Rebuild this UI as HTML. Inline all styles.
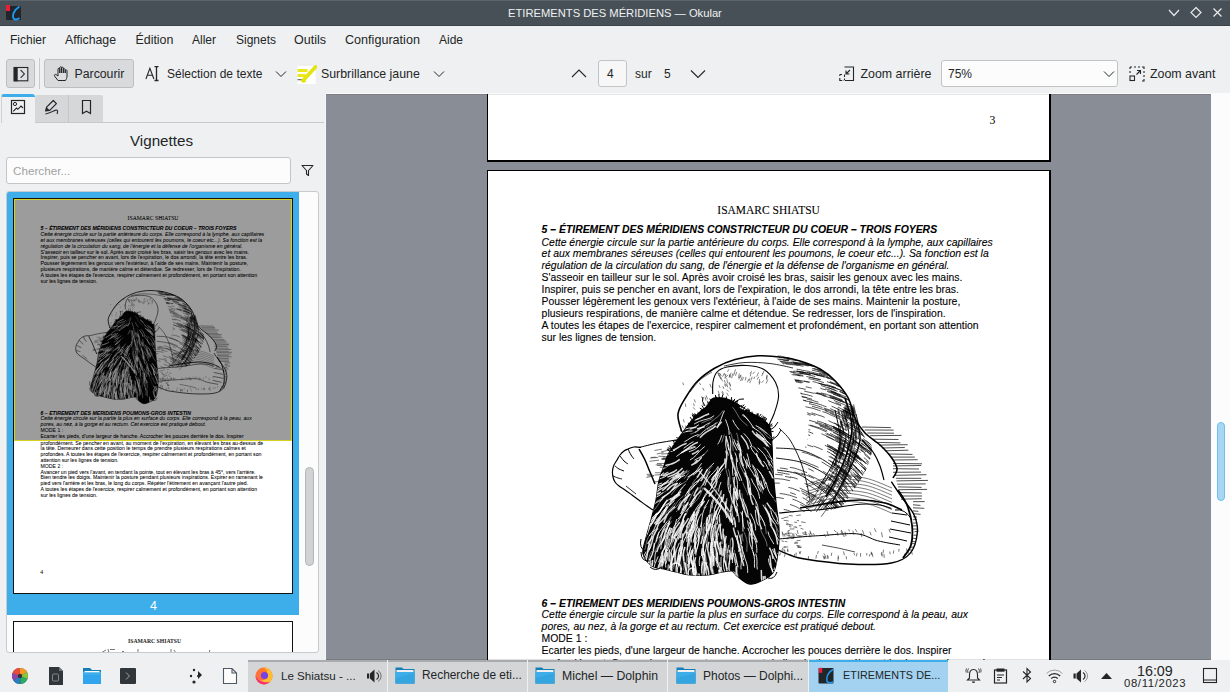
<!DOCTYPE html>
<html><head><meta charset="utf-8">
<style>
*{box-sizing:border-box}
html,body{margin:0;padding:0}
body{width:1230px;height:692px;overflow:hidden;position:relative;background:#eff0f1;font-family:"Liberation Sans",sans-serif;color:#232627}
.a{position:absolute}
.t{position:absolute;white-space:pre;line-height:1}
#title{left:0;top:0;width:1230px;height:26px;background:#475057;border-top:1px solid #5b646c;border-bottom:1px solid #3b4349}
.menu{font-size:12px;top:34px}
.tb{font-size:12px;top:68px}
.btn{position:absolute;border:1px solid #bcbebf;border-radius:3px;background:#d9dadc}
#doc{left:326px;top:94px;width:885px;height:566px;background:#898d95;overflow:hidden}
#vscroll{left:1211px;top:94px;width:19px;height:566px;background:#fcfcfc}
#task{left:0;top:660px;width:1230px;height:32px;background:#eff0f1}
.tk{position:absolute;top:660px;height:32px;background:#d4d5d7;border-top:2px solid #a9abae}
.tkt{font-size:12px;top:670px}
.page{position:absolute;background:#fff;border:1px solid #000;border-right-width:2px;border-bottom-width:2px}
.pc{position:absolute;left:0;top:0;width:564px;height:796px;font-family:"Liberation Sans",sans-serif;color:#000}
.pc .ln{position:absolute;left:55px;white-space:pre;font-size:10.37px;line-height:1;-webkit-text-stroke:0.1px #000}
.pc .i{font-style:italic}
.pc .b{font-weight:bold;font-style:italic}
</style></head>
<body>
<!-- title bar -->
<div id="title" class="a"></div>
<svg class="a" style="left:5px;top:4px" width="17" height="17" viewBox="0 0 17 17">
 <rect x="1" y="2" width="15" height="14" rx="1" fill="#232629"/>
 <rect x="1" y="1" width="4" height="6" fill="#ed1c3a"/>
 <path d="M14.5 2.5 C9 6 7 11 8.5 14.5 C10 16 12.5 15.5 14.5 14" stroke="#1d99f3" stroke-width="1.8" fill="none"/>
</svg>
<div class="t" style="left:508px;top:8px;font-size:11.2px;color:#eff0f1">ETIREMENTS DES MÉRIDIENS — Okular</div>
<svg class="a" style="left:1166px;top:5px" width="60" height="16" viewBox="0 0 60 16">
 <path d="M3 5 L8 10.5 L13 5" stroke="#e8eaec" stroke-width="1.2" fill="none"/>
 <path d="M30 2.5 L35 7.5 L30 12.5 L25 7.5 Z" stroke="#e8eaec" stroke-width="1.2" fill="none"/>
 <path d="M47.5 3.5 L55.5 11.5 M55.5 3.5 L47.5 11.5" stroke="#e8eaec" stroke-width="1.2" fill="none"/>
</svg>

<!-- menu -->
<div class="t menu" style="left:10px">Fichier</div>
<div class="t menu" style="left:65px;font-size:12.3px">Affichage</div>
<div class="t menu" style="left:135.5px;font-size:12.4px">Édition</div>
<div class="t menu" style="left:192px">Aller</div>
<div class="t menu" style="left:236px">Signets</div>
<div class="t menu" style="left:294px;font-size:12.5px">Outils</div>
<div class="t menu" style="left:345px;font-size:12.6px">Configuration</div>
<div class="t menu" style="left:439px">Aide</div>

<!-- toolbar -->
<div class="btn" style="left:6px;top:59px;width:29px;height:29px"></div>
<div class="a" style="left:39px;top:58px;width:1px;height:31px;background:#c9cacb"></div>
<div class="btn" style="left:44px;top:59px;width:90px;height:29px"></div>
<div class="t tb" style="left:74.5px;font-size:12.3px">Parcourir</div>
<div class="t tb" style="left:167px">Sélection de texte</div>
<div class="t tb" style="left:321px;font-size:12.35px">Surbrillance jaune</div>
<div class="a" style="left:598px;top:60px;width:29px;height:27px;border:1px solid #c2c3c5;border-radius:3px;background:#f7f7f7"></div>
<div class="t tb" style="left:607px">4</div>
<div class="t tb" style="left:635px">sur</div>
<div class="t tb" style="left:664px">5</div>
<div class="t tb" style="left:860.5px;font-size:12.4px">Zoom arrière</div>
<div class="a" style="left:941px;top:60px;width:177px;height:27px;border:1px solid #c2c3c5;border-radius:3px;background:#fcfcfc"></div>
<div class="t tb" style="left:948px">75%</div>
<div class="t tb" style="left:1150px;font-size:12.4px">Zoom avant</div>

<!-- toolbar icons -->
<svg class="a" style="left:13px;top:66px" width="16" height="16" viewBox="0 0 16 16">
 <rect x="1.2" y="1.5" width="13.6" height="13.3" fill="#dfe0e2" stroke="#232627" stroke-width="1.1"/>
 <rect x="0.7" y="1" width="4" height="14.3" fill="#232627"/>
 <path d="M7.6 4 L11.4 7.9 L7.6 11.8" fill="none" stroke="#31363b" stroke-width="1.1"/>
</svg>
<svg class="a" style="left:53px;top:65px" width="17" height="17" viewBox="0 0 17 17">
 <path d="M5 15.5 L1.5 11 C1 10 2 9 3 9.5 L5 11 V4 C5 3 6.8 3 6.8 4 V8 V2.5 C6.8 1.5 8.6 1.5 8.6 2.5 V8 V3 C8.6 2 10.4 2 10.4 3 V8 V4.5 C10.4 3.5 12.2 3.5 12.2 4.5 V8 V5.5 C12.2 4.7 14 4.7 14 5.5 V11 C14 13 13 14.5 12.5 15.5 Z" fill="#fff" fill-opacity="0.1" stroke="#232627" stroke-width="1" stroke-linejoin="round"/>
</svg>
<svg class="a" style="left:145px;top:66px" width="16" height="16" viewBox="0 0 16 16">
 <path d="M0.9 13 L4.9 2.3 L8.9 13 M2.4 9.3 H7.4" fill="none" stroke="#232627" stroke-width="1.1"/>
 <path d="M9.5 0.6 H13.5 M11.5 0.6 V14.5 M9.5 14.5 H13.5" fill="none" stroke="#232627" stroke-width="1.3"/>
</svg>
<svg class="a" style="left:297px;top:64px" width="20" height="21" viewBox="0 0 20 21">
 <rect x="0.5" y="0.5" width="18" height="19.5" fill="#fff"/>
 <rect x="0.5" y="0.5" width="18" height="1" fill="#e4e4e4"/>
 <rect x="0.5" y="5" width="10" height="3" fill="#e8e81a"/>
 <rect x="0.5" y="10" width="8" height="3" fill="#e8e81a"/>
 <rect x="0.5" y="15" width="5" height="1.3" fill="#777"/>
 <path d="M18.5 3 L6 16.5" stroke="#e4e412" stroke-width="3.8" stroke-linecap="round"/>
 <path d="M5 17.5 L9 17.5" stroke="#dede00" stroke-width="1.5"/>
</svg>
<svg class="a" style="left:275px;top:70px" width="12" height="8" viewBox="0 0 12 8"><path d="M1 1.5 L6 6.5 L11 1.5" fill="none" stroke="#232627" stroke-width="1"/></svg>
<svg class="a" style="left:433px;top:70px" width="12" height="8" viewBox="0 0 12 8"><path d="M1 1.5 L6 6.5 L11 1.5" fill="none" stroke="#232627" stroke-width="1"/></svg>
<svg class="a" style="left:571px;top:68px" width="16" height="10" viewBox="0 0 16 10"><path d="M1 9 L8 2 L15 9" fill="none" stroke="#232627" stroke-width="1.1"/></svg>
<svg class="a" style="left:690px;top:69px" width="16" height="10" viewBox="0 0 16 10"><path d="M1 1.5 L8 8.5 L15 1.5" fill="none" stroke="#232627" stroke-width="1.1"/></svg>
<svg class="a" style="left:1103px;top:70px" width="12" height="8" viewBox="0 0 12 8"><path d="M1 1.5 L6 6.5 L11 1.5" fill="none" stroke="#232627" stroke-width="1"/></svg>
<svg class="a" style="left:839px;top:66px" width="16" height="16" viewBox="0 0 16 16">
 <path d="M5.5 1 H14.5 V14.5 H6" fill="none" stroke="#232627" stroke-width="1.1"/>
 <path d="M0.8 8.5 V10 M0.8 12 V14.5 H3.2 M5.2 14.5 H4.6 M0.8 8.5 H3 M5.5 8.5 V11 M5.5 12.5 V14" fill="none" stroke="#232627" stroke-width="1.1"/>
 <path d="M11 4 L7 8 M7 4.5 V8 H10.5" fill="none" stroke="#232627" stroke-width="1.1"/>
</svg>
<svg class="a" style="left:1129px;top:66px" width="16" height="16" viewBox="0 0 16 16">
 <path d="M1 1 H3 M5 1 H7 M9 1 H11 M13 1 H15 V3 M15 5 V7 M15 9 V11 M15 13 V15 H13 M1 1 V3 M1 5 V7" fill="none" stroke="#232627" stroke-width="1.1"/>
 <rect x="1" y="10" width="4.5" height="4.5" fill="none" stroke="#232627" stroke-width="1.1"/>
 <path d="M7.5 8.5 L11.5 4.5 M8 4.5 H11.5 V8" fill="none" stroke="#232627" stroke-width="1.1"/>
</svg>
<!-- left panel -->

<!-- tabs -->
<div class="a" style="left:1px;top:94px;width:34px;height:29px;background:#eff0f1;border-left:1px solid #cfd0d1;border-top:3px solid #3daee9;border-radius:3px 3px 0 0"></div>
<div class="a" style="left:35px;top:95px;width:34px;height:27px;background:#d6d7d9;border-right:1px solid #c4c5c7;border-radius:2px 0 0 0"></div>
<div class="a" style="left:69px;top:95px;width:34px;height:27px;background:#d6d7d9;border-radius:0 2px 0 0"></div>
<div class="a" style="left:35px;top:122px;width:289px;height:1px;background:#c8c9ca"></div>
<svg class="a" style="left:10px;top:99px" width="16" height="16" viewBox="0 0 16 16">
 <rect x="1.5" y="1.5" width="13" height="13" fill="none" stroke="#232627" stroke-width="1.2"/>
 <circle cx="5" cy="5" r="1.6" fill="none" stroke="#232627" stroke-width="1"/>
 <path d="M3.2 12.3 L6.5 9 L7.8 10.3 L11 7 L13 9" fill="none" stroke="#232627" stroke-width="1.1"/>
</svg>
<svg class="a" style="left:44px;top:99px" width="17" height="18" viewBox="0 0 17 18">
 <path d="M1.6 12 L2.6 8.2 L9.3 1.5 L12.4 4.6 L5.7 11.3 Z" fill="none" stroke="#232627" stroke-width="1.2" stroke-linejoin="round"/>
 <path d="M1.6 12 L2.6 8.2 L5.7 11.3 Z" fill="#232627"/>
 <path d="M1.3 15 C5 14.5 9 12 12 11.2 C13.8 10.8 14 13 13 15" fill="none" stroke="#31363b" stroke-width="1.2"/>
</svg>
<svg class="a" style="left:81px;top:99px" width="11" height="16" viewBox="0 0 11 16">
 <path d="M1.5 1.5 H9.5 V14.5 L5.5 12.3 L1.5 14.5 Z" fill="none" stroke="#232627" stroke-width="1.2"/>
</svg>
<div class="t" style="left:130px;top:133px;font-size:15.2px">Vignettes</div>
<div class="a" style="left:6px;top:157px;width:285px;height:27px;background:#fcfcfc;border:1px solid #c4c5c6;border-radius:3px"></div>
<div class="t" style="left:13px;top:165px;font-size:11.7px;color:#9fa1a3">Chercher...</div>
<svg class="a" style="left:301px;top:164px" width="13" height="13" viewBox="0 0 13 13">
 <path d="M1 1.5 H12 L7.5 6.5 V11.5 L5.5 10 V6.5 Z" fill="none" stroke="#232627" stroke-width="1.1" stroke-linejoin="round"/>
</svg>
<!-- thumbnail list -->
<div class="a" style="left:6px;top:191px;width:313px;height:462px;background:#fcfcfc;border:1px solid #c9cacb;border-radius:3px;overflow:hidden">
 <div class="a" style="left:0;top:0;width:292px;height:423px;background:#3daee9"></div>
 <div class="t" style="left:143px;top:408px;font-size:12.5px;color:#fff">4</div>
 <div class="a" style="left:6px;top:6px;width:280px;height:396px;border:1px solid #111;background:#fff;overflow:hidden">
   <div class="a" style="left:0;top:0;width:564px;height:796px;transform:scale(0.4955);transform-origin:0 0"><div class="pc"><div class="ln" style="left:229.3px;top:34.17px;font-size:11.5px;font-family:'Liberation Serif',serif">ISAMARC SHIATSU</div><div class="ln b" style="left:53.6px;top:54.28px;font-size:10.42px">5 – ÉTIREMENT DES MÉRIDIENS CONSTRICTEUR DU COEUR – TROIS FOYERS</div><div class="ln i" style="left:53.6px;top:66.68px;font-size:10.42px">Cette énergie circule sur la partie antérieure du corps. Elle correspond à la lymphe, aux capillaires</div><div class="ln i" style="left:53.6px;top:78.48px;font-size:10.42px">et aux membranes séreuses (celles qui entourent les poumons, le coeur etc...). Sa fonction est la</div><div class="ln i" style="left:53.6px;top:90.23px;font-size:10.42px">régulation de la circulation du sang, de l'énergie et la défense de l'organisme en général.</div><div class="ln" style="left:53.6px;top:101.78px;font-size:10.42px">S'asseoir en tailleur sur le sol. Après avoir croisé les bras, saisir les genoux avec les mains.</div><div class="ln" style="left:53.6px;top:114.48px;font-size:10.42px">Inspirer, puis se pencher en avant, lors de l'expiration, le dos arrondi, la tête entre les bras.</div><div class="ln" style="left:53.6px;top:125.98px;font-size:10.42px">Pousser légèrement les genoux vers l'extérieur, à l'aide de ses mains. Maintenir la posture,</div><div class="ln" style="left:53.6px;top:137.88px;font-size:10.42px">plusieurs respirations, de manière calme et détendue. Se redresser, lors de l'inspiration.</div><div class="ln" style="left:53.6px;top:149.58px;font-size:10.42px">A toutes les étapes de l'exercice, respirer calmement et profondément, en portant son attention</div><div class="ln" style="left:53.6px;top:161.53px;font-size:10.42px">sur les lignes de tension.</div><div class="ln b" style="left:53.6px;top:427.68px;font-size:10.42px">6 – ETIREMENT DES MERIDIENS POUMONS-GROS INTESTIN</div><div class="ln i" style="left:53.6px;top:439.48px;font-size:10.42px">Cette énergie circule sur la partie la plus en surface du corps. Elle correspond à la peau, aux</div><div class="ln i" style="left:53.6px;top:451.18px;font-size:10.42px">pores, au nez, à la gorge et au rectum. Cet exercice est pratiqué debout.</div><div class="ln" style="left:53.6px;top:462.88px;font-size:10.42px">MODE 1 :</div><div class="ln" style="left:53.6px;top:474.68px;font-size:10.42px">Ecarter les pieds, d'une largeur de hanche. Accrocher les pouces derrière le dos. Inspirer</div><div class="ln" style="left:53.6px;top:487.68px;font-size:10.42px">profondément. Se pencher en avant, au moment de l'expiration, en élevant les bras au-dessus de</div><div class="ln" style="left:53.6px;top:499.48px;font-size:10.42px">la tête. Demeurer dans cette position le temps de prendre plusieurs respirations calmes et</div><div class="ln" style="left:53.6px;top:511.28px;font-size:10.42px">profondes. A toutes les étapes de l'exercice, respirer calmement et profondément, en portant son</div><div class="ln" style="left:53.6px;top:523.08px;font-size:10.42px">attention sur les lignes de tension.</div><div class="ln" style="left:53.6px;top:534.88px;font-size:10.42px">MODE 2 :</div><div class="ln" style="left:53.6px;top:546.68px;font-size:10.42px">Avancer un pied vers l'avant, en tendant la pointe, tout en élevant les bras à 45°, vers l'arrière.</div><div class="ln" style="left:53.6px;top:558.48px;font-size:10.42px">Bien tendre les doigts. Maintenir la posture pendant plusieurs inspirations. Expirer en ramenant le</div><div class="ln" style="left:53.6px;top:570.28px;font-size:10.42px">pied vers l'arrière et les bras, le long du corps. Répéter l'étirement en avançant l'autre pied.</div><div class="ln" style="left:53.6px;top:582.08px;font-size:10.42px">A toutes les étapes de l'exercice, respirer calmement et profondément, en portant son attention</div><div class="ln" style="left:53.6px;top:593.88px;font-size:10.42px">sur les lignes de tension.</div><div class="ln" style="left:53px;top:747.37px;font-size:11.5px;font-family:'Liberation Serif',serif">4</div><svg class="a" style="left:0;top:0" width="561" height="793" viewBox="488 171 561 793"><use href="#drawing"/></svg></div></div>
   <div class="a" style="left:0;top:0;width:278px;height:242px;background:rgba(0,0,0,0.39);border:1px solid #d9d21c;border-top:1px solid #d9d21c;border-left:1px solid #d9d21c"></div>
 </div>
 <div class="a" style="left:6px;top:429px;width:280px;height:396px;border:1px solid #111;background:#fff;overflow:hidden">
   <div class="t" style="left:114px;top:16.5px;font-size:5.7px;font-weight:bold;font-family:'Liberation Serif',serif;color:#222">ISAMARC SHIATSU</div>
   <svg class="a" style="left:80px;top:21px" width="140" height="10" viewBox="0 0 140 10"><path d="M7 10 L12 7 M14 6 L15 10 M16 6.5 L21 6.5 M27 10 L29 8 L31 10 M44 6 L44 10 M77 6 L77 10 M80 7 L82 10 M116 7 L115 10" stroke="#555" stroke-width="0.8" fill="none"/></svg>
 </div>
 <div class="a" style="left:298px;top:275px;width:9px;height:99px;background:#d1d2d3;border:1px solid #b4b5b6;border-radius:4.5px"></div>
</div>


<!-- document area -->
<div id="doc" class="a">
 <div class="page" style="left:161px;top:-728px;width:564px;height:796px">
  <div class="t" style="left:501.5px;top:747.8px;font-size:11.8px;font-family:'Liberation Serif',serif;color:#000">3</div>
 </div>
 <div class="page" style="left:161px;top:76px;width:564px;height:796px"><div class="pc"><div class="ln" style="left:229.3px;top:34.17px;font-size:11.5px;font-family:'Liberation Serif',serif">ISAMARC SHIATSU</div><div class="ln b" style="left:53.6px;top:54.28px;font-size:10.42px">5 – ÉTIREMENT DES MÉRIDIENS CONSTRICTEUR DU COEUR – TROIS FOYERS</div><div class="ln i" style="left:53.6px;top:66.68px;font-size:10.42px">Cette énergie circule sur la partie antérieure du corps. Elle correspond à la lymphe, aux capillaires</div><div class="ln i" style="left:53.6px;top:78.48px;font-size:10.42px">et aux membranes séreuses (celles qui entourent les poumons, le coeur etc...). Sa fonction est la</div><div class="ln i" style="left:53.6px;top:90.23px;font-size:10.42px">régulation de la circulation du sang, de l'énergie et la défense de l'organisme en général.</div><div class="ln" style="left:53.6px;top:101.78px;font-size:10.42px">S'asseoir en tailleur sur le sol. Après avoir croisé les bras, saisir les genoux avec les mains.</div><div class="ln" style="left:53.6px;top:114.48px;font-size:10.42px">Inspirer, puis se pencher en avant, lors de l'expiration, le dos arrondi, la tête entre les bras.</div><div class="ln" style="left:53.6px;top:125.98px;font-size:10.42px">Pousser légèrement les genoux vers l'extérieur, à l'aide de ses mains. Maintenir la posture,</div><div class="ln" style="left:53.6px;top:137.88px;font-size:10.42px">plusieurs respirations, de manière calme et détendue. Se redresser, lors de l'inspiration.</div><div class="ln" style="left:53.6px;top:149.58px;font-size:10.42px">A toutes les étapes de l'exercice, respirer calmement et profondément, en portant son attention</div><div class="ln" style="left:53.6px;top:161.53px;font-size:10.42px">sur les lignes de tension.</div><div class="ln b" style="left:53.6px;top:427.68px;font-size:10.42px">6 – ETIREMENT DES MERIDIENS POUMONS-GROS INTESTIN</div><div class="ln i" style="left:53.6px;top:439.48px;font-size:10.42px">Cette énergie circule sur la partie la plus en surface du corps. Elle correspond à la peau, aux</div><div class="ln i" style="left:53.6px;top:451.18px;font-size:10.42px">pores, au nez, à la gorge et au rectum. Cet exercice est pratiqué debout.</div><div class="ln" style="left:53.6px;top:462.88px;font-size:10.42px">MODE 1 :</div><div class="ln" style="left:53.6px;top:474.68px;font-size:10.42px">Ecarter les pieds, d'une largeur de hanche. Accrocher les pouces derrière le dos. Inspirer</div><div class="ln" style="left:53.6px;top:487.68px;font-size:10.42px">profondément. Se pencher en avant, au moment de l'expiration, en élevant les bras au-dessus de</div><div class="ln" style="left:53.6px;top:499.48px;font-size:10.42px">la tête. Demeurer dans cette position le temps de prendre plusieurs respirations calmes et</div><div class="ln" style="left:53.6px;top:511.28px;font-size:10.42px">profondes. A toutes les étapes de l'exercice, respirer calmement et profondément, en portant son</div><div class="ln" style="left:53.6px;top:523.08px;font-size:10.42px">attention sur les lignes de tension.</div><div class="ln" style="left:53.6px;top:534.88px;font-size:10.42px">MODE 2 :</div><div class="ln" style="left:53.6px;top:546.68px;font-size:10.42px">Avancer un pied vers l'avant, en tendant la pointe, tout en élevant les bras à 45°, vers l'arrière.</div><div class="ln" style="left:53.6px;top:558.48px;font-size:10.42px">Bien tendre les doigts. Maintenir la posture pendant plusieurs inspirations. Expirer en ramenant le</div><div class="ln" style="left:53.6px;top:570.28px;font-size:10.42px">pied vers l'arrière et les bras, le long du corps. Répéter l'étirement en avançant l'autre pied.</div><div class="ln" style="left:53.6px;top:582.08px;font-size:10.42px">A toutes les étapes de l'exercice, respirer calmement et profondément, en portant son attention</div><div class="ln" style="left:53.6px;top:593.88px;font-size:10.42px">sur les lignes de tension.</div><div class="ln" style="left:53px;top:747.37px;font-size:11.5px;font-family:'Liberation Serif',serif">4</div><svg class="a" style="left:0;top:0" width="561" height="793" viewBox="488 171 561 793"><use href="#drawing"/></svg></div></div>
</div>
<svg width="0" height="0" style="position:absolute"><defs><g id="drawing"><path d="M862.0 427.0L890.8 427.6M864.7 430.0L893.6 430.1M867.4 433.0L894.0 433.2M870.1 435.7L901.5 435.4M872.8 439.2L898.4 439.5M876.0 442.4L900.4 442.9M879.0 445.1L907.7 444.7M882.0 448.0L904.8 447.5M885.0 450.8L908.3 450.2M888.0 454.0L912.5 454.4M891.0 457.1L914.8 457.1M893.0 460.0L917.7 459.7M893.0 463.4L922.0 463.8M893.0 465.9L921.1 465.5M893.0 468.7L919.0 469.0M893.0 472.3L921.0 472.1M895.0 475.3L926.5 474.7M895.8 478.3L921.3 478.3M896.5 480.9L928.0 480.4M897.2 484.2L925.7 483.9M898.0 486.9L921.6 487.4M898.8 489.7L927.1 489.4M899.5 492.6L921.7 493.0M900.2 496.0L922.1 496.0M901.0 499.2L921.7 498.7M913.0 501.7L924.7 501.6M913.0 504.8L920.5 505.4M913.0 507.8L924.3 508.3M913.0 510.9L918.4 511.3M913.0 513.7L920.6 514.3M913.0 516.8L917.0 517.1M913.0 519.8L917.0 519.3M913.0 523.1L917.0 522.8M913.0 525.9L917.0 525.8M913.0 529.0L917.0 529.1M914.4 531.7L918.4 531.3M913.5 535.3L917.5 535.0M912.6 538.2L916.6 538.7M911.7 541.4L915.7 541.8M910.8 543.9L914.8 543.5M909.9 547.4L913.9 547.1M909.0 549.8L913.0 550.2" fill="none" stroke="#222" stroke-width="0.8"/><path d="M681.7 431.7C681.1 428.8 677.3 419.8 678.0 414.0C678.7 408.2 682.7 402.5 686.0 397.0C689.3 391.5 692.8 385.8 697.6 381.0C702.4 376.2 708.8 371.6 715.0 368.0C721.2 364.4 727.8 361.5 735.0 359.5C742.2 357.5 750.0 356.2 758.0 355.8C766.0 355.4 775.8 356.4 782.8 357.3C789.8 358.2 793.8 359.1 800.0 361.0C806.2 362.9 814.2 365.7 820.0 369.0C825.8 372.3 830.3 375.9 835.0 380.7C839.7 385.5 844.5 391.1 848.0 397.6C851.5 404.2 853.2 414.1 856.0 420.0C858.8 425.9 861.0 428.8 865.0 433.0C869.0 437.2 875.6 440.9 880.0 445.0C884.4 449.1 888.8 453.8 891.6 457.8C894.4 461.8 896.8 465.6 897.0 469.0C897.2 472.4 893.7 476.5 893.0 478.0" fill="none" stroke="#000" stroke-width="1.6"/><clipPath id="bc"><path d="M776.0 356.0C777.7 354.2 792.7 358.8 800.0 361.0C807.3 363.2 814.2 365.7 820.0 369.0C825.8 372.3 830.3 376.2 835.0 381.0C839.7 385.8 844.5 391.5 848.0 398.0C851.5 404.5 853.3 413.7 856.0 420.0C858.7 426.3 861.3 431.3 864.0 436.0C866.7 440.7 871.7 442.3 872.0 448.0C872.3 453.7 869.3 462.7 866.0 470.0C862.7 477.3 856.7 485.7 852.0 492.0C847.3 498.3 845.8 504.7 838.0 508.0C830.2 511.3 815.0 512.0 805.0 512.0C795.0 512.0 782.8 515.0 778.0 508.0C773.2 501.0 773.7 477.7 776.0 470.0C778.3 462.3 787.0 466.2 792.0 462.0C797.0 457.8 803.3 452.3 806.0 445.0C808.7 437.7 809.0 426.8 808.0 418.0C807.0 409.2 803.0 399.7 800.0 392.0C797.0 384.3 794.0 378.0 790.0 372.0C786.0 366.0 774.3 357.8 776.0 356.0Z"/></clipPath><g clip-path="url(#bc)"><path d="M832.6 397.5 L834.5 398.1 L836.4 398.8 L838.3 399.6 L840.1 400.4 L841.9 401.3 L843.7 402.0 L845.5 403.0 L847.3 403.8M830.1 371.3 L831.9 372.1 L833.8 372.7 L835.7 373.4 L837.6 374.1 L839.5 374.7 L841.4 375.3 L843.3 375.8 L845.1 376.7 L846.9 377.5 L848.7 378.4M864.5 469.4 L865.8 470.9 L867.2 472.4 L868.5 473.9 L869.7 475.5 L870.9 477.1 L872.2 478.6 L873.4 480.2 L874.5 481.9 L875.7 483.5M833.9 363.0 L835.8 363.7 L837.7 364.4 L839.6 365.0 L841.4 365.8 L843.3 366.5 L845.2 367.2 L847.0 368.0 L848.9 368.6 L850.7 369.5 L852.6 370.1M833.1 427.9 L834.9 428.8 L836.7 429.7 L838.4 430.7 L840.2 431.6 L842.1 432.4 L843.8 433.3 L845.5 434.4 L847.3 435.3M839.9 382.2 L841.7 383.0 L843.5 383.9 L845.4 384.6 L847.2 385.4 L849.1 386.2 L850.9 386.9 L852.7 387.7 L854.5 388.7 L856.2 389.7M844.7 503.9 L845.9 505.5 L847.1 507.1 L848.3 508.7 L849.4 510.3M835.7 430.0 L837.4 431.0 L839.2 432.0 L841.0 432.8 L842.8 433.6 L844.5 434.7 L846.3 435.6 L848.0 436.7 L849.6 437.8 L851.3 438.9M853.1 353.1 L855.0 353.7 L856.8 354.6 L858.7 355.3 L860.6 355.9 L862.5 356.6 L864.3 357.5M854.8 505.3 L855.9 506.9 L857.0 508.6 L858.2 510.2 L859.1 512.0M845.0 379.0 L846.8 379.8 L848.6 380.6 L850.5 381.5 L852.3 382.4 L854.1 383.2M853.2 496.8 L854.3 498.4 L855.6 500.0 L856.7 501.6 L857.8 503.3 L858.8 505.0 L859.9 506.7 L860.9 508.5 L861.8 510.3 L862.6 512.1 L863.4 513.9M845.8 482.6 L847.3 483.9 L848.6 485.4 L849.9 487.0 L851.1 488.5 L852.4 490.1 L853.6 491.6 L854.9 493.1 L856.1 494.8M859.9 406.5 L861.6 407.5 L863.2 408.6 L864.9 409.6 L866.7 410.6 L868.3 411.7 L870.1 412.7M852.7 372.8 L854.5 373.6 L856.3 374.6 L858.1 375.5 L859.8 376.4 L861.6 377.3 L863.3 378.3 L865.2 379.1M846.5 453.5 L848.1 454.7 L849.8 455.8 L851.4 457.0 L852.9 458.3 L854.4 459.7 L855.9 460.9 L857.4 462.3 L858.8 463.7 L860.2 465.1M830.2 382.6 L832.0 383.2 L834.0 383.7 L835.8 384.6 L837.7 385.3 L839.5 386.0 L841.4 386.8 L843.2 387.6M821.6 461.9 L823.3 462.8 L825.0 463.9 L826.7 465.0 L828.4 466.0 L830.1 467.1 L831.9 468.0 L833.6 469.1M855.7 495.9 L856.9 497.4 L858.1 499.1 L859.1 500.8 L860.3 502.4 L861.3 504.1M772.4 381.4 L774.4 381.4 L776.4 381.4 L778.4 381.5 L780.4 381.5 L782.4 381.7 L784.4 381.7 L786.4 381.9 L788.4 382.0M837.0 435.8 L838.7 436.8 L840.5 437.7 L842.2 438.8 L843.9 439.9 L845.5 441.1 L847.2 442.1 L848.9 443.1M863.2 371.7 L865.0 372.5 L866.9 373.3 L868.6 374.3 L870.4 375.2 L872.1 376.3 L873.9 377.1 L875.6 378.1 L877.3 379.1M865.7 506.9 L866.6 508.7 L867.5 510.4 L868.4 512.2 L869.3 514.0 L870.3 515.7 L871.2 517.5 L872.1 519.3M785.4 379.9 L787.4 380.2 L789.3 380.5 L791.3 380.6 L793.3 380.7 L795.3 381.1 L797.3 381.4 L799.2 381.8 L801.2 382.1 L803.2 382.4M812.6 381.6 L814.5 381.9 L816.4 382.5 L818.3 383.1 L820.3 383.7 L822.1 384.4 L824.1 385.0 L826.0 385.5M833.0 431.7 L834.8 432.5 L836.5 433.5 L838.2 434.5 L840.0 435.6 L841.6 436.6 L843.4 437.6 L845.0 438.7 L846.7 439.9 L848.3 441.0M850.6 474.0 L852.1 475.2 L853.6 476.6 L855.0 478.0 L856.5 479.3 L857.9 480.8 L859.2 482.3 L860.5 483.8 L861.8 485.3M869.2 457.9 L870.6 459.3 L872.0 460.7 L873.4 462.1 L874.7 463.7 L876.0 465.2 L877.3 466.7 L878.5 468.3 L879.7 469.9M796.9 415.1 L798.9 415.4 L800.9 415.6 L802.9 416.0 L804.8 416.6M829.6 511.2 L831.0 512.7 L832.2 514.3 L833.3 515.9 L834.6 517.5 L835.6 519.2 L836.7 520.9 L837.7 522.6 L838.8 524.3 L839.7 526.0M801.1 352.3 L803.1 352.5 L805.0 352.9 L807.0 353.2M864.2 471.2 L865.5 472.8 L867.0 474.2 L868.2 475.7 L869.5 477.2 L870.8 478.8 L871.9 480.4 L873.2 482.0 L874.4 483.6 L875.5 485.2 L876.6 486.9M833.4 368.6 L835.3 369.2 L837.2 369.7 L839.1 370.4 L841.0 370.9 L842.9 371.6 L844.8 372.4M874.8 504.3 L875.8 506.0 L876.6 507.9 L877.4 509.7 L878.2 511.5M829.3 445.9 L831.1 446.7 L832.9 447.6 L834.6 448.7 L836.3 449.8 L837.9 450.9 L839.7 451.8 L841.4 452.8 L843.1 453.9 L844.8 455.0M835.5 366.6 L837.4 367.1 L839.3 367.8 L841.1 368.5M858.0 362.0 L859.9 362.9 L861.6 363.8 L863.5 364.6 L865.3 365.4 L867.1 366.2 L868.9 367.2 L870.7 368.1 L872.4 369.0 L874.1 370.1M866.7 419.3 L868.3 420.5 L870.0 421.5 L871.7 422.6M829.2 428.5 L831.0 429.4 L832.9 430.2 L834.7 431.0 L836.5 431.9 L838.3 432.7M799.7 373.2 L801.7 373.4 L803.7 373.6 L805.6 374.1 L807.6 374.5 L809.5 375.0 L811.4 375.5 L813.4 376.1 L815.3 376.5M854.3 399.4 L856.0 400.4 L857.7 401.5 L859.5 402.4 L861.3 403.3 L863.0 404.3 L864.8 405.3M811.5 412.8 L813.4 413.4 L815.3 414.0 L817.2 414.7 L819.1 415.3 L821.0 415.9 L822.9 416.6 L824.7 417.4M799.6 353.6 L801.5 353.9 L803.5 354.4 L805.4 354.7 L807.4 355.2 L809.4 355.4 L811.3 355.8 L813.3 356.3M778.8 363.2 L780.8 363.2 L782.8 363.3 L784.8 363.4 L786.8 363.6 L788.8 363.8 L790.8 363.9 L792.8 364.0 L794.8 364.3 L796.7 364.6 L798.7 365.0M840.6 430.0 L842.3 431.0 L844.0 432.1 L845.7 433.1 L847.4 434.2 L849.1 435.3 L850.7 436.4 L852.3 437.6 L853.9 438.8M863.3 505.2 L864.3 506.9 L865.2 508.7 L866.1 510.5 L867.1 512.2 L868.1 514.0 L868.8 515.8 L869.5 517.7M809.4 377.2 L811.4 377.5 L813.3 378.1 L815.3 378.4 L817.2 378.9 L819.2 379.2 L821.1 379.8M851.5 379.1 L853.3 379.9 L855.0 380.9 L856.9 381.6 L858.8 382.4 L860.6 383.2 L862.4 384.0M793.5 380.0 L795.5 380.3 L797.5 380.5 L799.4 380.8 L801.4 381.3M870.5 428.2 L872.0 429.5 L873.5 430.8 L875.1 432.0M825.4 433.6 L827.2 434.4 L829.1 435.2 L830.9 435.9 L832.7 436.7 L834.5 437.6 L836.3 438.6 L838.0 439.7 L839.7 440.7 L841.5 441.6 L843.2 442.5M858.8 483.2 L860.1 484.7 L861.5 486.2 L862.7 487.7 L864.0 489.3 L865.1 491.0M831.6 488.9 L833.1 490.2 L834.5 491.6 L836.1 492.9 L837.4 494.4 L838.9 495.7 L840.2 497.2 L841.5 498.7 L842.9 500.1 L844.1 501.8M802.7 400.3 L804.7 400.7 L806.6 401.2 L808.6 401.6 L810.5 402.2 L812.4 402.5M857.1 455.9 L858.6 457.3 L860.2 458.5 L861.7 459.9 L863.1 461.2 L864.7 462.5 L866.0 464.0M853.9 383.5 L855.8 384.3 L857.6 385.2 L859.4 386.0 L861.2 386.9 L863.0 387.8M840.0 391.5 L841.9 392.3 L843.6 393.2 L845.5 394.0 L847.3 394.9 L849.1 395.7 L850.8 396.7 L852.7 397.4 L854.5 398.2M832.2 364.6 L834.2 365.1 L836.1 365.7 L838.0 366.2 L839.9 367.0M850.5 483.0 L851.9 484.4 L853.4 485.8 L854.7 487.3 L856.0 488.8 L857.1 490.5M852.9 457.0 L854.5 458.2 L856.1 459.4 L857.6 460.7M852.8 483.7 L854.1 485.2 L855.3 486.8 L856.6 488.3 L857.9 489.8M822.5 373.0 L824.5 373.5 L826.4 374.1 L828.2 374.8 L830.2 375.3 L832.0 376.1 L833.9 376.8 L835.8 377.3 L837.8 377.9 L839.7 378.5 L841.5 379.2M807.9 425.0 L809.9 425.4 L811.8 426.1 L813.7 426.7 L815.6 427.4 L817.4 428.0 L819.3 428.7 L821.2 429.5 L823.0 430.4 L824.8 431.2 L826.6 432.0M778.0 355.2 L780.0 355.4 L782.0 355.6 L784.0 355.6 L786.0 355.8 L788.0 356.0 L790.0 356.2 L792.0 356.4 L793.9 356.7 L795.9 356.8 L797.9 356.9M819.1 373.2 L821.1 373.6 L823.0 374.1 L825.0 374.6 L826.9 375.2 L828.8 375.7 L830.7 376.4 L832.6 376.8M833.0 426.1 L834.8 427.0 L836.6 428.0 L838.3 429.0 L840.1 429.9 L841.8 431.0 L843.5 432.0 L845.1 433.1M865.1 435.2 L866.6 436.5 L868.2 437.7 L869.8 438.8 L871.3 440.2 L872.8 441.6 L874.2 442.9M832.7 471.8 L834.4 472.8 L836.1 473.9 L837.7 475.1 L839.3 476.4 L840.8 477.6 L842.4 478.8 L843.9 480.2M825.3 388.7 L827.2 389.3 L829.1 389.8 L831.0 390.6 L832.8 391.4 L834.6 392.1 L836.5 392.9M848.4 441.8 L850.0 443.0 L851.7 444.0 L853.4 445.2M869.9 350.1 L871.7 350.9 L873.5 351.6 L875.3 352.6 L877.0 353.6 L878.8 354.5M807.4 444.9 L809.3 445.6 L811.2 446.2 L813.1 446.9M868.1 508.3 L869.1 510.1 L869.8 511.9 L870.6 513.8 L871.5 515.5M858.0 407.4 L859.7 408.5 L861.3 409.6 L863.0 410.6 L864.7 411.7M790.1 492.6 L792.0 493.2 L793.9 493.8 L795.8 494.6M861.3 465.5 L862.6 467.0 L864.1 468.4 L865.6 469.8 L867.0 471.1 L868.4 472.6 L869.7 474.1 L871.0 475.6 L872.4 477.0M831.9 387.1 L833.8 387.8 L835.7 388.4 L837.6 389.2 L839.5 389.8 L841.2 390.7 L843.1 391.5 L844.9 392.3 L846.7 393.1 L848.6 393.8 L850.4 394.7M841.8 434.3 L843.5 435.4 L845.3 436.3 L847.0 437.4 L848.7 438.4M853.1 388.2 L854.9 389.1 L856.6 390.0 L858.5 390.8 L860.3 391.7M845.0 442.8 L846.8 443.8 L848.5 444.7 L850.2 445.8 L851.8 447.0M827.0 478.2 L828.7 479.3 L830.4 480.4 L832.0 481.6 L833.6 482.8M857.2 477.4 L858.7 478.9 L860.1 480.3 L861.3 481.9 L862.7 483.3 L864.0 484.8 L865.1 486.4M848.2 356.4 L850.1 357.0 L852.0 357.7 L853.9 358.4 L855.7 359.1 L857.6 359.8 L859.5 360.4 L861.3 361.4 L863.0 362.3 L864.8 363.2 L866.7 364.0M860.8 445.7 L862.4 446.9 L863.8 448.3 L865.4 449.5 L866.8 450.9 L868.4 452.1 L869.9 453.5M841.3 489.8 L842.8 491.1 L844.1 492.6 L845.5 494.0 L846.9 495.5 L848.3 496.9 L849.6 498.4M845.1 393.5 L846.9 394.5 L848.7 395.3 L850.5 396.2 L852.2 397.1M775.8 413.8 L777.8 413.8 L779.8 413.9 L781.8 413.9M846.2 457.9 L847.8 459.1 L849.4 460.3 L850.9 461.6 L852.5 462.8M860.9 386.6 L862.7 387.5 L864.6 388.3 L866.4 389.1 L868.1 390.1 L869.8 391.1M854.9 508.0 L855.8 509.8 L856.9 511.5 L857.9 513.3 L858.7 515.1 L859.5 516.9 L860.3 518.8 L861.2 520.5 L861.9 522.4M822.2 395.3 L824.1 395.9 L826.0 396.5 L827.9 397.1 L829.8 397.7 L831.7 398.3 L833.6 399.0M814.3 374.4 L816.3 374.9 L818.2 375.5 L820.2 375.8 L822.1 376.3 L824.0 376.8 L826.0 377.2 L827.9 377.8 L829.9 378.3M804.2 391.0 L806.1 391.6 L808.1 392.0 L810.0 392.4 L812.0 392.9 L813.9 393.3M851.0 451.6 L852.6 452.8 L854.2 454.0 L855.7 455.3 L857.2 456.7 L858.8 457.9 L860.2 459.3M785.7 381.2 L787.7 381.3 L789.7 381.3 L791.7 381.5 L793.7 381.7 L795.7 381.9 L797.7 382.2 L799.6 382.6 L801.6 382.9M835.6 440.8 L837.3 441.8 L839.1 442.7 L840.8 443.8 L842.5 444.8 L844.2 445.9 L845.8 447.1 L847.4 448.2 L849.0 449.5 L850.5 450.7 L852.2 451.8M835.3 429.5 L837.1 430.3 L838.8 431.3 L840.6 432.3 L842.4 433.2 L844.1 434.1M783.2 360.2 L785.2 360.4 L787.2 360.5 L789.2 360.6M851.1 427.9 L852.7 429.0 L854.5 430.0 L856.2 431.0 L857.9 432.1 L859.4 433.3 L861.1 434.4 L862.7 435.7 L864.3 436.8 L865.9 438.1M858.5 484.2 L859.7 485.8 L861.0 487.4 L862.1 489.0 L863.3 490.6 L864.6 492.1 L865.8 493.8M840.3 387.4 L842.1 388.2 L843.9 389.1 L845.7 390.0M782.4 356.9 L784.4 357.1 L786.4 357.2 L788.4 357.3 L790.4 357.3 L792.4 357.5 L794.4 357.7 L796.4 357.9 L798.4 358.1M854.1 485.9 L855.3 487.4 L856.6 489.0 L857.7 490.6 L859.0 492.2 L860.2 493.8 L861.3 495.4M854.0 373.8 L855.8 374.7 L857.6 375.5 L859.4 376.4M782.6 402.4 L784.6 402.5 L786.6 402.7 L788.6 402.8 L790.6 403.0 L792.6 403.2 L794.6 403.5 L796.6 403.7M802.5 362.7 L804.4 363.2 L806.4 363.4 L808.3 363.9 L810.3 364.3 L812.3 364.7 L814.2 365.2M811.6 359.3 L813.5 359.8 L815.5 360.1 L817.4 360.7 L819.3 361.3 L821.2 361.9 L823.2 362.4 L825.1 363.0 L827.0 363.6M788.5 354.3 L790.5 354.4 L792.5 354.5 L794.4 354.8M802.6 433.3 L804.4 433.9 L806.4 434.3 L808.3 434.9 L810.2 435.6M853.2 469.1 L854.6 470.6 L856.0 472.0 L857.3 473.5 L858.8 474.8 L860.1 476.4 L861.5 477.8 L862.7 479.3 L864.1 480.8 L865.3 482.4M855.1 409.1 L856.9 410.0 L858.6 411.1 L860.3 412.1 L862.1 413.0 L863.8 414.0M847.9 384.2 L849.7 385.1 L851.5 385.8 L853.4 386.6 L855.2 387.3 L857.1 388.2 L858.9 389.1 L860.7 389.8M826.4 504.3 L827.8 505.7 L829.2 507.2 L830.6 508.6 L831.7 510.2 L833.0 511.7 L834.1 513.4 L835.4 515.0 L836.5 516.6 L837.6 518.3 L838.7 520.0M834.7 493.8 L836.1 495.2 L837.5 496.6 L839.0 498.0 L840.2 499.6 L841.5 501.1 L842.8 502.7 L844.0 504.3 L845.2 505.8M830.1 433.5 L832.0 434.3 L833.7 435.2 L835.5 436.2 L837.2 437.2 L839.0 438.1 L840.8 439.1 L842.4 440.2 L844.1 441.3M874.0 429.6 L875.5 430.8 L876.9 432.2 L878.4 433.6 L879.9 434.9 L881.4 436.3 L882.7 437.7 L884.3 439.0 L885.7 440.4 L887.1 441.9M826.3 490.2 L827.8 491.5 L829.5 492.7 L830.9 494.0 L832.3 495.5 L833.8 496.8M850.9 439.0 L852.7 440.0 L854.3 441.1 L856.0 442.2 L857.7 443.2 L859.4 444.4 L860.9 445.7 L862.4 447.0 L864.0 448.2 L865.6 449.4M846.4 381.9 L848.3 382.6 L850.1 383.3 L852.0 384.1 L853.8 385.0 L855.6 385.8 L857.4 386.7M843.0 379.3 L844.8 380.0 L846.7 380.7 L848.6 381.3 L850.4 382.3 L852.2 383.1 L854.0 383.9 L855.8 384.7 L857.6 385.7M842.6 469.3 L844.2 470.5 L845.8 471.7 L847.3 473.0 L848.8 474.3 L850.2 475.8M841.1 423.7 L842.8 424.7 L844.5 425.7 L846.3 426.6 L848.1 427.5 L849.8 428.5 L851.6 429.5M843.0 458.9 L844.7 459.9 L846.2 461.2 L847.8 462.4 L849.4 463.6 L851.0 464.9 L852.4 466.2M859.3 445.7 L860.8 447.0 L862.4 448.2 L864.0 449.4M840.4 448.1 L842.0 449.3 L843.7 450.4 L845.3 451.6 L847.0 452.7 L848.5 454.0 L850.0 455.3 L851.7 456.4 L853.3 457.6 L854.9 458.8 L856.4 460.2M808.8 373.2 L810.8 373.4 L812.8 373.8 L814.7 374.3 L816.7 374.8 L818.6 375.3 L820.5 375.8 L822.4 376.4 L824.3 377.0M826.3 436.5 L828.1 437.2 L829.9 438.1 L831.8 438.9 L833.5 439.8 L835.4 440.6 L837.2 441.5 L838.9 442.4 L840.7 443.4 L842.3 444.5M795.9 417.1 L797.9 417.4 L799.8 417.8 L801.8 418.2 L803.7 418.7M871.9 435.0 L873.4 436.4 L874.8 437.8 L876.3 439.1 L877.9 440.3 L879.5 441.5 L880.9 443.0 L882.3 444.4M844.8 375.4 L846.7 376.0 L848.6 376.7 L850.4 377.6M837.5 487.3 L839.1 488.6 L840.6 489.9 L842.1 491.2 L843.3 492.8 L844.7 494.2 L846.1 495.7M838.7 493.6 L840.1 495.1 L841.3 496.6 L842.7 498.1 L844.0 499.6 L845.2 501.2 L846.5 502.7 L847.8 504.3M815.2 423.0 L817.1 423.5 L819.0 424.2 L820.9 424.9 L822.8 425.6 L824.7 426.2 L826.6 426.8 L828.4 427.6 L830.3 428.3 L832.1 429.2M849.1 358.6 L851.0 359.3 L852.9 360.1 L854.7 360.8 L856.5 361.7 L858.3 362.5M800.0 460.1 L801.9 460.8 L803.8 461.4 L805.7 462.0 L807.6 462.8 L809.4 463.6 L811.2 464.4 L813.1 465.0 L814.9 465.9 L816.8 466.6 L818.5 467.6M817.0 420.8 L818.9 421.5 L820.8 422.0 L822.7 422.6 L824.5 423.4 L826.4 424.2M827.6 368.3 L829.4 369.1 L831.3 369.7 L833.2 370.4 L835.1 371.0 L837.0 371.6M826.3 486.0 L827.9 487.2 L829.6 488.3 L831.1 489.5 L832.7 490.8 L834.1 492.2 L835.5 493.7 L836.9 495.1 L838.2 496.6 L839.6 498.0M806.4 376.5 L808.3 376.9 L810.3 377.3 L812.2 377.8 L814.2 378.3 L816.1 378.8 L818.0 379.3 L820.0 379.8M830.4 391.6 L832.3 392.3 L834.1 393.0 L836.0 393.7 L837.8 394.5 L839.7 395.3 L841.5 396.2 L843.2 397.1 L845.1 397.9 L846.9 398.8M794.3 472.0 L796.2 472.6 L798.1 473.1 L800.0 473.8 L801.9 474.4 L803.8 475.1M850.3 480.5 L851.8 481.9 L853.2 483.3 L854.6 484.7 L855.9 486.3 L857.3 487.7 L858.5 489.3 L859.7 490.9 L860.8 492.5 L861.9 494.2M846.3 392.9 L848.1 393.7 L850.0 394.5 L851.8 395.3M796.6 371.3 L798.5 371.5 L800.5 371.8 L802.5 372.1 L804.4 372.5 L806.4 372.8M860.3 488.5 L861.4 490.1 L862.6 491.7 L863.8 493.3 L864.8 495.0 L865.9 496.7 L867.1 498.3 L868.3 500.0M846.6 502.9 L847.8 504.4 L849.0 506.0 L850.0 507.7 L851.2 509.3 L852.2 511.1 L853.2 512.9 L854.3 514.5M777.1 354.8 L779.1 354.9 L781.1 355.1 L783.1 355.3 L785.1 355.5 L787.1 355.5 L789.1 355.7 L791.1 355.7 L793.1 356.0 L795.1 356.1 L797.1 356.4M821.0 362.7 L822.9 363.4 L824.8 363.9 L826.8 364.4 L828.7 364.9 L830.7 365.4 L832.5 366.0 L834.4 366.8M872.5 503.9 L873.3 505.7 L874.4 507.4 L875.3 509.2 L876.1 511.0 L876.9 512.8 L877.7 514.7 L878.4 516.5 L879.0 518.4 L879.9 520.3M824.5 505.4 L825.8 506.9 L827.1 508.5 L828.6 509.9M854.8 350.1 L856.6 351.0 L858.4 351.9 L860.3 352.6 L862.1 353.4 L864.0 354.1 L865.8 354.8 L867.6 355.7 L869.5 356.5 L871.2 357.4M788.4 374.3 L790.4 374.6 L792.4 374.7 L794.4 374.9 L796.4 375.2 L798.4 375.4 L800.4 375.7M846.3 459.2 L847.9 460.3 L849.5 461.6 L851.1 462.8 L852.7 464.0 L854.2 465.3 L855.6 466.7 L857.1 468.1M810.7 372.0 L812.6 372.3 L814.5 372.9 L816.5 373.3 L818.5 373.7 L820.4 374.2 L822.3 374.8 L824.2 375.4 L826.1 376.0 L828.1 376.5M822.4 411.6 L824.3 412.2 L826.2 412.8 L828.0 413.6 L829.8 414.5 L831.6 415.4 L833.5 416.1 L835.3 417.0 L837.1 417.8 L838.9 418.7 L840.6 419.7M790.2 372.0 L792.2 372.3 L794.2 372.6 L796.2 372.9 L798.1 373.1 L800.1 373.3 L802.1 373.5 L804.1 374.0 L806.1 374.2 L808.0 374.5 L810.0 374.9M775.2 399.7 L777.2 399.8 L779.2 399.9 L781.2 400.0M850.0 435.3 L851.8 436.3 L853.5 437.3 L855.2 438.4M849.9 499.7 L851.1 501.3 L852.3 502.9 L853.5 504.5 L854.5 506.2M872.1 424.5 L873.7 425.7 L875.4 426.8 L876.8 428.2 L878.3 429.5 L879.9 430.7 L881.4 432.1 L882.9 433.3 L884.5 434.6 L886.1 435.8M789.2 352.5 L791.2 352.6 L793.2 352.8 L795.1 353.0M868.3 488.2 L869.4 489.8 L870.5 491.5 L871.6 493.1 L872.8 494.7M846.0 388.1 L847.7 389.0 L849.6 389.8 L851.4 390.5 L853.2 391.4M866.9 433.3 L868.5 434.5 L870.1 435.7 L871.6 437.0M836.3 424.9 L838.1 425.8 L839.9 426.7 L841.6 427.8 L843.4 428.7 L845.2 429.6 L846.9 430.5M854.0 388.0 L855.8 388.8 L857.6 389.8 L859.3 390.7 L861.1 391.6 L862.9 392.6 L864.5 393.7 L866.3 394.7 L868.0 395.7 L869.8 396.6M858.3 431.5 L860.0 432.5 L861.6 433.8 L863.1 435.0 L864.7 436.4M866.3 461.0 L867.7 462.5 L869.0 463.9 L870.5 465.3 L871.8 466.8 L873.2 468.3 L874.6 469.7 L875.8 471.3 L877.2 472.7M834.1 497.6 L835.6 498.9 L836.9 500.4 L838.3 501.8 L839.5 503.4 L840.7 505.1 L842.0 506.6 L843.2 508.2 L844.3 509.8M849.6 509.6 L850.6 511.3 L851.8 512.9 L852.7 514.7 L853.5 516.5M852.5 491.5 L853.7 493.1 L855.0 494.6 L856.2 496.2 L857.4 497.8 L858.7 499.3 L859.9 500.9 L860.9 502.6 L862.1 504.3 L863.1 506.0 L864.0 507.8M842.9 433.6 L844.7 434.5 L846.4 435.5 L848.1 436.6 L849.7 437.8 L851.4 438.9M867.3 497.7 L868.4 499.4 L869.3 501.1 L870.3 502.9 L871.3 504.6 L872.3 506.3 L873.2 508.1 L874.1 509.9 L875.1 511.6 L875.9 513.5 L876.7 515.3M804.4 361.3 L806.4 361.7 L808.3 362.2 L810.2 362.6 L812.2 363.0 L814.2 363.4M850.1 439.9 L851.6 441.1 L853.3 442.2 L855.0 443.4 L856.5 444.7 L858.1 445.9 L859.7 447.0 L861.2 448.3 L862.9 449.5 L864.5 450.7 L866.0 452.0M844.1 424.0 L845.9 424.9 L847.6 426.0 L849.2 427.1M775.9 361.5 L777.9 361.5 L779.9 361.5 L781.9 361.6 L783.9 361.7 L785.9 361.9 L787.9 362.1 L789.9 362.3 L791.8 362.6M783.5 358.9 L785.5 358.9 L787.5 359.0 L789.5 359.1M872.5 477.3 L873.7 478.9 L875.0 480.4 L876.1 482.1 L877.2 483.8 L878.3 485.4 L879.4 487.1 L880.5 488.7 L881.6 490.4M856.2 485.6 L857.5 487.2 L858.7 488.8 L859.9 490.4 L861.1 492.0 L862.4 493.6 L863.5 495.2 L864.6 496.9M827.2 509.9 L828.5 511.4 L829.7 513.0 L830.9 514.6 L832.1 516.2 L833.2 517.8 L834.3 519.5 L835.4 521.2 L836.5 522.8 L837.5 524.6M863.8 457.5 L865.3 458.8 L866.8 460.1 L868.3 461.5 L869.7 462.9 L871.1 464.3 L872.3 465.9 L873.7 467.4 L874.9 469.0 L876.2 470.4M842.7 461.8 L844.3 462.9 L845.9 464.1 L847.5 465.4 L849.1 466.5 L850.7 467.8 L852.1 469.1M868.0 390.5 L869.8 391.3 L871.5 392.4 L873.2 393.5M855.3 442.3 L857.0 443.4 L858.6 444.6 L860.2 445.8 L861.8 447.0 L863.3 448.3 L864.8 449.6 L866.4 450.9 L867.9 452.2 L869.3 453.6 L870.7 455.0M841.1 377.8 L843.0 378.4 L844.8 379.3 L846.6 380.1 L848.5 380.8 L850.3 381.6 L852.2 382.3 L854.0 383.2 L855.8 384.0M827.0 444.5 L828.9 445.3 L830.6 446.4 L832.3 447.3M860.5 360.1 L862.3 361.0 L864.2 361.8 L866.0 362.6M840.0 462.7 L841.7 463.8 L843.3 465.0 L844.9 466.2 L846.5 467.4 L848.1 468.6 L849.6 469.9M797.4 352.6 L799.4 352.8 L801.4 353.0 L803.3 353.4 L805.3 353.7 L807.3 354.0 L809.3 354.3 L811.2 354.8M849.2 450.9 L850.8 452.0 L852.4 453.2 L854.0 454.4 L855.6 455.7 L857.1 456.9 L858.7 458.2 L860.2 459.5 L861.6 460.9M863.7 386.3 L865.5 387.1 L867.3 388.1 L869.0 389.2 L870.7 390.1 L872.5 391.0M861.2 485.5 L862.4 487.0 L863.7 488.6 L864.9 490.2 L866.1 491.8 L867.1 493.5 L868.1 495.2 L869.1 497.0 L870.1 498.7M827.1 433.4 L828.9 434.2 L830.6 435.2 L832.5 436.0 L834.2 437.0 L836.0 437.8 L837.8 438.6 L839.6 439.6 L841.3 440.6 L843.1 441.5M829.1 502.2 L830.4 503.6 L831.8 505.1 L833.2 506.5 L834.5 508.0 L835.6 509.7 L836.8 511.3 L838.1 512.9 L839.2 514.5 L840.3 516.2M792.5 361.8 L794.5 362.2 L796.5 362.4 L798.4 362.6 L800.4 362.9 L802.4 363.1M855.5 467.3 L857.1 468.6 L858.5 470.0 L860.0 471.3M791.2 354.8 L793.2 355.2 L795.1 355.4 L797.1 355.5 L799.1 355.9 L801.1 356.1 L803.1 356.4M834.6 501.5 L836.0 503.0 L837.2 504.6 L838.5 506.0 L839.7 507.7 L841.0 509.2 L842.2 510.8 L843.2 512.6M840.8 360.7 L842.7 361.3 L844.6 362.1 L846.4 362.8 L848.2 363.7M840.3 451.7 L842.0 452.8 L843.7 453.8 L845.4 454.9 L847.0 456.1 L848.6 457.3 L850.3 458.4 L852.0 459.5 L853.4 460.9M809.0 403.5 L810.9 404.1 L812.8 404.5 L814.8 405.0 L816.7 405.6 L818.6 406.2 L820.5 406.9 L822.4 407.4M789.9 467.4 L791.9 467.7 L793.9 468.0 L795.8 468.5 L797.7 469.2 L799.6 469.8 L801.5 470.5 L803.3 471.2 L805.2 472.0 L807.1 472.6M856.7 373.9 L858.5 374.6 L860.3 375.6 L862.1 376.5M779.1 357.6 L781.1 357.8 L783.1 357.7 L785.1 357.7 L787.1 357.8 L789.1 357.9 L791.1 358.0 L793.1 358.1M837.2 377.2 L839.1 377.9 L841.0 378.5 L842.9 379.2 L844.7 380.0 L846.6 380.7 L848.4 381.5 L850.3 382.2M834.6 381.3 L836.4 382.1 L838.3 382.8 L840.2 383.5M826.9 502.3 L828.3 503.7 L829.7 505.1 L831.0 506.6 L832.2 508.2 L833.6 509.7 L834.9 511.2M843.4 499.8 L844.6 501.4 L845.8 503.1 L847.1 504.6 L848.1 506.3 L849.2 508.0 L850.2 509.7M864.3 443.5 L865.8 444.8 L867.3 446.1 L868.7 447.6 L870.3 448.8 L871.8 450.1 L873.2 451.5 L874.8 452.8 L876.1 454.2 L877.6 455.5 L879.0 457.0M842.8 380.7 L844.7 381.5 L846.6 382.2 L848.4 382.9 L850.3 383.5M770.2 403.2 L772.2 403.2 L774.2 403.1 L776.2 403.2 L778.2 403.2 L780.2 403.3 L782.2 403.5 L784.2 403.8 L786.1 404.1 L788.1 404.3 L790.1 404.5M852.2 506.6 L853.4 508.2 L854.6 509.8 L855.6 511.6 L856.7 513.2 L857.6 515.0 L858.4 516.8 L859.3 518.6M871.6 359.4 L873.4 360.3 L875.2 361.3 L876.9 362.3M827.5 488.7 L829.0 490.0 L830.7 491.2 L832.2 492.4M773.1 376.2 L775.1 376.1 L777.1 376.2 L779.1 376.4 L781.1 376.4 L783.1 376.4 L785.1 376.6 L787.1 376.9M862.8 439.8 L864.4 441.0 L865.8 442.4 L867.4 443.6 L868.9 444.9 L870.4 446.3 L871.9 447.6 L873.5 448.8 L875.0 450.2 L876.4 451.5M833.2 432.5 L835.0 433.3 L836.8 434.3 L838.5 435.2M874.0 478.4 L875.2 480.0 L876.4 481.6 L877.6 483.2 L878.6 484.9 L879.8 486.6 L880.9 488.2M774.9 414.7 L776.9 414.7 L778.9 414.7 L780.9 414.8 L782.9 415.0 L784.8 415.2 L786.8 415.4 L788.8 415.6 L790.8 415.8M863.3 384.5 L865.0 385.5 L866.9 386.3 L868.7 387.2 L870.3 388.3 L872.0 389.4 L873.8 390.3 L875.5 391.4 L877.2 392.4 L878.9 393.4 L880.6 394.5M785.1 476.4 L787.1 476.8 L789.0 477.2 L790.9 477.8M853.0 383.5 L854.8 384.3 L856.7 385.1 L858.4 386.1 L860.2 386.9 L862.0 387.9 L863.8 388.7 L865.5 389.8M869.6 450.1 L871.0 451.6 L872.4 453.0 L874.0 454.3 L875.4 455.7 L876.9 457.0 L878.2 458.5 L879.5 460.0 L880.8 461.6M846.4 425.1 L848.2 426.0 L849.9 427.1 L851.6 428.1M837.7 409.1 L839.4 410.0 L841.2 410.9 L843.1 411.6 L844.8 412.6M832.8 449.3 L834.5 450.4 L836.1 451.6 L837.8 452.6 L839.5 453.7 L841.2 454.8 L842.9 455.9 L844.5 457.0M838.0 407.1 L839.8 408.0 L841.5 408.9 L843.3 409.8 L845.1 410.7 L846.9 411.6 L848.7 412.5 L850.5 413.4 L852.3 414.2 L854.0 415.3M863.7 363.6 L865.5 364.4 L867.2 365.4 L869.1 366.2 L870.8 367.1 L872.7 368.0 L874.4 368.8 L876.2 369.8 L878.0 370.7 L879.7 371.7M804.2 381.0 L806.2 381.5 L808.1 381.9 L810.1 382.2M861.1 443.0 L862.8 444.2 L864.3 445.4 L866.0 446.6 L867.6 447.8 L869.1 449.1 L870.7 450.3 L872.0 451.8 L873.5 453.2 L874.8 454.7M870.4 472.8 L871.7 474.4 L872.9 475.9 L874.3 477.4 L875.5 479.0 L876.7 480.5 L877.9 482.1M844.9 461.6 L846.4 462.9 L848.1 464.0 L849.7 465.2 L851.3 466.4 L852.9 467.6 L854.3 469.1 L855.8 470.4 L857.2 471.7 L858.7 473.1M770.1 438.7 L772.1 438.6 L774.1 438.6 L776.1 438.7 L778.1 438.8 L780.1 439.0 L782.1 439.2 L784.1 439.4 L786.1 439.5 L788.1 439.8 L790.0 440.0M840.9 367.3 L842.8 368.0 L844.7 368.7 L846.6 369.3 L848.4 370.2M857.7 411.5 L859.4 412.7 L861.1 413.6 L862.8 414.8 L864.4 415.9 L866.0 417.1 L867.7 418.2 L869.4 419.2 L871.1 420.3 L872.8 421.4M864.5 497.4 L865.6 499.0 L866.8 500.7 L867.8 502.4 L868.8 504.2M851.5 420.8 L853.2 421.8 L855.0 422.8 L856.6 423.9 L858.3 425.0 L860.0 426.1 L861.6 427.2M785.2 357.3 L787.2 357.3 L789.2 357.4 L791.2 357.5 L793.2 357.9 L795.2 358.2M802.7 372.2 L804.6 372.5 L806.6 372.8 L808.6 373.0 L810.6 373.3 L812.5 373.8 L814.5 374.2 L816.4 374.7 L818.3 375.3 L820.3 375.6M847.4 399.1 L849.2 399.9 L850.9 400.9 L852.7 401.7 L854.5 402.7 L856.2 403.8M833.1 505.4 L834.3 507.0 L835.6 508.5 L836.8 510.1 L838.1 511.6M860.9 432.6 L862.5 433.7 L864.2 434.9 L865.7 436.2 L867.2 437.4 L868.7 438.7M805.7 386.8 L807.7 387.2 L809.7 387.7 L811.6 388.1M829.3 397.1 L831.2 397.8 L833.1 398.5 L835.0 399.2 L836.9 399.8 L838.7 400.5 L840.6 401.2 L842.5 402.0 L844.3 402.7M773.1 427.9 L775.1 427.9 L777.1 427.9 L779.1 428.0 L781.1 428.0 L783.1 428.1 L785.1 428.4 L787.1 428.6 L789.0 428.9 L791.0 429.1 L793.0 429.5M863.9 467.6 L865.3 469.0 L866.6 470.5 L868.0 472.0 L869.2 473.5 L870.5 475.1 L871.9 476.5M849.0 449.8 L850.7 450.9 L852.3 452.1 L853.9 453.2 L855.4 454.6 L857.0 455.8 L858.5 457.1 L860.1 458.3 L861.5 459.7 L863.0 461.0 L864.4 462.4M802.2 493.1 L804.0 494.0 L805.7 495.1 L807.4 496.1 L809.2 497.1M783.0 422.2 L785.0 422.3 L787.0 422.4 L789.0 422.6 L791.0 422.9 L793.0 423.2 L794.9 423.5 L796.9 424.0 L798.8 424.6M865.3 484.3 L866.5 485.8 L867.7 487.5 L868.9 489.1 L870.1 490.7M874.1 400.6 L875.9 401.6 L877.5 402.8 L879.1 404.0M774.4 388.4 L776.4 388.6 L778.4 388.6 L780.4 388.5 L782.4 388.8 L784.3 389.1 L786.3 389.3 L788.3 389.5 L790.3 389.8 L792.3 390.1M839.5 402.5 L841.3 403.5 L843.2 404.2 L845.0 405.0 L846.7 406.0M869.8 499.9 L870.7 501.7 L871.7 503.4 L872.8 505.1 L873.6 506.9 L874.5 508.7 L875.2 510.5 L876.2 512.3 L877.2 514.0 L877.9 515.9M842.8 409.6 L844.6 410.5 L846.3 411.5 L848.1 412.5M818.5 383.2 L820.5 383.8 L822.4 384.2 L824.4 384.6 L826.3 385.2 L828.2 385.7 L830.1 386.3 L832.1 386.8 L833.9 387.5M843.0 497.9 L844.2 499.5 L845.4 501.1 L846.6 502.7M777.5 457.6 L779.5 457.9 L781.5 458.1 L783.4 458.3 L785.4 458.7 L787.4 459.2 L789.3 459.6 L791.2 460.1 L793.2 460.5M860.6 449.2 L862.1 450.5 L863.6 451.8 L865.0 453.3M832.3 488.1 L833.8 489.4 L835.2 490.9 L836.7 492.2 L838.2 493.5 L839.7 494.9 L841.1 496.3 L842.3 497.9 L843.6 499.4 L844.9 500.9 L846.1 502.5M797.9 436.6 L799.9 437.0 L801.8 437.6 L803.7 438.2 L805.6 438.8 L807.5 439.4M861.0 470.0 L862.3 471.5 L863.6 473.0 L864.9 474.6 L866.1 476.2M810.4 361.3 L812.4 361.6 L814.3 362.0 L816.3 362.5 L818.2 362.9 L820.2 363.4M865.1 510.5 L866.1 512.3 L866.8 514.1 L867.8 515.8 L868.6 517.7 L869.5 519.4 L870.4 521.2 L871.0 523.2 L871.8 525.0 L872.4 526.9 L873.0 528.8M770.1 478.5 L772.1 478.6 L774.1 478.6 L776.1 478.7 L778.1 478.7 L780.1 479.0 L782.1 479.1 L784.1 479.4 L786.0 479.9 L788.0 480.3 L789.9 480.6M845.7 463.7 L847.3 464.9 L848.8 466.2 L850.4 467.4 L851.9 468.7 L853.5 470.0 L854.8 471.4 L856.3 472.8 L857.7 474.3 L859.1 475.7M848.9 509.1 L850.1 510.7 L851.3 512.3 L852.2 514.0M835.3 504.8 L836.7 506.3 L838.0 507.8 L839.3 509.2 L840.5 510.9M780.8 354.8 L782.8 354.8 L784.8 354.9 L786.8 355.0 L788.8 355.2 L790.8 355.5 L792.7 355.8 L794.7 355.9 L796.7 356.1 L798.7 356.5M866.1 499.6 L867.2 501.3 L868.2 503.0 L869.3 504.7M807.1 363.3 L809.1 363.7 L811.1 364.1 L813.0 364.6 L815.0 364.9M826.1 359.1 L828.1 359.6 L829.9 360.2 L831.9 360.7 L833.8 361.3 L835.7 362.0 L837.6 362.4 L839.5 363.1 L841.4 363.8 L843.2 364.5M869.5 462.5 L870.9 463.9 L872.4 465.3 L873.7 466.8 L875.1 468.2M842.9 417.5 L844.6 418.5 L846.3 419.6 L848.0 420.6M846.2 502.6 L847.5 504.1 L848.8 505.6 L849.9 507.3M833.6 427.2 L835.5 427.9 L837.3 428.7 L839.1 429.7 L840.8 430.6 L842.6 431.7 L844.2 432.8 L846.0 433.7 L847.8 434.6M785.1 429.6 L787.1 429.9 L789.1 430.2 L791.0 430.5 L793.0 431.0 L794.9 431.4 L796.9 431.9 L798.8 432.4 L800.8 432.8 L802.7 433.2M861.0 507.0 L861.9 508.7 L862.9 510.5 L863.8 512.2 L864.8 514.0 L865.7 515.8 L866.4 517.7 L867.2 519.5 L868.0 521.3 L868.8 523.1 L869.6 525.0M818.5 363.0 L820.4 363.5 L822.3 364.1 L824.2 364.6 L826.2 365.2 L828.1 365.6 L830.0 366.2 L831.9 366.8 L833.8 367.4 L835.8 367.9M818.1 360.2 L820.1 360.6 L822.1 361.0 L824.0 361.6M834.0 490.4 L835.6 491.7 L836.9 493.2 L838.3 494.6 L839.7 496.1M836.4 357.8 L838.3 358.5 L840.1 359.3 L842.0 360.0 L843.9 360.6 L845.8 361.1 L847.7 361.9M791.5 352.6 L793.5 352.9 L795.5 353.0 L797.5 353.1 L799.5 353.4 L801.4 353.6 L803.4 353.9 L805.4 354.4 L807.3 354.8 L809.3 355.1M833.7 396.9 L835.5 397.7 L837.3 398.5 L839.1 399.4 L841.0 400.2 L842.8 401.1M831.1 391.7 L833.1 392.2 L835.0 392.8 L836.8 393.6 L838.7 394.2 L840.6 394.9M857.0 485.2 L858.2 486.8 L859.4 488.4 L860.7 490.0 L861.9 491.5 L863.2 493.1 L864.3 494.7 L865.5 496.3M837.4 490.0 L839.0 491.2 L840.4 492.6 L841.8 494.1 L843.1 495.6M828.1 459.9 L829.8 460.8 L831.6 461.7 L833.3 462.8 L834.9 464.0 L836.5 465.2 L838.2 466.3 L839.8 467.5M824.4 423.6 L826.3 424.2 L828.2 424.9 L830.1 425.6 L831.9 426.3 L833.8 427.1 L835.6 427.8 L837.4 428.7 L839.3 429.5 L841.0 430.5M833.0 451.2 L834.8 452.1 L836.5 453.2 L838.2 454.3 L839.9 455.3 L841.5 456.4 L843.1 457.6 L844.7 458.9M834.7 438.9 L836.5 439.8 L838.3 440.8 L840.0 441.8 L841.6 442.9 L843.4 443.9M870.2 509.1 L871.0 510.9 L871.9 512.7 L872.9 514.4 L873.9 516.2 L874.6 518.0 L875.3 519.9 L876.0 521.8 L876.6 523.7 L877.2 525.6 L877.8 527.5M833.4 452.7 L835.1 453.8 L836.9 454.7 L838.6 455.8 L840.2 457.0 L841.9 458.1 L843.4 459.4 L845.0 460.5 L846.7 461.6M823.7 408.0 L825.6 408.6 L827.5 409.3 L829.4 409.9 L831.2 410.7 L833.0 411.6 L834.9 412.2 L836.7 413.2 L838.6 413.8 L840.3 414.8 L842.0 415.8M832.9 393.9 L834.8 394.5 L836.6 395.3 L838.5 396.0 L840.4 396.7 L842.3 397.4 L844.1 398.2 L845.9 399.0 L847.8 399.8 L849.5 400.7M853.5 480.3 L854.9 481.8 L856.3 483.2 L857.7 484.7 L858.9 486.2 L860.2 487.7 L861.4 489.3 L862.7 490.9 L863.8 492.5 L865.0 494.1 L866.1 495.8M869.7 470.3 L871.2 471.7 L872.6 473.1 L873.8 474.7 L875.2 476.2 L876.5 477.7 L877.8 479.2 L879.0 480.8 L880.1 482.5 L881.4 484.0 L882.6 485.6M771.3 358.7 L773.3 358.8 L775.3 358.9 L777.3 359.1 L779.3 359.2 L781.3 359.4 L783.3 359.6M798.7 445.2 L800.7 445.6 L802.6 446.1 L804.5 446.7 L806.4 447.2M842.3 444.9 L844.0 446.0 L845.6 447.2 L847.3 448.3 L848.9 449.4 L850.6 450.5 L852.3 451.6 L853.9 452.8 L855.5 453.9 L857.2 455.1 L858.8 456.3M827.0 381.7 L828.9 382.3 L830.8 382.9 L832.7 383.6 L834.5 384.4 L836.4 385.1 L838.2 385.8 L840.1 386.5 L841.9 387.3 L843.7 388.2M852.5 390.2 L854.3 391.0 L856.1 391.9 L858.0 392.7M811.9 370.1 L813.9 370.6 L815.8 371.0 L817.8 371.5 L819.7 371.9 L821.7 372.4 L823.6 373.0 L825.5 373.4 L827.4 374.0 L829.4 374.6 L831.3 375.1M846.9 391.1 L848.7 391.9 L850.5 392.8 L852.3 393.7 L854.1 394.5M852.3 439.3 L854.0 440.3 L855.7 441.4 L857.2 442.7 L858.8 443.9 L860.3 445.2 L862.0 446.3M836.1 369.2 L838.0 369.7 L839.9 370.5 L841.7 371.3 L843.6 372.0M774.8 474.2 L776.8 474.4 L778.8 474.6 L780.7 474.8 L782.7 475.0M854.0 447.8 L855.7 448.9 L857.4 450.0 L858.9 451.3 L860.5 452.6M856.9 475.1 L858.4 476.5 L859.8 477.8 L861.1 479.3 L862.5 480.8 L863.8 482.3 L865.1 483.9 L866.3 485.5M843.2 493.5 L844.5 495.0 L845.9 496.5 L847.1 498.0 L848.3 499.6 L849.4 501.3M855.0 467.5 L856.4 468.9 L857.9 470.3 L859.3 471.6 L860.7 473.1 L862.1 474.5 L863.4 476.0M824.6 409.0 L826.5 409.7 L828.3 410.5 L830.2 411.1 L832.0 412.0 L833.8 412.9M853.1 395.3 L854.9 396.1 L856.7 396.9 L858.4 398.0 L860.1 399.0 L861.8 400.0 L863.5 401.1 L865.3 402.1 L867.0 403.1 L868.8 404.0 L870.5 405.1M822.1 482.4 L823.8 483.4 L825.5 484.5 L827.2 485.6 L828.7 486.8 L830.3 488.1 L831.8 489.4 L833.3 490.7 L834.7 492.1M845.9 442.1 L847.6 443.1 L849.2 444.2 L850.9 445.4 L852.4 446.6M819.1 383.3 L821.0 383.9 L822.9 384.5 L824.8 385.0 L826.7 385.6 L828.6 386.2 L830.5 386.8 L832.4 387.5 L834.3 388.1M796.6 369.2 L798.5 369.5 L800.5 369.8 L802.5 370.3 L804.4 370.6 L806.4 371.0 L808.4 371.3 L810.3 371.9M870.0 460.7 L871.4 462.0 L872.9 463.4 L874.3 464.8 L875.6 466.3 L877.0 467.7 L878.4 469.2 L879.7 470.7 L881.1 472.2M853.5 407.3 L855.2 408.4 L856.9 409.5 L858.6 410.5 L860.3 411.7 L861.9 412.8 L863.5 414.0M813.4 446.1 L815.3 446.7 L817.1 447.5 L819.0 448.1 L820.8 449.0 L822.7 449.7M836.4 373.9 L838.3 374.6 L840.2 375.3 L842.0 376.1 L843.8 376.9M840.4 502.4 L841.6 504.0 L842.8 505.5 L843.9 507.2 L845.1 508.8 L846.3 510.4M789.1 396.5 L791.1 396.7 L793.1 397.1 L795.1 397.2M779.9 468.0 L781.9 468.2 L783.9 468.4 L785.8 468.8 L787.8 469.1M825.0 410.6 L826.8 411.3 L828.7 412.1 L830.6 412.7 L832.4 413.4 L834.3 414.2 L836.1 414.9 L838.0 415.6 L839.8 416.6 L841.5 417.6M875.0 438.2 L876.5 439.5 L878.1 440.7 L879.5 442.1 L881.0 443.5 L882.4 444.9 L884.0 446.2 L885.4 447.5M800.5 413.6 L802.5 413.8 L804.4 414.4 L806.3 415.0M834.0 468.9 L835.7 470.0 L837.3 471.2 L838.9 472.5 L840.5 473.6 L842.1 474.8 L843.6 476.1 L845.1 477.4 L846.6 478.8 L847.9 480.2 L849.4 481.6M867.6 449.7 L869.1 451.0 L870.7 452.3 L872.2 453.6 L873.6 455.0 L875.0 456.4 L876.5 457.7 L877.9 459.2M857.2 455.5 L858.8 456.7 L860.3 458.0 L861.8 459.3 L863.4 460.6 L864.9 461.9 L866.4 463.2 L867.9 464.5 L869.4 465.9 L870.7 467.3 L872.0 468.9M802.4 361.3 L804.3 361.7 L806.3 361.9 L808.3 362.3 L810.2 362.6 L812.2 363.1 L814.1 363.5 L816.1 364.0 L818.0 364.3M808.3 468.7 L810.2 469.5 L812.0 470.4 L813.7 471.3M794.1 363.2 L796.1 363.5 L798.1 363.7 L800.1 364.1 L802.1 364.2 L804.1 364.4 L806.0 364.7 L808.0 365.2 L810.0 365.5 L811.9 365.8M847.1 473.5 L848.5 474.9 L849.8 476.4 L851.2 477.8M829.4 363.8 L831.3 364.5 L833.2 365.1 L835.1 365.7 L836.9 366.5 L838.8 367.2 L840.7 367.8 L842.6 368.6 L844.4 369.3M831.7 502.4 L833.0 504.0 L834.3 505.4 L835.7 506.9 L837.0 508.4 L838.2 510.0 L839.2 511.7 L840.4 513.4 L841.4 515.1 L842.4 516.8 L843.5 518.5M840.0 421.0 L841.8 421.9 L843.6 422.9 L845.3 423.8 L847.1 424.8 L848.9 425.6M852.7 472.1 L854.2 473.4 L855.7 474.7 L857.1 476.1 L858.6 477.5 L859.8 479.1 L861.3 480.5 L862.7 481.9 L864.0 483.4 L865.4 484.9M826.9 361.4 L828.9 361.9 L830.8 362.4 L832.8 362.9 L834.7 363.5 L836.6 364.0 L838.5 364.7 L840.3 365.4M848.3 383.1 L850.1 384.0 L851.9 384.8 L853.6 385.8 L855.4 386.8 L857.1 387.7 L858.9 388.6 L860.7 389.4 L862.5 390.4M783.5 378.7 L785.5 378.8 L787.5 379.1 L789.4 379.4 L791.4 379.6 L793.4 379.8 L795.4 380.0 L797.4 380.1 L799.4 380.3M861.5 398.3 L863.3 399.2 L865.0 400.3 L866.7 401.3 L868.3 402.5 L870.1 403.4 L871.8 404.5 L873.4 405.6 L875.2 406.6 L876.8 407.9 L878.4 409.0M841.2 362.8 L843.0 363.6 L844.8 364.4 L846.7 365.2M825.7 364.8 L827.6 365.4 L829.5 366.0 L831.4 366.6 L833.4 367.1 L835.3 367.7 L837.2 368.2 L839.1 368.8M800.3 504.6 L802.1 505.4 L803.9 506.3 L805.5 507.5 L807.3 508.6 L808.9 509.8 L810.4 511.0 L812.0 512.3 L813.5 513.5 L815.1 514.8M843.0 410.3 L844.9 411.0 L846.7 411.9 L848.5 412.8 L850.2 413.8 L851.9 414.8 L853.7 415.7 L855.4 416.7 L857.2 417.6 L858.9 418.6M826.5 384.5 L828.4 385.2 L830.3 385.7 L832.2 386.4 L834.1 387.1 L836.0 387.7M800.5 451.7 L802.5 452.2 L804.4 452.7 L806.4 453.2 L808.3 453.8 L810.1 454.7 L812.0 455.3 L813.9 455.9 L815.7 456.7 L817.5 457.6 L819.4 458.3M854.6 488.5 L855.9 490.1 L857.1 491.7 L858.4 493.3 L859.5 494.9 L860.8 496.4M795.0 363.7 L797.0 363.8 L799.0 364.2 L800.9 364.7 L802.9 364.9 L804.9 365.3 L806.8 365.7 L808.8 365.9M777.1 389.4 L779.1 389.5 L781.1 389.5 L783.0 389.8 L785.0 390.1 L787.0 390.2 L789.0 390.5M788.2 417.9 L790.2 418.1 L792.2 418.3 L794.1 418.8 L796.1 419.1 L798.0 419.6 L800.0 420.1 L801.9 420.6 L803.8 421.1M842.5 498.8 L843.8 500.4 L845.0 501.9 L846.1 503.6 L847.4 505.2 L848.6 506.7 L849.7 508.4 L850.9 510.0 L851.9 511.8M836.8 350.3 L838.7 350.9 L840.6 351.6 L842.5 352.2 L844.4 352.8 L846.3 353.5 L848.1 354.3 L850.0 354.9M834.7 449.4 L836.4 450.4 L838.0 451.6 L839.7 452.7 L841.4 453.8 L843.0 455.0 L844.6 456.2 L846.1 457.4M874.8 361.6 L876.5 362.6 L878.2 363.7 L880.0 364.5 L881.7 365.5M863.4 467.0 L864.7 468.5 L866.2 469.9 L867.4 471.4 L868.8 472.9 L870.1 474.4 L871.4 476.0 L872.7 477.5 L874.0 479.0 L875.1 480.6 L876.3 482.3M847.7 504.9 L848.9 506.5 L850.1 508.1 L851.3 509.7 L852.3 511.4 L853.4 513.1M785.6 364.0 L787.6 364.1 L789.6 364.3 L791.6 364.6 L793.6 364.8 L795.5 365.0 L797.5 365.4 L799.5 365.5 L801.5 365.9 L803.4 366.4M847.3 405.6 L849.2 406.3 L851.0 407.1 L852.7 408.1 L854.4 409.2 L856.2 410.1 L858.0 411.0 L859.7 412.0 L861.4 413.1 L863.1 414.2 L864.7 415.3M846.1 364.8 L848.0 365.5 L849.8 366.2 L851.7 366.8 L853.6 367.5 L855.4 368.3M870.1 452.7 L871.6 454.1 L873.0 455.5 L874.4 456.9 L875.8 458.4M834.5 498.1 L835.9 499.6 L837.3 501.0 L838.6 502.5 L840.0 504.0M843.3 407.6 L845.2 408.3 L847.0 409.2 L848.8 410.1 L850.6 410.9 L852.3 411.9 L854.1 412.9 L855.9 413.8 L857.6 414.9 L859.3 415.8 L861.0 416.9M805.2 406.7 L807.2 407.1 L809.1 407.5 L811.1 407.9 L813.0 408.4 L814.9 409.0 L816.8 409.6 L818.7 410.3 L820.6 410.9M831.1 391.4 L833.0 391.9 L834.9 392.6 L836.8 393.3 L838.6 394.0 L840.5 394.7 L842.4 395.4 L844.2 396.2 L846.1 396.9M795.0 392.7 L797.0 393.1 L798.9 393.5 L800.9 393.7 L802.9 394.0 L804.9 394.3 L806.8 394.7 L808.8 395.3 L810.7 395.8 L812.6 396.4M771.8 354.4 L773.8 354.3 L775.8 354.3 L777.8 354.2 L779.8 354.4 L781.8 354.4 L783.8 354.5M788.4 487.4 L790.3 487.8 L792.3 488.3 L794.1 489.0 L796.0 489.7 L797.8 490.5 L799.7 491.2M872.6 506.4 L873.7 508.1 L874.6 509.9 L875.4 511.7 L876.2 513.5M874.8 482.3 L876.0 484.0 L877.3 485.5 L878.5 487.1 L879.5 488.8 L880.5 490.5 L881.5 492.3 L882.5 494.0 L883.6 495.7 L884.5 497.5 L885.5 499.2M851.0 437.4 L852.6 438.6 L854.2 439.8 L855.9 440.9 L857.4 442.2 L859.1 443.3 L860.7 444.5 L862.3 445.7M774.9 414.9 L776.9 415.1 L778.9 415.2 L780.9 415.2 L782.9 415.3 L784.9 415.5 L786.9 415.7 L788.9 415.8 L790.9 416.0 L792.9 416.3 L794.9 416.5M827.2 378.1 L829.2 378.5 L831.0 379.3 L832.9 380.0 L834.8 380.7 L836.6 381.4 L838.5 382.2 L840.3 382.9 L842.2 383.6 L844.1 384.3 L845.9 385.2M852.2 503.2 L853.3 504.8 L854.4 506.4 L855.6 508.1 L856.6 509.8 L857.5 511.6 L858.4 513.4 L859.4 515.1M816.0 481.6 L817.7 482.7 L819.4 483.7 L821.0 484.9 L822.6 486.1 L824.2 487.4 L825.9 488.5 L827.4 489.7 L829.0 490.9M865.6 488.2 L866.7 489.8 L868.0 491.3 L869.2 493.0 L870.3 494.6 L871.5 496.2 L872.4 498.0 L873.5 499.7 L874.6 501.4M869.6 452.8 L871.1 454.0 L872.5 455.4 L873.9 456.9 L875.3 458.3M801.1 473.0 L802.9 473.8 L804.8 474.4 L806.6 475.3 L808.5 476.0 L810.3 476.9 L812.2 477.6 L814.0 478.5M828.9 449.1 L830.6 450.0 L832.3 451.1 L834.1 452.0M780.7 362.0 L782.7 362.2 L784.7 362.4 L786.7 362.6 L788.7 362.9 L790.7 363.0 L792.7 363.2 L794.6 363.6 L796.6 364.0 L798.6 364.3 L800.5 364.6M806.0 364.7 L807.9 365.1 L809.9 365.5 L811.8 366.0 L813.7 366.5M770.1 383.4 L772.1 383.5 L774.1 383.5 L776.1 383.6 L778.1 383.6 L780.1 383.7M853.9 397.5 L855.6 398.4 L857.5 399.3 L859.2 400.2 L860.9 401.3 L862.7 402.2 L864.4 403.2 L866.0 404.3M831.9 462.8 L833.6 463.8 L835.3 464.9 L837.0 466.0 L838.7 467.0 L840.3 468.3 L841.9 469.4 L843.6 470.5M840.2 470.1 L841.9 471.2 L843.4 472.5 L845.1 473.7 L846.7 474.9 L848.2 476.1 L849.7 477.5 L851.2 478.9M792.9 362.6 L794.9 362.9 L796.8 363.3 L798.8 363.5 L800.8 363.7 L802.8 364.1 L804.8 364.3 L806.8 364.5 L808.7 364.9 L810.6 365.5 L812.6 366.0M858.7 401.5 L860.3 402.5 L862.0 403.7 L863.7 404.7 L865.3 405.9 L867.0 407.0 L868.7 408.0 L870.4 409.1 L872.0 410.3 L873.6 411.5 L875.3 412.5M853.6 455.3 L855.2 456.5 L856.7 457.7 L858.2 459.1M847.5 510.5 L848.5 512.2 L849.5 514.0 L850.5 515.7 L851.4 517.5 L852.2 519.3 L853.0 521.2 L853.9 522.9M866.1 421.9 L867.7 423.1 L869.3 424.2 L870.9 425.5 L872.6 426.6M813.5 360.6 L815.4 361.1 L817.4 361.4 L819.3 361.7 L821.3 362.1 L823.2 362.7 L825.2 363.1M858.9 489.1 L860.2 490.7 L861.3 492.3 L862.5 493.9 L863.7 495.5 L864.9 497.1 L866.0 498.8 L867.1 500.4 L868.1 502.2M842.5 415.2 L844.3 416.1 L846.1 416.9 L847.9 417.8 L849.7 418.7 L851.4 419.8 L853.1 420.7 L854.8 421.9 L856.4 423.0 L858.1 424.2M870.0 431.2 L871.6 432.5 L873.2 433.7 L874.7 434.9 L876.3 436.2 L877.8 437.6 L879.2 438.9 L880.7 440.2 L882.2 441.5M860.2 431.5 L861.9 432.5 L863.5 433.7 L865.2 434.9 L866.8 436.1 L868.2 437.4M825.9 376.9 L827.8 377.5 L829.8 378.0 L831.7 378.7 L833.6 379.3 L835.4 380.0 L837.3 380.7 L839.2 381.3 L841.1 382.0M849.9 506.3 L851.0 507.9 L852.2 509.5 L853.2 511.3 L854.3 512.9 L855.3 514.7 L856.2 516.4 L857.2 518.2M860.6 438.5 L862.2 439.7 L863.9 440.9 L865.4 442.1M838.1 445.7 L839.8 446.7 L841.4 447.8 L843.1 448.9 L844.8 450.0 L846.4 451.2 L848.1 452.3M859.7 482.2 L861.1 483.7 L862.5 485.2 L863.7 486.7 L864.9 488.4 L866.1 490.0 L867.1 491.7 L868.2 493.4M827.1 445.8 L828.8 446.7 L830.6 447.6 L832.3 448.6 L834.0 449.7 L835.8 450.6 L837.5 451.7 L839.2 452.8 L840.8 453.9 L842.5 455.0 L844.1 456.2M866.7 494.3 L867.8 495.9 L868.8 497.7 L870.0 499.3 L871.0 501.0 L872.1 502.7 L873.0 504.4M787.5 398.3 L789.5 398.5 L791.5 398.9 L793.5 399.2 L795.4 399.5 L797.4 399.9M793.5 371.1 L795.5 371.2 L797.5 371.5 L799.5 371.8 L801.4 372.2 L803.4 372.5M834.8 475.9 L836.3 477.2 L837.8 478.5 L839.3 479.8 L840.9 481.0 L842.5 482.2 L844.0 483.6 L845.4 485.0 L846.9 486.4M869.8 421.1 L871.5 422.2 L873.0 423.5 L874.6 424.7M819.8 426.0 L821.7 426.7 L823.5 427.5 L825.4 428.3 L827.2 429.0 L829.1 429.8 L830.8 430.7 L832.7 431.4M827.4 448.7 L829.3 449.5 L831.0 450.5 L832.7 451.5 L834.4 452.6 L836.0 453.8 L837.8 454.7M869.1 430.1 L870.8 431.3 L872.3 432.6 L873.8 433.9M774.0 431.0 L776.0 431.0 L778.0 431.1 L780.0 431.2 L782.0 431.4 L784.0 431.7 L786.0 431.8 L788.0 432.0M770.7 452.9 L772.7 452.9 L774.7 452.9 L776.7 453.2 L778.7 453.2 L780.7 453.2 L782.7 453.3 L784.7 453.5M847.5 469.8 L849.1 471.0 L850.6 472.3 L852.1 473.6 L853.5 475.0 L854.9 476.5 L856.3 477.9 L857.6 479.4 L858.9 480.9 L860.2 482.4 L861.5 484.0M776.9 353.1 L778.9 353.1 L780.9 353.2 L782.9 353.3 L784.9 353.5 L786.8 353.7 L788.8 353.9 L790.8 354.2 L792.8 354.4 L794.8 354.7 L796.7 355.0M872.8 453.6 L874.2 455.0 L875.6 456.4 L877.1 457.8 L878.4 459.3 L879.7 460.8 L881.0 462.4 L882.4 463.8M863.2 438.5 L864.7 439.8 L866.3 441.1 L867.8 442.3 L869.4 443.6 L870.9 444.9 L872.4 446.1M816.7 392.7 L818.7 393.1 L820.6 393.7 L822.5 394.2 L824.4 394.9 L826.3 395.4M842.3 392.7 L844.1 393.5 L846.0 394.2 L847.8 395.1 L849.6 396.0 L851.3 396.9M861.8 427.8 L863.4 428.9 L865.1 430.0 L866.6 431.3 L868.2 432.6 L869.8 433.8 L871.3 435.1 L872.8 436.4 L874.3 437.7 L875.8 439.0 L877.4 440.3M809.7 351.4 L811.6 351.9 L813.6 352.4 L815.5 352.9 L817.5 353.2 L819.4 353.6 L821.3 354.2 L823.3 354.5 L825.2 355.2 L827.1 355.8M771.4 414.1 L773.4 414.2 L775.4 414.3 L777.4 414.2 L779.4 414.5 L781.4 414.5 L783.4 414.7 L785.3 415.0 L787.3 415.2 L789.3 415.4 L791.3 415.5M867.9 416.3 L869.5 417.3 L871.1 418.6 L872.8 419.7 L874.3 421.0 L875.9 422.2 L877.5 423.4 L879.1 424.6 L880.6 425.9M872.9 460.8 L874.3 462.3 L875.7 463.7 L877.1 465.1 L878.5 466.5 L879.7 468.1 L881.0 469.7 L882.2 471.3 L883.4 472.9M800.6 411.8 L802.6 412.1 L804.6 412.4 L806.5 412.8M809.8 492.9 L811.6 493.8 L813.3 495.0 L814.9 496.0 L816.6 497.1 L818.2 498.3 L819.8 499.5 L821.5 500.7 L823.0 501.9 L824.5 503.3 L825.9 504.7M855.4 436.5 L857.0 437.7 L858.6 438.8 L860.1 440.1 L861.8 441.2 L863.3 442.6 L864.9 443.8 L866.4 445.2 L867.9 446.4M860.9 416.1 L862.6 417.2 L864.2 418.3 L865.9 419.4 L867.6 420.5 L869.2 421.6 L870.8 422.9 L872.5 424.0 L874.1 425.1M830.2 396.6 L832.0 397.4 L833.9 398.3 L835.7 399.1 L837.5 399.9 L839.3 400.7 L841.1 401.6M866.4 451.2 L867.9 452.5 L869.4 453.9 L870.9 455.3M831.0 360.0 L833.0 360.5 L834.9 361.0 L836.8 361.5 L838.7 362.3 L840.5 363.1 L842.4 363.7 L844.3 364.4 L846.2 365.0 L848.0 365.9M865.4 504.3 L866.5 505.9 L867.4 507.7 L868.4 509.5 L869.3 511.3 L870.2 513.0 L871.2 514.8 L871.9 516.6 L872.8 518.4M815.8 357.7 L817.8 358.2 L819.7 358.8 L821.6 359.4 L823.6 359.8 L825.5 360.2M809.2 401.9 L811.2 402.2 L813.1 402.7 L815.1 403.2 L817.0 403.6 L818.9 404.2 L820.9 404.7 L822.7 405.5 L824.6 406.2 L826.5 406.9M873.9 391.1 L875.6 392.2 L877.2 393.3 L878.9 394.4 L880.6 395.6 L882.2 396.6 L883.8 397.9 L885.4 399.1 L887.0 400.3M869.9 421.8 L871.5 423.0 L873.1 424.2 L874.7 425.4 L876.2 426.8 L877.7 428.1M873.8 467.3 L875.2 468.8 L876.6 470.3 L877.9 471.7M828.2 387.7 L830.1 388.4 L832.1 388.9 L833.9 389.7 L835.7 390.5 L837.6 391.3M870.8 482.0 L871.9 483.6 L873.2 485.2 L874.4 486.7 L875.6 488.4 L876.6 490.1 L877.7 491.8 L878.9 493.4M788.6 398.6 L790.6 398.9 L792.6 399.3 L794.5 399.6 L796.5 399.7 L798.5 399.9 L800.5 400.1 L802.5 400.4M788.5 398.0 L790.5 398.2 L792.4 398.4 L794.4 398.8 L796.4 399.0 L798.4 399.3 L800.4 399.5 L802.3 399.9 L804.3 400.4 L806.2 400.8M863.5 508.2 L864.4 510.0 L865.3 511.8 L866.3 513.6 L867.2 515.3 L867.9 517.2 L868.8 519.0 L869.7 520.8 L870.3 522.7 L871.1 524.5M856.8 393.2 L858.6 394.1 L860.3 395.1 L862.0 396.2 L863.8 397.1 L865.5 398.1 L867.3 399.0M813.5 368.5 L815.4 368.9 L817.3 369.5 L819.3 369.9 L821.2 370.4M773.4 392.6 L775.4 392.5 L777.4 392.4 L779.4 392.4 L781.4 392.6 L783.4 392.8 L785.4 392.9 L787.4 393.0M836.3 385.4 L838.2 386.2 L840.0 386.9 L841.9 387.6M873.6 438.5 L875.3 439.7 L876.7 441.0 L878.1 442.4 L879.6 443.8 L881.1 445.1 L882.7 446.4 L884.0 447.8 L885.3 449.3 L886.8 450.7M867.5 481.8 L868.8 483.2 L870.1 484.8 L871.4 486.3 L872.6 487.9 L873.8 489.5 L875.0 491.1 L876.0 492.8 L877.1 494.5 L878.1 496.2 L879.2 497.9M866.3 440.8 L867.9 442.1 L869.4 443.3 L871.0 444.6 L872.4 445.9 L873.9 447.3 L875.4 448.7 L876.7 450.1 L878.2 451.5 L879.5 453.0M837.7 466.5 L839.3 467.7 L840.9 468.9 L842.5 470.2 L844.0 471.5 L845.6 472.7 L847.2 473.9 L848.7 475.2 L850.2 476.5 L851.6 477.9M859.9 393.4 L861.7 394.2 L863.5 395.1 L865.2 396.1 L866.9 397.2 L868.7 398.1 L870.4 399.0M839.3 441.5 L841.0 442.5 L842.8 443.4 L844.5 444.5 L846.2 445.5 L847.9 446.6 L849.6 447.6 L851.2 448.8 L852.8 450.0 L854.5 451.2 L856.1 452.3M874.2 439.5 L875.6 441.0 L877.1 442.3 L878.5 443.7 L880.1 445.0M815.8 354.0 L817.8 354.3 L819.8 354.7 L821.7 355.1 L823.6 355.7 L825.6 356.2 L827.5 356.7 L829.4 357.2 L831.4 357.6 L833.3 358.2M874.7 421.0 L876.3 422.1 L878.0 423.2 L879.6 424.4 L881.1 425.7 L882.7 427.0M794.1 356.2 L796.1 356.4 L798.0 356.7 L800.0 357.2 L802.0 357.5 L804.0 357.6M857.8 473.6 L859.1 475.1 L860.5 476.5 L861.9 477.9 L863.1 479.5 L864.5 481.0M844.3 353.2 L846.1 353.9 L847.9 354.8 L849.8 355.4 L851.7 356.1M827.0 451.4 L828.9 452.3 L830.6 453.3 L832.3 454.4 L834.0 455.4 L835.6 456.5 L837.2 457.7 L838.9 458.9M845.2 408.3 L847.0 409.1 L848.9 409.9 L850.6 410.8 L852.3 411.9 L854.1 412.9 L855.8 413.8 L857.6 414.6 L859.4 415.6 L861.1 416.6 L862.9 417.6M854.3 474.1 L855.8 475.4 L857.1 476.9 L858.4 478.4M861.2 372.0 L863.0 373.0 L864.8 373.8 L866.6 374.8M790.1 476.8 L792.0 477.4 L794.0 477.8 L795.9 478.4 L797.7 479.1M872.7 430.3 L874.3 431.4 L875.7 432.8 L877.3 434.0 L878.8 435.3 L880.3 436.7 L881.7 438.1 L883.3 439.4 L884.7 440.8 L886.0 442.3 L887.5 443.7M828.6 456.3 L830.3 457.2 L832.1 458.1 L833.8 459.2 L835.5 460.2 L837.1 461.4 L838.9 462.4M856.4 407.7 L858.2 408.6 L859.8 409.7 L861.5 410.9 L863.3 411.8M828.0 486.3 L829.5 487.6 L831.0 488.9 L832.6 490.2 L834.1 491.4M795.1 380.2 L797.1 380.4 L799.1 380.6 L801.0 380.8 L803.0 381.0 L805.0 381.5 L806.9 381.9 L808.9 382.2M783.7 509.4 L785.7 509.8 L787.6 510.3 L789.5 511.0 L791.4 511.7 L793.2 512.5 L795.0 513.4 L796.7 514.4 L798.5 515.3 L800.2 516.4M781.3 370.8 L783.3 371.0 L785.3 371.3 L787.3 371.5M802.1 357.4 L804.1 357.7 L806.1 358.1 L808.0 358.4 L810.0 358.7 L812.0 359.1 L813.9 359.5 L815.9 359.8 L817.8 360.3 L819.8 360.6 L821.8 361.1M865.7 491.4 L866.9 492.9 L867.9 494.6 L869.1 496.2 L870.2 497.9 L871.4 499.5 L872.4 501.3M848.2 500.1 L849.4 501.7 L850.6 503.3 L851.7 504.9 L852.8 506.6 L853.9 508.3 L854.8 510.1 L855.7 511.9 L856.7 513.6 L857.6 515.4M839.8 457.8 L841.4 458.9 L843.1 460.0 L844.7 461.1 L846.3 462.4 L847.8 463.7 L849.3 465.0 L850.9 466.2M867.3 507.0 L868.3 508.7 L869.3 510.4 L870.3 512.2 L871.2 514.0 L871.9 515.8 L872.7 517.7 L873.3 519.6 L874.0 521.5 L874.8 523.3M851.8 489.6 L853.0 491.2 L854.2 492.8 L855.4 494.3M834.2 508.4 L835.5 509.9 L836.7 511.5 L837.8 513.2 L838.9 514.8 L840.0 516.5M793.1 373.8 L795.1 374.1 L797.0 374.5 L799.0 374.7 L801.0 374.9 L803.0 375.3M868.5 388.2 L870.3 389.1 L872.1 390.0 L873.8 391.0 L875.5 392.0 L877.3 393.0 L878.9 394.1M848.0 499.2 L849.1 500.8 L850.4 502.3 L851.7 503.9M796.9 371.0 L798.8 371.4 L800.8 371.7 L802.8 372.1 L804.7 372.4M848.5 445.7 L850.2 446.8 L851.9 447.9 L853.4 449.2 L855.0 450.3 L856.6 451.5 L858.2 452.8M839.2 399.5 L841.0 400.4 L842.9 401.1 L844.6 402.1 L846.4 402.9 L848.2 403.9 L850.0 404.8M838.3 353.8 L840.2 354.3 L842.1 355.0 L843.9 355.8 L845.8 356.5 L847.6 357.3 L849.5 358.0 L851.4 358.6 L853.2 359.5M809.9 353.9 L811.9 354.1 L813.9 354.5 L815.8 354.8 L817.8 355.4 L819.7 355.8 L821.7 356.2M827.5 445.8 L829.3 446.7 L831.0 447.7 L832.7 448.8 L834.5 449.8 L836.2 450.7 L837.9 451.8 L839.5 453.0 L841.1 454.2 L842.9 455.2M799.8 350.3 L801.7 350.7 L803.7 351.0 L805.7 351.3 L807.6 351.7 L809.6 352.1 L811.6 352.6 L813.5 352.9 L815.5 353.3 L817.4 353.7 L819.4 354.1M829.0 498.3 L830.4 499.7 L831.8 501.2 L833.0 502.8 L834.3 504.3 L835.6 505.8 L836.9 507.3 L838.2 508.9 L839.3 510.5M857.8 482.0 L859.2 483.4 L860.6 484.9 L862.0 486.3 L863.3 487.9M820.9 392.9 L822.8 393.4 L824.8 393.9 L826.7 394.4 L828.6 395.2 L830.4 396.0 L832.3 396.6 L834.2 397.2M871.8 444.1 L873.3 445.4 L874.8 446.7 L876.2 448.2 L877.5 449.6 L879.1 450.9 L880.4 452.4 L881.7 453.9 L883.2 455.3 L884.5 456.7 L885.9 458.2M851.4 414.8 L853.1 415.7 L854.9 416.6 L856.6 417.7 L858.4 418.6 L860.0 419.7 L861.7 420.8 L863.5 421.8 L865.0 423.0 L866.6 424.2 L868.4 425.2M864.5 454.5 L866.0 455.7 L867.5 457.0 L869.1 458.3 L870.4 459.8 L871.7 461.3 L873.1 462.8 L874.4 464.3 L875.7 465.8 L877.0 467.3M794.8 412.3 L796.8 412.5 L798.8 412.8 L800.8 413.1 L802.7 413.5 L804.7 413.9 L806.7 414.4 L808.6 414.7 L810.6 415.2M801.1 490.7 L802.9 491.5 L804.8 492.4 L806.6 493.2 L808.3 494.1 L810.1 495.0 L811.9 495.9M800.0 411.2 L802.0 411.6 L803.9 412.0 L805.9 412.5 L807.8 413.0 L809.7 413.7 L811.6 414.2 L813.5 414.8 L815.4 415.4M869.5 417.6 L871.0 418.8 L872.6 420.1 L874.2 421.2 L875.8 422.4 L877.4 423.7 L878.9 425.0 L880.4 426.3 L881.9 427.6 L883.4 428.9 L884.9 430.2M792.5 395.7 L794.4 395.8 L796.4 396.0 L798.4 396.2 L800.4 396.7 L802.3 397.1 L804.3 397.4 L806.3 397.7 L808.2 398.2 L810.2 398.7 L812.1 399.2M845.1 446.9 L846.6 448.1 L848.4 449.2 L850.0 450.3 L851.5 451.6 L853.0 452.9 L854.6 454.2 L856.0 455.5 L857.7 456.7 L859.1 458.1M855.4 498.4 L856.7 500.0 L857.7 501.7 L858.9 503.3M874.5 451.7 L876.1 453.1 L877.4 454.5 L878.8 456.0 L880.2 457.3M848.1 447.9 L849.8 449.0 L851.5 450.1 L853.1 451.3 L854.6 452.5 L856.1 453.9 L857.6 455.3 L859.1 456.6M871.2 503.0 L872.3 504.6 L873.2 506.4 L874.1 508.2M835.5 402.6 L837.4 403.3 L839.2 404.2 L841.0 404.9M868.2 492.8 L869.5 494.4 L870.5 496.1 L871.6 497.8M777.6 472.3 L779.5 472.6 L781.5 472.9 L783.5 473.3 L785.4 473.7 L787.4 474.0 L789.4 474.4M837.9 508.0 L839.2 509.5 L840.4 511.1 L841.5 512.7 L842.6 514.5 L843.5 516.2 L844.6 517.9 L845.7 519.5 L846.6 521.4 L847.3 523.2M864.6 409.1 L866.2 410.3 L867.9 411.4 L869.5 412.6 L871.1 413.8 L872.8 414.8 L874.4 416.1M836.9 437.6 L838.6 438.7 L840.3 439.6 L842.1 440.7 L843.8 441.6 L845.6 442.6 L847.2 443.8 L848.9 444.8 L850.6 445.9 L852.1 447.1M802.6 497.7 L804.4 498.6 L806.1 499.6 L807.7 500.7 L809.4 501.9M791.8 407.1 L793.8 407.3 L795.8 407.5 L797.7 407.7 L799.7 408.0 L801.7 408.2M866.4 425.6 L867.9 426.9 L869.5 428.1 L871.1 429.2M827.1 391.4 L828.9 392.1 L830.8 392.8 L832.7 393.5M839.3 391.4 L841.1 392.2 L842.9 393.0 L844.7 393.8 L846.6 394.7 L848.4 395.4 L850.1 396.4M837.2 480.2 L838.7 481.5 L840.2 482.9 L841.6 484.3 L843.1 485.6 L844.5 487.0 L845.9 488.4 L847.3 489.9M839.1 461.3 L840.7 462.5 L842.4 463.5 L844.0 464.8 L845.6 465.9 L847.2 467.1 L848.8 468.3 L850.2 469.7 L851.7 471.1M849.8 451.0 L851.3 452.3 L852.9 453.5 L854.5 454.7 L856.0 456.0 L857.5 457.4 L858.9 458.8 L860.4 460.2M831.3 425.8 L833.0 426.7 L834.9 427.5 L836.6 428.5 L838.4 429.3 L840.2 430.2M833.9 400.4 L835.7 401.2 L837.6 401.9 L839.4 402.8M860.1 477.5 L861.5 478.9 L862.9 480.3 L864.1 481.9 L865.3 483.5M792.1 421.7 L794.1 422.1 L796.1 422.3 L798.0 422.7 L800.0 423.2 L801.9 423.5 L803.8 424.1 L805.8 424.5 L807.8 424.9M860.3 420.6 L862.0 421.6 L863.7 422.6 L865.4 423.6 L867.1 424.7 L868.7 425.9 L870.4 427.0 L871.9 428.3 L873.6 429.4 L875.3 430.5M863.1 418.8 L864.8 420.0 L866.4 421.1 L868.1 422.2 L869.8 423.3 L871.4 424.5 L872.9 425.8 L874.4 427.1 L876.0 428.3 L877.5 429.6 L879.1 430.8M810.3 425.2 L812.2 425.6 L814.1 426.3 L816.0 426.9 L817.9 427.4 L819.9 428.0 L821.8 428.6 L823.6 429.5 L825.4 430.2 L827.3 431.0M848.1 387.3 L849.9 388.2 L851.7 388.9 L853.5 389.8 L855.2 390.8 L857.0 391.8 L858.8 392.7 L860.6 393.5 L862.3 394.6 L864.0 395.6 L865.8 396.5M850.6 379.6 L852.3 380.5 L854.1 381.5 L855.8 382.4 L857.7 383.2 L859.5 384.1 L861.2 385.0 L863.0 385.9 L864.8 386.8M862.3 494.4 L863.4 496.1 L864.6 497.7 L865.7 499.4 L866.6 501.1 L867.7 502.8 L868.8 504.5 L869.8 506.2 L870.7 508.0 L871.6 509.8 L872.4 511.6M832.7 495.4 L834.1 496.8 L835.6 498.1 L836.8 499.7 L838.1 501.2 L839.4 502.7 L840.8 504.2 L842.0 505.8M774.6 426.4 L776.6 426.4 L778.6 426.4 L780.6 426.5 L782.6 426.5 L784.6 426.6 L786.6 426.9M808.6 350.2 L810.5 350.5 L812.5 350.9 L814.5 351.3 L816.4 351.6 L818.4 351.9 L820.3 352.5 L822.3 353.0 L824.2 353.4 L826.1 354.1 L828.1 354.5M863.3 429.2 L865.0 430.4 L866.5 431.7 L868.1 432.8M829.2 474.2 L830.8 475.3 L832.4 476.4 L834.0 477.7 L835.5 479.0 L837.0 480.3M851.2 370.1 L853.1 370.9 L854.8 371.8 L856.7 372.6 L858.5 373.3 L860.4 374.1 L862.3 374.8 L864.0 375.7 L865.9 376.6M773.9 497.2 L775.9 497.4 L777.9 497.6 L779.9 497.8 L781.8 498.2 L783.8 498.6M856.4 418.4 L858.2 419.3 L859.9 420.4 L861.5 421.5 L863.1 422.7 L864.7 423.8 L866.4 424.9 L868.1 426.0 L869.7 427.2 L871.4 428.3 L873.0 429.5M870.7 379.6 L872.4 380.6 L874.1 381.7 L875.8 382.6 L877.5 383.7 L879.2 384.7 L880.8 385.9 L882.4 387.1 L884.2 388.1M832.1 461.9 L833.7 463.1 L835.4 464.1 L837.1 465.2 L838.8 466.3 L840.4 467.5 L842.0 468.6 L843.7 469.8 L845.3 471.0M842.3 470.3 L843.9 471.5 L845.5 472.7 L846.9 474.1 L848.4 475.4M858.0 389.9 L859.8 390.8 L861.5 391.8 L863.3 392.7 L865.0 393.6M787.8 350.5 L789.7 350.7 L791.7 350.9 L793.7 351.0M858.3 356.1 L860.2 356.8 L862.0 357.5 L863.8 358.4 L865.6 359.4 L867.3 360.4 L869.1 361.2 L871.0 362.0 L872.8 362.7 L874.6 363.6M786.6 359.3 L788.6 359.4 L790.5 359.7 L792.5 360.0 L794.5 360.3 L796.5 360.5M828.1 485.2 L829.6 486.5 L831.2 487.7 L832.7 489.0 L834.1 490.5 L835.6 491.8 L837.0 493.3 L838.4 494.7 L839.7 496.2 L841.2 497.5 L842.5 499.0M851.4 401.5 L853.2 402.4 L855.0 403.3 L856.8 404.3 L858.5 405.4 L860.2 406.2 L862.0 407.2 L863.8 408.1M799.7 362.9 L801.7 363.2 L803.6 363.6 L805.6 363.9 L807.6 364.2 L809.6 364.5 L811.5 364.9 L813.5 365.2 L815.5 365.5M823.1 471.3 L824.8 472.4 L826.5 473.4 L828.2 474.5 L829.9 475.5 L831.6 476.6 L833.2 477.7 L834.8 479.0 L836.3 480.3 L837.9 481.5 L839.5 482.7M865.3 408.4 L867.0 409.4 L868.8 410.4 L870.4 411.6 L872.1 412.6 L873.7 413.8 L875.4 414.8 L877.0 416.0 L878.7 417.2 L880.3 418.3 L881.9 419.5M867.3 495.6 L868.5 497.3 L869.6 498.9 L870.6 500.6 L871.5 502.4 L872.6 504.1M843.9 500.6 L845.1 502.2 L846.4 503.8 L847.5 505.4 L848.7 507.0 L849.8 508.7 L850.8 510.4 L851.8 512.1 L852.7 513.9 L853.7 515.7M838.0 428.7 L839.8 429.7 L841.5 430.7 L843.3 431.6 L845.0 432.6 L846.7 433.7 L848.4 434.8 L850.1 435.8 L851.8 436.9M828.5 477.4 L830.1 478.6 L831.7 479.8 L833.3 481.1 L834.9 482.2 L836.5 483.4 L838.0 484.8 L839.4 486.2 L840.7 487.7 L842.2 489.0 L843.6 490.5M844.6 463.1 L846.1 464.4 L847.8 465.5 L849.4 466.7 L850.9 468.0 L852.5 469.2M797.6 375.4 L799.6 375.7 L801.6 375.9 L803.6 376.1M788.7 415.3 L790.7 415.5 L792.7 415.8 L794.6 416.0 L796.6 416.3 L798.6 416.6M841.7 507.7 L842.9 509.3 L844.2 510.8 L845.2 512.6M857.6 419.0 L859.2 420.0 L860.9 421.1 L862.6 422.3 L864.2 423.4 L865.8 424.6M832.9 393.8 L834.7 394.6 L836.6 395.2 L838.5 395.9 L840.3 396.7M833.7 366.7 L835.6 367.3 L837.5 367.9 L839.4 368.4 L841.2 369.2M867.6 446.0 L869.1 447.3 L870.7 448.6 L872.2 449.9 L873.7 451.3 L875.0 452.7 L876.4 454.2M865.3 448.0 L866.9 449.2 L868.4 450.6 L869.8 452.0 L871.3 453.3 L872.8 454.7 L874.1 456.1 L875.5 457.5M867.3 498.5 L868.3 500.3 L869.3 502.0 L870.3 503.8 L871.2 505.5 L872.2 507.3 L873.0 509.1 L873.8 510.9 L874.7 512.7 L875.5 514.5M784.7 351.4 L786.7 351.6 L788.7 351.6 L790.7 351.8 L792.7 351.8 L794.7 352.2 L796.7 352.5 L798.6 352.7M848.1 422.2 L849.8 423.3 L851.5 424.4 L853.2 425.4 L854.9 426.4 L856.7 427.4 L858.3 428.6 L860.0 429.6 L861.6 430.8M808.5 378.6 L810.5 379.0 L812.5 379.3 L814.4 379.8 L816.3 380.3 L818.3 380.8 L820.2 381.4 L822.0 382.1 L823.9 382.7M832.9 502.1 L834.3 503.5 L835.7 505.0 L837.0 506.5 L838.3 508.0 L839.5 509.5 L840.8 511.1 L842.0 512.7M828.4 420.6 L830.2 421.5 L832.0 422.4 L833.8 423.2 L835.6 424.0 L837.4 425.0 L839.2 425.8 L841.0 426.6 L842.9 427.4M785.0 350.7 L787.0 350.8 L789.0 351.0 L791.0 351.1 L793.0 351.3 L794.9 351.6 L796.9 351.9 L798.9 352.1 L800.9 352.3 L802.9 352.7M852.6 451.6 L854.3 452.7 L855.8 454.0 L857.3 455.3M831.8 446.8 L833.5 447.8 L835.2 448.8 L836.9 449.9 L838.6 450.9 L840.3 451.9 L841.9 453.1 L843.7 454.1 L845.3 455.2 L846.9 456.5M830.1 413.2 L831.9 414.0 L833.7 414.8 L835.5 415.7 L837.3 416.6 L839.1 417.4M844.2 488.9 L845.5 490.4 L846.9 491.8 L848.2 493.3M852.7 480.4 L854.1 481.8 L855.4 483.3 L856.7 484.9 L858.0 486.4 L859.3 487.9M847.3 423.5 L849.0 424.6 L850.8 425.6 L852.5 426.7 L854.2 427.6 L856.0 428.6 L857.7 429.6 L859.3 430.8 L860.9 432.0 L862.6 433.1 L864.3 434.2M860.2 465.4 L861.8 466.7 L863.1 468.1 L864.5 469.6 L866.0 471.0M799.7 488.0 L801.5 488.8 L803.3 489.7 L805.1 490.5 L806.9 491.5 L808.5 492.5 L810.3 493.5 L812.0 494.6 L813.6 495.7M867.6 507.8 L868.6 509.5 L869.5 511.2 L870.4 513.0 L871.2 514.9 L872.1 516.7 L872.9 518.5M850.8 381.3 L852.7 382.0 L854.5 382.8 L856.4 383.6M779.7 493.5 L781.7 493.7 L783.7 494.0 L785.7 494.3 L787.6 494.8 L789.6 495.2 L791.5 495.8 L793.4 496.5 L795.3 497.1 L797.1 497.9M861.9 479.3 L863.3 480.8 L864.6 482.3 L865.8 483.9 L867.0 485.5 L868.3 487.0M848.8 480.9 L850.2 482.4 L851.6 483.8 L852.9 485.3 L854.2 486.8 L855.4 488.4 L856.6 490.0 L858.0 491.5 L859.3 493.0M831.6 406.3 L833.5 407.0 L835.2 407.9 L837.1 408.7M837.6 447.7 L839.3 448.7 L841.0 449.8 L842.7 450.9 L844.3 452.0M821.3 369.2 L823.2 369.6 L825.2 370.0 L827.1 370.7 L829.0 371.4 L830.8 372.1M848.1 461.0 L849.6 462.3 L851.1 463.6 L852.6 465.0 L854.2 466.2 L855.7 467.5 L857.2 468.8 L858.5 470.3 L859.9 471.8 L861.4 473.1 L862.7 474.6M837.6 474.9 L839.3 476.1 L840.8 477.3 L842.4 478.6 L843.9 479.9 L845.4 481.2 L846.8 482.6 L848.3 483.9M825.4 362.2 L827.3 362.7 L829.3 363.1 L831.2 363.8M869.0 470.7 L870.3 472.2 L871.7 473.7 L873.0 475.1 L874.3 476.7 L875.6 478.2 L876.8 479.8M806.8 372.5 L808.8 372.8 L810.8 373.2 L812.8 373.6 L814.7 374.0 L816.7 374.4 L818.6 375.0M849.7 404.6 L851.4 405.6 L853.1 406.6 L854.9 407.6 L856.6 408.5 L858.4 409.4 L860.2 410.4 L861.9 411.3 L863.6 412.5 L865.2 413.6M836.2 473.7 L837.8 474.9 L839.5 476.0 L841.0 477.3 L842.4 478.6 L843.9 480.0 L845.3 481.4 L846.8 482.8 L848.3 484.1M851.9 418.1 L853.7 419.1 L855.4 420.2 L857.1 421.1 L858.8 422.2 L860.4 423.4 L862.1 424.4M862.5 481.7 L863.8 483.2 L865.0 484.8 L866.3 486.3 L867.6 487.9 L868.9 489.4 L870.0 491.1M851.9 453.0 L853.6 454.1 L855.1 455.4 L856.6 456.7 L858.2 457.9 L859.7 459.3 L861.3 460.5M838.1 501.4 L839.4 502.9 L840.7 504.4 L842.1 505.9 L843.2 507.6 L844.3 509.2 L845.4 510.9M820.3 388.2 L822.2 388.9 L824.1 389.4 L826.1 390.0M793.4 395.0 L795.3 395.3 L797.3 395.6 L799.3 396.0 L801.3 396.3 L803.2 396.7 L805.2 397.1 L807.1 397.7M832.6 500.8 L834.0 502.2 L835.3 503.7 L836.7 505.2 L838.0 506.7M860.2 384.5 L862.1 385.3 L863.8 386.3 L865.6 387.2 L867.3 388.1 L869.2 389.0 L870.9 390.0 L872.6 391.0M856.2 499.0 L857.4 500.6 L858.5 502.3 L859.6 503.9 L860.7 505.6 L861.8 507.3 L862.8 509.0M873.1 393.2 L874.9 394.1 L876.5 395.2 L878.2 396.3M790.1 504.5 L792.0 505.1 L793.8 505.8 L795.7 506.6 L797.5 507.4 L799.2 508.5 L800.9 509.5 L802.6 510.5 L804.2 511.7 L805.8 512.9 L807.4 514.2M782.5 398.5 L784.5 398.6 L786.4 398.9 L788.4 399.0 L790.4 399.2 L792.4 399.4 L794.4 399.6 L796.4 400.0M857.8 485.1 L859.0 486.7 L860.3 488.2 L861.6 489.8 L862.7 491.5 L863.9 493.0 L865.0 494.7 L866.2 496.3 L867.2 498.1 L868.3 499.7 L869.2 501.5M862.1 411.5 L863.8 412.6 L865.5 413.6 L867.1 414.8 L868.8 415.9 L870.4 417.0 L872.1 418.1 L873.7 419.3M799.2 372.1 L801.1 372.5 L803.1 372.9 L805.1 373.2 L807.0 373.7 L808.9 374.2 L810.9 374.5M781.8 427.8 L783.8 427.9 L785.8 428.1 L787.8 428.2 L789.7 428.4 L791.7 428.7 L793.7 428.9 L795.7 429.2 L797.7 429.5 L799.6 430.0M795.7 359.5 L797.7 359.6 L799.7 359.9 L801.6 360.2 L803.6 360.6 L805.6 360.9 L807.6 361.2 L809.5 361.6 L811.5 362.1 L813.5 362.3M792.5 499.2 L794.4 499.8 L796.3 500.5 L798.1 501.3 L799.9 502.3 L801.7 503.1 L803.4 504.1 L805.1 505.2 L806.8 506.2 L808.4 507.4M874.9 480.0 L876.1 481.6 L877.2 483.3 L878.3 485.0 L879.3 486.7 L880.4 488.4M834.0 465.3 L835.7 466.3 L837.4 467.4 L839.0 468.5 L840.5 469.9 L842.2 471.0 L843.6 472.4 L845.2 473.6 L846.7 475.0 L848.1 476.4M873.9 442.6 L875.3 444.0 L876.8 445.3 L878.4 446.5 L879.7 448.0M824.9 424.8 L826.7 425.6 L828.5 426.5 L830.3 427.2 L832.2 428.1 L834.0 428.9 L835.8 429.7 L837.7 430.4 L839.4 431.4 L841.2 432.3 L842.9 433.4M850.1 458.3 L851.7 459.6 L853.2 460.9 L854.8 462.1 L856.3 463.4M792.9 351.2 L794.9 351.3 L796.8 351.6 L798.8 351.9 L800.8 352.2 L802.8 352.4 L804.8 352.6 L806.8 352.8 L808.7 353.3 L810.6 353.8 L812.6 354.3M832.4 475.5 L834.0 476.6 L835.6 477.8 L837.3 478.9 L838.9 480.1 L840.3 481.5 L841.9 482.8 L843.3 484.1 L844.7 485.6 L846.1 487.1 L847.5 488.5M842.6 485.2 L844.0 486.6 L845.4 488.1 L846.7 489.5 L848.2 490.9 L849.6 492.3 L850.9 493.8M860.9 449.9 L862.5 451.1 L863.9 452.5 L865.4 453.9 L866.8 455.3 L868.3 456.6 L869.8 457.9 L871.2 459.4M860.7 442.7 L862.3 443.9 L864.0 445.0 L865.6 446.2M825.9 360.1 L827.9 360.5 L829.8 361.2 L831.6 361.9 L833.5 362.5M834.5 379.0 L836.5 379.6 L838.3 380.2 L840.2 380.8 L842.1 381.5 L844.0 382.1 L845.8 383.0 L847.7 383.7 L849.5 384.7 L851.3 385.4 L853.1 386.3M808.3 474.8 L810.1 475.6 L811.9 476.5 L813.7 477.3 L815.5 478.1 L817.3 479.1 L819.1 480.0 L820.7 481.1 L822.4 482.1 L824.2 483.1 L825.8 484.3M831.5 453.9 L833.1 455.1 L834.8 456.2 L836.4 457.3M770.6 397.1 L772.6 397.0 L774.6 397.0 L776.6 397.0 L778.6 397.1 L780.6 397.1 L782.6 397.2 L784.6 397.5 L786.6 397.6 L788.6 397.7 L790.6 398.0M794.7 358.2 L796.7 358.5 L798.6 358.9 L800.6 359.2M824.9 445.3 L826.7 446.2 L828.5 447.2 L830.3 448.1 L832.1 448.9 L833.8 449.9 L835.6 450.8 L837.4 451.7M873.6 477.2 L874.9 478.7 L876.2 480.2 L877.4 481.9 L878.5 483.5 L879.7 485.1 L880.7 486.8 L881.8 488.5 L882.8 490.3 L884.0 491.9 L884.9 493.7M857.2 365.4 L859.0 366.1 L860.9 366.9 L862.6 367.9 L864.3 368.9 L866.2 369.7 L868.0 370.5 L869.7 371.5M869.0 511.3 L869.8 513.2 L870.6 515.0 L871.4 516.8 L872.1 518.7 L872.7 520.6 L873.4 522.5 L874.0 524.4 L874.6 526.3 L875.0 528.3M865.2 491.5 L866.4 493.1 L867.6 494.7 L868.8 496.3 L869.8 498.0 L870.7 499.8M821.5 433.7 L823.3 434.6 L825.2 435.3 L827.0 436.2 L828.8 437.1 L830.6 438.0 L832.4 438.8 L834.1 439.8M788.6 404.8 L790.6 405.0 L792.6 405.4 L794.6 405.7M812.3 368.5 L814.3 369.0 L816.2 369.5 L818.1 370.0 L820.1 370.4 L822.0 371.0M860.0 462.3 L861.5 463.6 L862.9 465.1 L864.2 466.5 L865.8 467.8 L867.2 469.2 L868.5 470.7 L869.7 472.3 L871.2 473.7 L872.4 475.2 L873.6 476.9M840.0 500.3 L841.4 501.8 L842.6 503.4 L843.9 504.9 L845.0 506.6M835.8 373.0 L837.7 373.9 L839.5 374.6 L841.4 375.2M774.0 367.5 L776.0 367.5 L778.0 367.6 L780.0 367.6 L782.0 367.6 L784.0 367.7 L786.0 367.8M869.8 434.2 L871.3 435.6 L872.7 436.9 L874.3 438.1 L875.9 439.3 L877.3 440.8 L878.9 442.0M840.6 492.9 L841.9 494.4 L843.3 495.8 L844.6 497.3M864.2 425.5 L865.8 426.7 L867.4 427.9 L869.0 429.2M834.3 422.9 L836.1 423.8 L837.9 424.6 L839.8 425.4M777.1 422.7 L779.1 422.9 L781.0 423.1 L783.0 423.4 L785.0 423.4 L787.0 423.7 L789.0 423.9 L791.0 424.2M804.7 355.3 L806.7 355.8 L808.6 356.2 L810.6 356.6 L812.5 357.1 L814.5 357.6 L816.4 358.1 L818.4 358.4M838.6 487.8 L840.1 489.1 L841.5 490.6 L842.8 492.0 L844.1 493.6 L845.5 495.0 L846.9 496.4 L848.2 497.9M832.2 375.2 L834.1 375.8 L836.0 376.3 L837.9 377.0 L839.7 377.8 L841.6 378.6 L843.5 379.2M811.1 481.1 L812.8 482.1 L814.6 483.0 L816.4 483.8 L818.2 484.8 L819.9 485.9 L821.5 487.0 L823.2 488.1 L824.9 489.2M829.8 460.9 L831.5 461.9 L833.3 462.8 L834.9 464.0M835.3 436.2 L837.0 437.1 L838.8 438.1 L840.5 439.2 L842.3 440.1 L844.0 441.1 L845.7 442.2M861.6 389.4 L863.3 390.4 L865.0 391.5 L866.7 392.6 L868.4 393.6M820.5 366.7 L822.4 367.3 L824.3 367.7 L826.3 368.2 L828.2 368.6M791.2 431.3 L793.1 431.7 L795.1 432.1 L797.1 432.4 L799.0 432.9 L801.0 433.3 L802.9 433.8 L804.8 434.5 L806.7 434.9M841.5 479.2 L843.0 480.5 L844.5 481.8 L845.9 483.2M849.9 404.0 L851.7 404.9 L853.5 405.7 L855.3 406.7 L857.0 407.7 L858.7 408.8 L860.4 409.9 L862.1 410.9 L863.8 411.9M850.6 453.5 L852.3 454.7 L853.9 455.9 L855.4 457.2 L856.8 458.6M828.0 364.6 L830.0 365.0 L831.9 365.6 L833.8 366.1 L835.7 366.8 L837.6 367.4 L839.6 367.9 L841.5 368.5 L843.3 369.2 L845.2 369.9 L847.0 370.7M772.7 429.6 L774.7 429.5 L776.7 429.7 L778.7 429.7 L780.7 430.0 L782.7 430.1 L784.7 430.2M837.1 370.1 L839.0 370.8 L840.8 371.6 L842.7 372.3 L844.5 373.0 L846.4 373.7M873.1 409.8 L874.8 410.9 L876.3 412.1 L877.9 413.4M843.0 387.6 L844.8 388.4 L846.6 389.3 L848.5 389.9 L850.3 390.8M771.5 397.8 L773.5 397.9 L775.5 397.9 L777.5 397.9 L779.5 397.8 L781.5 398.0 L783.5 398.2 L785.4 398.5 L787.4 398.7M809.1 420.3 L811.1 420.8 L813.0 421.4 L814.9 421.9 L816.8 422.5 L818.8 423.1 L820.7 423.6 L822.6 424.3 L824.4 425.0 L826.3 425.8 L828.2 426.4M874.3 486.6 L875.3 488.3 L876.6 489.9 L877.6 491.6 L878.5 493.4 L879.7 495.0 L880.8 496.7M804.6 483.5 L806.5 484.2 L808.3 485.1 L810.1 486.0 L811.8 487.1 L813.4 488.2 L815.1 489.3 L816.7 490.5 L818.4 491.5M872.5 456.7 L873.9 458.2 L875.2 459.7 L876.6 461.1 L878.0 462.5 L879.3 464.1 L880.6 465.6 L881.9 467.1M833.2 387.1 L835.0 387.8 L836.9 388.6 L838.8 389.3 L840.6 390.0 L842.4 390.9 L844.2 391.8M867.8 420.4 L869.4 421.6 L871.1 422.7 L872.7 423.9 L874.3 425.1 L875.9 426.3 L877.5 427.4M844.3 383.1 L846.2 383.8 L848.1 384.4 L849.9 385.4 L851.6 386.3 L853.4 387.2 L855.2 388.1 L857.0 388.9 L858.8 389.9 L860.5 390.9 L862.3 391.7M807.5 431.5 L809.4 432.1 L811.3 432.8 L813.2 433.6M856.3 446.6 L857.8 447.8 L859.4 449.0 L860.9 450.3 L862.5 451.5M841.9 433.2 L843.7 434.1 L845.4 435.1 L847.1 436.1 L848.7 437.3M793.4 350.8 L795.4 351.1 L797.4 351.4 L799.4 351.5 L801.3 351.7 L803.3 351.9 L805.3 352.1M860.1 496.9 L861.3 498.6 L862.4 500.2 L863.5 501.9 L864.6 503.6 L865.5 505.3 L866.5 507.1 L867.3 508.9 L868.3 510.6M821.1 385.6 L823.0 386.1 L824.9 386.8 L826.8 387.3 L828.7 388.0 L830.6 388.6 L832.4 389.4 L834.3 390.0 L836.1 390.9M868.6 447.8 L870.0 449.2 L871.6 450.5 L873.0 451.8 L874.5 453.3 L876.0 454.6 L877.4 455.9 L878.9 457.3M788.5 391.1 L790.5 391.2 L792.4 391.6 L794.4 392.0 L796.4 392.3 L798.3 392.7 L800.3 393.1 L802.2 393.6M771.7 482.7 L773.7 482.9 L775.7 483.1 L777.7 483.1 L779.7 483.2M813.3 353.1 L815.2 353.6 L817.2 353.9 L819.2 354.4 L821.1 354.8 L823.1 355.3M802.4 428.3 L804.4 428.7 L806.3 429.1 L808.3 429.6 L810.2 430.0M776.6 379.9 L778.6 380.1 L780.6 380.2 L782.6 380.2 L784.6 380.4M788.1 386.3 L790.0 386.5 L792.0 386.7 L794.0 387.0 L796.0 387.3 L797.9 387.8 L799.9 388.2 L801.9 388.5 L803.8 389.0 L805.8 389.3M860.6 433.8 L862.2 435.0 L863.8 436.2 L865.5 437.3 L866.9 438.6 L868.5 439.9M830.3 408.6 L832.1 409.5 L833.9 410.3 L835.7 411.1 L837.6 412.0 L839.4 412.7M865.2 498.6 L866.2 500.3 L867.3 502.0 L868.2 503.8M828.3 400.6 L830.1 401.4 L832.0 402.2 L833.8 402.9 L835.7 403.7 L837.6 404.4 L839.4 405.1 L841.3 405.9M772.4 364.6 L774.4 364.7 L776.4 364.6 L778.3 364.8 L780.3 365.0 L782.3 365.1 L784.3 365.1M841.9 474.2 L843.3 475.5 L844.8 476.9 L846.4 478.1 L847.9 479.4 L849.4 480.7 L850.9 482.0 L852.4 483.4M840.3 470.4 L841.8 471.7 L843.3 473.0 L844.9 474.3 L846.4 475.5 L847.9 476.9 L849.3 478.3 L850.9 479.6M835.3 431.2 L837.1 432.1 L838.9 433.0 L840.7 433.8 L842.5 434.7 L844.2 435.8M873.7 405.3 L875.3 406.4 L876.9 407.7 L878.5 408.9 L880.2 409.9 L881.7 411.2 L883.2 412.5M858.3 500.9 L859.3 502.6 L860.3 504.3 L861.4 506.1 L862.3 507.8 L863.2 509.6 L864.2 511.3 L865.0 513.2 L865.9 515.0M853.4 493.6 L854.7 495.1 L855.9 496.7 L857.1 498.3 L858.2 500.0 L859.4 501.6 L860.5 503.3 L861.5 505.0 L862.6 506.7M852.7 439.7 L854.4 440.8 L855.9 442.1 L857.5 443.3 L859.2 444.4 L860.8 445.5 L862.4 446.7 L864.1 447.9 L865.6 449.1M784.4 354.9 L786.4 354.9 L788.4 355.0 L790.4 355.1M838.4 395.6 L840.3 396.2 L842.1 397.1 L843.9 397.9 L845.8 398.6 L847.6 399.5M775.9 366.6 L777.9 366.6 L779.9 366.6 L781.9 366.7 L783.9 366.9M862.9 420.0 L864.4 421.2 L866.2 422.2 L867.8 423.4 L869.3 424.7 L870.9 425.9 L872.6 427.0 L874.1 428.3M830.4 456.3 L832.1 457.4 L833.8 458.5 L835.4 459.6 L837.0 460.8 L838.6 462.0 L840.3 463.1M819.0 374.6 L820.9 375.2 L822.9 375.7 L824.8 376.3M856.8 474.6 L858.3 476.0 L859.7 477.4 L861.0 478.9M873.4 406.9 L875.1 407.9 L876.7 409.1 L878.4 410.3 L880.0 411.4M849.4 412.0 L851.2 413.0 L852.8 414.1 L854.6 415.1M870.7 506.1 L871.7 507.9 L872.6 509.7 L873.5 511.5 L874.4 513.2M854.0 477.0 L855.4 478.4 L856.7 479.9 L858.1 481.3 L859.4 482.9M788.6 371.3 L790.6 371.6 L792.6 371.8 L794.6 371.9M847.8 416.7 L849.5 417.7 L851.3 418.6 L853.1 419.5 L854.9 420.4 L856.5 421.6 L858.3 422.6 L860.0 423.5 L861.7 424.6 L863.4 425.7 L865.0 426.9M866.9 445.0 L868.5 446.2 L870.0 447.5 L871.5 448.8 L872.8 450.3 L874.3 451.7 L875.8 453.0 L877.3 454.3 L878.6 455.8M840.5 448.0 L842.2 449.1 L843.8 450.3 L845.4 451.5 L847.0 452.7 L848.7 453.8 L850.3 454.9 L851.8 456.2 L853.4 457.4 L854.9 458.8M837.2 434.3 L839.0 435.1 L840.8 436.1 L842.4 437.3 L844.2 438.2 L845.8 439.4 L847.4 440.5M861.4 398.9 L863.2 399.8 L864.9 400.8 L866.7 401.8 L868.4 402.8 L870.1 403.8 L871.9 404.8 L873.5 406.0 L875.2 406.9M873.4 509.8 L874.1 511.7 L875.1 513.4 L875.9 515.2 L876.7 517.1 L877.5 518.9 L878.2 520.8 L878.8 522.7M816.9 359.0 L818.8 359.6 L820.7 360.0 L822.7 360.3 L824.6 361.0 L826.5 361.6 L828.5 362.0 L830.4 362.5 L832.3 363.1 L834.2 363.8M830.0 500.6 L831.4 502.0 L832.8 503.4 L834.2 504.8 L835.6 506.3 L836.9 507.8M857.9 442.9 L859.5 444.1 L861.2 445.2 L862.8 446.4 L864.3 447.7 L865.9 448.9 L867.5 450.1 L868.9 451.5M840.7 509.5 L841.9 511.1 L843.1 512.8 L844.2 514.5 L845.2 516.2 L846.2 517.9 L847.0 519.7 L848.0 521.5 L848.8 523.3 L849.6 525.2 L850.4 527.0M819.4 425.1 L821.3 425.7 L823.2 426.4 L825.0 427.3 L826.8 428.0 L828.7 428.7 L830.5 429.6 L832.3 430.4M859.2 370.4 L861.0 371.2 L862.9 372.0 L864.6 373.0 L866.3 374.0M817.6 370.6 L819.5 371.1 L821.4 371.6 L823.3 372.3 L825.3 372.7 L827.2 373.2 L829.1 373.8 L831.1 374.3 L833.0 374.9 L834.9 375.6M788.5 394.7 L790.5 394.9 L792.5 395.2 L794.4 395.4 L796.4 395.8 L798.4 396.2 L800.3 396.6 L802.3 397.0M790.8 362.1 L792.8 362.3 L794.8 362.5 L796.8 362.6M817.6 368.5 L819.6 368.9 L821.5 369.4 L823.4 369.9 L825.3 370.5 L827.2 371.2 L829.2 371.7 L831.1 372.3 L833.0 372.8 L834.8 373.6M827.4 390.6 L829.2 391.3 L831.0 392.1 L832.9 392.8 L834.8 393.4 L836.7 394.1 L838.6 394.7 L840.4 395.6M848.6 384.4 L850.4 385.3 L852.2 386.2 L854.1 387.0 L855.9 387.8 L857.7 388.7 L859.5 389.6 L861.2 390.6M870.4 505.5 L871.3 507.3 L872.4 509.0 L873.2 510.9 L873.9 512.7 L874.8 514.5 L875.8 516.3 L876.4 518.2 L877.2 520.0 L878.1 521.8 L878.8 523.7M806.7 399.0 L808.6 399.6 L810.6 399.9 L812.5 400.4 L814.4 401.0 L816.3 401.7 L818.3 402.1M829.8 381.5 L831.6 382.2 L833.4 383.0 L835.4 383.5 L837.3 384.1 L839.2 384.8 L841.0 385.5 L842.9 386.1 L844.7 387.0 L846.6 387.8M819.4 486.8 L821.0 488.0 L822.7 489.1 L824.4 490.2 L826.0 491.4 L827.5 492.7 L828.9 494.1 L830.4 495.4M854.7 368.1 L856.6 368.8 L858.3 369.8 L860.2 370.5 L862.1 371.2 L863.9 372.0 L865.7 372.8 L867.5 373.7 L869.4 374.5M812.0 406.3 L814.0 406.8 L815.9 407.4 L817.8 407.8 L819.7 408.4 L821.6 409.0 L823.6 409.5 L825.4 410.3 L827.2 411.1M815.7 366.2 L817.7 366.6 L819.6 367.0 L821.6 367.4 L823.6 367.8 L825.5 368.2M829.4 395.1 L831.3 395.7 L833.2 396.5 L835.0 397.2 L836.9 397.9 L838.8 398.6 L840.7 399.3 L842.5 400.0M863.1 413.5 L864.8 414.6 L866.4 415.8 L868.0 417.0M833.4 427.3 L835.2 428.3 L836.9 429.3 L838.7 430.1 L840.4 431.2M843.3 410.8 L845.1 411.7 L846.9 412.7 L848.7 413.6 L850.5 414.4 L852.2 415.5 L853.8 416.6 L855.6 417.5 L857.3 418.6 L859.1 419.5M772.3 351.1 L774.3 351.2 L776.3 351.2 L778.3 351.1 L780.3 351.0 L782.3 351.0 L784.3 351.0 L786.3 351.3M814.1 393.0 L816.0 393.4 L818.0 393.8 L819.9 394.4 L821.8 394.9 L823.7 395.7 L825.6 396.3M774.5 359.6 L776.5 359.7 L778.5 359.9 L780.5 359.9 L782.5 359.9 L784.5 360.0 L786.5 360.3 L788.5 360.6M829.4 470.5 L831.1 471.5 L832.7 472.7 L834.3 473.9 L835.9 475.1 L837.4 476.4 L839.0 477.6M852.9 464.7 L854.5 465.9 L856.0 467.2 L857.4 468.7 L858.9 470.0 L860.2 471.5 L861.5 473.0 L862.8 474.5M816.1 393.0 L818.1 393.4 L820.0 393.8 L822.0 394.3M823.6 489.7 L825.3 490.9 L826.9 492.1 L828.4 493.3 L830.0 494.6 L831.5 496.0 L832.8 497.5 L834.1 498.9 L835.5 500.4 L836.9 501.8M846.9 452.9 L848.6 453.9 L850.1 455.2 L851.8 456.3 L853.4 457.5 L855.0 458.7 L856.5 460.0 L858.1 461.2 L859.6 462.5 L861.1 463.9 L862.6 465.2M825.3 509.0 L826.7 510.3 L828.1 511.8 L829.3 513.4M855.6 426.8 L857.4 427.8 L859.1 428.8 L860.7 430.0M849.7 441.2 L851.4 442.3 L852.9 443.6 L854.4 444.9 L856.0 446.1M873.4 432.6 L874.9 433.9 L876.4 435.2 L878.0 436.5 L879.5 437.8 L880.9 439.2 L882.4 440.6 L883.8 442.0M870.1 397.5 L871.8 398.4 L873.6 399.4 L875.3 400.5" fill="none" stroke="#0a0a0a" stroke-width="0.7"/></g><path d="M844.5 477.1l-2.7 5.1M855.1 451.2l-1.9 8.5M841.2 451.7l-1.8 7.0M814.2 494.0l-7.4 10.0M848.6 433.3l-0.2 5.3M852.3 414.9l2.1 8.8M856.4 428.1l0.5 11.9M854.1 422.5l1.3 7.8M854.0 431.8l-0.2 11.6M858.1 428.0l0.5 10.9M853.3 406.3l1.6 5.9M853.3 441.0l-0.9 6.9M840.3 442.7l-1.5 8.9M847.0 409.4l3.0 11.3M818.4 490.4l-7.6 10.2M838.0 452.5l-2.1 7.6M848.0 442.1l-0.8 5.5M856.0 422.2l1.6 10.0M834.8 497.3l-3.6 5.0M823.8 481.7l-3.4 4.9M849.8 417.4l2.2 9.5M846.8 470.1l-4.2 9.3M837.7 454.1l-3.4 11.7M856.2 435.5l-0.7 9.6M852.8 428.3l0.4 8.5M830.9 499.6l-6.7 9.1M841.6 450.0l-2.1 8.7M838.1 450.9l-2.8 10.9M828.4 487.4l-3.1 4.4M849.8 453.8l-2.6 10.1M836.6 460.2l-2.3 6.0M846.6 405.8l2.3 10.5M829.9 473.3l-6.2 11.3M825.8 502.5l-6.1 8.2M848.2 444.0l-1.9 11.6M853.1 407.8l1.6 5.8M851.5 406.8l2.4 9.1M845.8 418.3l1.9 8.4M841.5 410.8l3.0 11.3M844.7 414.9l1.8 7.1M845.7 463.8l-4.6 11.9M841.5 469.6l-2.9 6.1M831.3 489.5l-4.8 6.8M840.2 421.4l1.2 5.5M852.4 442.8l-1.0 6.8M846.3 478.0l-3.6 7.0M831.8 482.4l-5.5 8.5M837.0 460.4l-2.4 6.1M850.7 408.4l2.6 9.7M855.6 453.3l-2.0 8.4M842.0 443.0l-1.4 8.3M834.5 486.5l-3.5 5.2M845.0 439.9l-1.5 11.7M840.9 437.7l-1.3 11.8M840.7 421.3l1.1 5.0M835.7 461.5l-4.0 9.6M834.5 481.9l-6.2 10.1M823.1 488.8l-3.3 4.5M846.9 472.1l-2.5 5.3M836.7 479.1l-6.0 10.8M840.6 442.8l-1.9 11.4M839.3 454.5l-3.2 10.8M844.2 483.3l-4.4 7.9M836.5 493.1l-3.9 5.6M828.6 506.4l-7.5 10.3M853.4 437.2l-0.7 7.3M846.3 411.1l2.3 8.5M820.1 501.9l-6.3 8.8M846.2 436.6l-0.5 5.7M839.6 465.0l-3.7 8.5M844.0 420.6l2.1 10.0M832.3 498.1l-5.6 7.7M846.8 476.2l-3.8 7.4M835.7 484.8l-5.8 9.0M840.1 428.9l0.4 7.9M837.9 466.0l-2.7 6.0M853.5 431.8l-0.3 12.4M851.0 452.2l-2.1 8.9M842.5 482.3l-4.7 8.5M850.5 423.1l2.0 12.3M837.5 471.5l-3.9 7.8M822.6 495.8l-5.5 7.3M841.0 411.0l2.7 10.1M845.6 411.3l2.1 7.8M855.3 420.2l1.6 8.7M848.6 446.0l-1.9 10.1M854.3 416.4l1.3 5.7M844.1 411.7l2.2 8.1M840.9 442.8l-1.6 9.9M855.3 428.2l0.6 12.3M843.3 427.4l0.6 6.4M851.4 408.2l2.0 7.4M839.5 470.6l-4.0 8.2M823.4 496.4l-3.5 4.7M853.6 404.2l2.6 11.9M840.6 453.2l-1.5 5.6M815.6 495.0l-3.3 4.4M832.7 474.8l-3.1 5.6M847.3 466.3l-2.3 5.5M841.5 455.2l-1.9 6.4M845.2 439.9l-1.5 11.6M838.5 408.8l1.5 6.0M821.5 499.4l-4.7 6.4M833.9 479.4l-5.9 10.2M832.2 487.5l-5.7 8.3M836.1 467.0l-3.4 7.2M852.3 418.8l1.7 7.9M850.4 467.6l-2.2 5.3M833.3 471.3l-4.5 8.6M850.0 453.9l-2.8 10.8M846.5 467.9l-2.8 6.5M829.1 482.9l-3.6 5.4M849.3 455.6l-1.4 5.3M855.8 414.0l2.3 9.4M830.0 493.8l-5.7 7.9M849.8 459.5l-2.4 7.3M852.9 452.7l-1.4 5.9M848.4 428.5l0.5 10.0M839.8 482.9l-3.3 5.7M845.3 471.4l-4.1 8.7M847.9 468.5l-3.1 7.1M840.1 426.3l1.6 12.5M845.8 467.6l-2.4 5.5M838.3 464.4l-2.3 5.2M838.7 478.1l-4.7 8.6M851.2 463.9l-3.0 8.2M842.4 426.0l0.8 6.4M843.9 464.9l-4.2 10.1M851.4 448.4l-1.6 8.1M845.4 420.3l2.1 10.0M837.4 479.4l-3.2 5.7M835.3 480.2l-6.3 10.8M844.7 408.6l2.5 9.5M816.5 495.7l-5.6 7.5M848.7 406.3l2.0 8.1M824.0 499.2l-5.5 7.4M844.0 445.1l-1.8 9.5M851.0 405.7l2.4 9.5M837.1 479.3l-3.7 6.7M855.5 430.0l0.0 8.2M840.6 456.6l-2.2 6.9M852.1 458.3l-3.1 10.5M841.8 415.7l1.6 6.2M852.0 416.9l2.6 11.3M845.3 469.4l-3.4 7.5M843.6 445.0l-1.8 9.5M845.8 405.9l2.4 10.7M829.2 490.6l-7.3 10.2M849.0 436.8l-0.5 5.4M827.5 477.5l-4.4 7.1M837.5 407.8l1.5 6.7M856.1 414.0l2.0 8.2M813.7 497.4l-5.6 7.8M842.6 410.6l2.3 8.8M851.5 442.6l-1.8 12.1M844.8 413.2l2.9 11.1M844.9 406.1l2.1 9.4M850.3 407.1l2.8 10.8M841.3 421.1l1.2 5.8M852.9 418.7l2.3 10.7M842.5 484.5l-6.3 10.8M825.2 500.1l-5.5 7.4M843.3 410.4l2.5 9.3M847.4 423.6l1.5 9.4M825.6 478.3l-3.6 5.6M821.8 492.9l-4.1 5.5M824.7 499.7l-7.1 9.6M850.4 452.1l-2.4 10.0M830.3 501.5l-4.5 6.0M842.0 431.5l-0.1 6.1M843.7 443.3l-0.8 5.1M853.4 439.1l-0.6 5.7M833.6 464.1l-3.4 7.4M829.2 500.7l-7.2 9.7M844.6 407.3l2.1 8.3M823.2 502.5l-7.0 9.5M839.6 446.0l-1.5 7.2M854.9 441.2l-1.0 7.8M820.0 486.5l-3.3 4.5M845.7 434.8l-0.7 10.9M838.7 491.9l-3.7 5.4M852.2 405.4l2.0 8.1M854.5 430.0l0.0 5.9M837.2 477.3l-3.0 5.6M840.9 419.4l2.7 11.8M817.7 498.5l-5.4 7.4M844.1 472.8l-2.2 4.6M838.7 414.8l2.9 11.0M844.2 465.0l-4.1 9.9M843.4 446.8l-2.1 10.5" fill="none" stroke="#000" stroke-width="0.7" opacity="0.85"/><path d="M845.0 398.0C846.2 402.5 851.5 416.3 852.0 425.0C852.5 433.7 850.3 441.7 848.0 450.0C845.7 458.3 841.7 467.2 838.0 475.0C834.3 482.8 828.0 493.3 826.0 497.0" fill="none" stroke="#000" stroke-width="1.6"/><path d="M857.0 421.0C857.5 424.2 860.7 433.2 860.0 440.0C859.3 446.8 856.0 454.7 853.0 462.0C850.0 469.3 845.7 476.8 842.0 484.0C838.3 491.2 832.8 501.5 831.0 505.0" fill="none" stroke="#000" stroke-width="1.4"/><path d="M835.0 410.0C835.8 415.0 840.5 430.8 840.0 440.0C839.5 449.2 835.7 457.0 832.0 465.0C828.3 473.0 820.3 484.2 818.0 488.0" fill="none" stroke="#000" stroke-width="1.0"/><path d="M862.0 440.0C863.8 442.0 870.0 447.7 873.0 452.0C876.0 456.3 878.2 461.3 880.0 466.0C881.8 470.7 883.3 477.7 884.0 480.0" fill="none" stroke="#000" stroke-width="1.2"/><path d="M776.0 448.0C780.0 448.3 792.7 448.3 800.0 450.0C807.3 451.7 813.7 454.7 820.0 458.0C826.3 461.3 835.0 468.0 838.0 470.0" fill="none" stroke="#000" stroke-width="0.9"/><path d="M776.0 458.0C780.0 458.7 792.3 459.7 800.0 462.0C807.7 464.3 816.2 468.5 822.0 472.0C827.8 475.5 832.8 481.2 835.0 483.0" fill="none" stroke="#000" stroke-width="0.9"/><path d="M777.0 470.0C780.5 470.7 791.7 471.5 798.0 474.0C804.3 476.5 810.0 481.5 815.0 485.0C820.0 488.5 825.8 493.3 828.0 495.0" fill="none" stroke="#000" stroke-width="0.9"/><path d="M779.0 428.0C780.8 430.0 786.5 434.7 790.0 440.0C793.5 445.3 797.3 453.3 800.0 460.0C802.7 466.7 804.3 473.3 806.0 480.0C807.7 486.7 809.3 496.7 810.0 500.0" fill="none" stroke="#000" stroke-width="0.9"/><path d="M712.7 394.0C712.8 392.0 712.3 385.7 713.0 382.0C713.7 378.3 714.7 374.5 717.0 372.0C719.3 369.5 722.0 368.1 727.0 367.0C732.0 365.9 740.5 365.1 746.7 365.5C752.9 365.9 759.2 366.6 764.0 369.5C768.8 372.4 773.2 378.0 775.6 382.6C778.0 387.2 778.8 391.8 778.5 397.0C778.2 402.2 775.7 409.2 774.0 414.0C772.3 418.8 769.3 424.0 768.4 426.0" fill="none" stroke="#000" stroke-width="1.1"/><path d="M724.0 366.0C727.5 365.4 737.3 362.9 745.0 362.5C752.7 362.1 762.0 362.6 770.0 363.5C778.0 364.4 789.2 367.2 793.0 368.0" fill="none" stroke="#000" stroke-width="0.8"/><path d="M759.6 379.1l-0.5 4.2M736.7 371.9l-1.2 3.9M725.9 374.0l-1.0 4.5M727.9 374.8l-1.9 2.5M741.0 374.7l-0.6 2.9M758.6 372.4l-1.8 4.1M750.9 380.4l-1.2 2.7M767.8 379.4l-1.6 4.1M746.0 376.9l-0.7 3.5M735.5 369.2l-1.2 4.2M763.5 380.5l-1.8 2.3M749.9 378.2l-0.9 2.8M763.9 370.9l-1.1 3.1M732.6 373.6l-0.8 4.5M767.1 375.6l-0.5 3.5M743.8 377.2l-1.9 3.6M739.3 373.4l-0.8 4.6M724.1 373.7l-1.5 3.1M740.4 375.1l-1.6 4.3M751.8 371.2l-1.6 2.1M752.2 376.7l-1.0 3.2M728.8 369.3l-1.3 2.4M754.8 371.7l-2.0 2.2M729.7 374.7l-0.5 3.0M751.0 372.5l-0.7 3.9M742.2 376.6l-1.7 4.5M748.6 379.0l-1.1 3.3M762.7 372.9l-0.8 3.3M754.9 376.6l-1.2 2.4M760.1 381.1l-0.9 3.5M758.7 376.7l-1.5 2.9M731.1 372.8l-1.5 4.0M767.1 374.8l-0.6 4.9M734.3 373.0l-0.8 2.6M719.1 375.3l1.7 4.0M719.8 373.3l1.5 2.7M729.5 387.3l1.6 3.0M729.3 382.2l1.3 3.6M725.4 377.6l1.9 2.1M718.2 390.9l1.2 3.6M722.8 386.1l1.2 2.9M726.6 383.4l1.1 3.9M729.4 383.4l1.3 3.2M726.8 389.5l1.8 2.0M721.8 392.2l1.8 2.9M725.5 384.2l1.0 2.0M724.3 380.0l1.2 3.3M719.0 385.3l1.2 2.6M722.0 390.9l1.6 2.6M729.4 374.6l1.6 3.1M724.6 383.6l1.0 3.1M726.7 392.8l1.6 2.9M718.0 372.3l1.2 2.3M719.3 373.1l1.3 2.2M717.8 372.7l1.2 3.4M720.8 377.4l1.7 3.9M726.9 380.1l1.2 3.5M719.2 374.9l2.0 3.5M724.1 373.0l1.2 2.7" fill="none" stroke="#333" stroke-width="0.6"/><path d="M683.4 419.3l0.8 3.1M704.2 416.2l0.6 3.0M682.7 382.5l1.0 2.6M707.8 420.3l1.9 3.0M702.5 418.7l1.7 2.8M701.3 396.4l1.6 2.8M706.4 404.6l1.8 3.3M702.7 403.6l1.0 2.3M685.3 403.5l0.5 3.4M690.4 420.7l1.4 3.6M682.1 425.3l1.3 3.1M685.3 425.6l1.0 2.4M709.8 383.9l1.5 3.7M705.1 396.8l0.9 3.8M709.9 412.7l1.4 2.2M710.4 413.3l0.9 2.4M693.5 403.3l0.8 2.8M697.7 411.7l1.7 3.4M701.6 413.0l0.9 3.4M702.6 387.9l1.4 2.6M694.0 421.0l1.9 2.8M703.6 420.5l1.1 2.4M705.6 409.9l1.1 3.3M693.2 407.4l1.9 2.1M707.5 400.8l1.4 2.6M692.4 412.9l0.8 4.0M694.2 399.4l1.3 3.0M699.4 382.8l1.3 2.2M697.2 423.5l0.8 2.9M706.1 395.4l1.5 3.9" fill="none" stroke="#2a2a2a" stroke-width="0.6"/><path d="M690.0 392.0C691.7 390.0 696.3 383.3 700.0 380.0C703.7 376.7 710.0 373.3 712.0 372.0" fill="none" stroke="#000" stroke-width="0.6"/><path d="M806.0 484.7C810.8 483.3 825.2 477.4 835.0 476.3C844.8 475.2 855.5 476.0 865.0 478.0C874.5 480.0 887.5 486.3 892.0 488.0M806.0 486.7C810.8 485.4 825.2 479.7 835.0 478.8C844.8 478.0 855.5 479.5 865.0 481.6C874.5 483.7 887.5 489.9 892.0 491.6M806.0 491.8C810.8 490.5 825.2 485.2 835.0 484.1C844.8 483.0 855.5 483.4 865.0 485.2C874.5 487.0 887.5 493.5 892.0 495.2M806.0 494.4C810.8 493.1 825.2 487.4 835.0 486.5C844.8 485.5 855.5 486.7 865.0 488.8C874.5 490.9 887.5 497.1 892.0 498.8M806.0 498.2C810.8 497.0 825.2 491.8 835.0 490.9C844.8 489.9 855.5 490.5 865.0 492.4C874.5 494.3 887.5 500.7 892.0 502.4M806.0 502.9C810.8 501.3 825.2 494.5 835.0 493.3C844.8 492.2 855.5 493.9 865.0 496.0C874.5 498.1 887.5 504.3 892.0 506.0M806.0 505.4C810.8 504.2 825.2 499.1 835.0 498.1C844.8 497.1 855.5 497.7 865.0 499.6C874.5 501.5 887.5 507.9 892.0 509.6M806.0 508.8C810.8 507.6 825.2 502.8 835.0 501.9C844.8 501.0 855.5 501.3 865.0 503.2C874.5 505.1 887.5 511.5 892.0 513.2" fill="none" stroke="#222" stroke-width="0.6"/><path d="M800.0 508.0C805.0 507.2 820.0 504.3 830.0 503.0C840.0 501.7 850.8 500.0 860.0 500.0C869.2 500.0 878.0 501.3 885.0 503.0C892.0 504.7 899.2 508.8 902.0 510.0" fill="none" stroke="#000" stroke-width="1.6"/><path d="M779.0 513.0C782.5 512.7 792.8 511.6 800.0 511.0C807.2 510.4 812.0 510.6 822.0 509.5C832.0 508.4 850.3 505.1 860.0 504.3C869.7 503.6 874.8 504.3 880.0 505.0C885.2 505.7 889.5 508.0 891.4 508.6" fill="none" stroke="#000" stroke-width="1.1"/><path d="M778.7 539.0C782.2 538.7 792.8 537.6 800.0 537.0C807.2 536.4 812.5 536.0 822.0 535.5C831.5 535.0 847.5 532.9 856.7 533.8C866.0 534.7 870.3 538.8 877.5 540.7C884.7 542.6 896.2 544.3 900.0 545.0" fill="none" stroke="#000" stroke-width="1.0"/><path d="M777.0 549.4C779.2 550.3 785.4 553.4 790.0 555.0C794.6 556.6 795.0 557.5 804.7 559.0C814.4 560.5 833.5 563.3 848.0 564.0C862.5 564.7 881.0 564.9 891.4 563.0C901.8 561.1 906.2 558.1 910.5 552.9C914.8 547.7 916.8 538.4 917.4 532.0C918.0 525.6 916.6 520.5 914.0 514.7C911.4 508.9 905.6 502.8 901.8 497.3C898.0 491.8 893.1 484.3 891.4 481.7" fill="none" stroke="#000" stroke-width="1.4"/><path d="M892 513L907 515M891 521L910 525M890 529L911 533M889 537L907 541M895 510Q905 508 912 520" fill="none" stroke="#000" stroke-width="1.0"/><path d="M836.9 531.6l1.1 4.0M810.3 531.9l2.0 3.8M874.3 528.2l1.8 3.8M827.0 531.2l1.5 4.8M861.2 533.1l0.6 3.8M782.2 532.7l1.4 2.2M881.5 532.3l0.9 4.9M841.2 530.0l1.8 3.3M852.8 530.6l0.9 3.9M862.4 530.0l1.6 4.5M855.3 529.2l1.7 2.7M834.1 530.0l1.8 2.1M824.0 534.1l1.7 2.8M792.4 533.4l1.1 3.9M797.2 530.1l0.9 3.8M784.2 533.6l0.9 3.1M843.5 533.7l0.7 3.3M845.0 531.7l1.0 4.5M808.8 533.2l2.0 4.2M782.2 531.5l1.0 5.0M848.8 529.3l0.6 2.1M795.7 533.4l1.9 3.1M813.0 533.1l1.8 2.4M841.0 531.2l1.7 4.0M793.7 533.4l0.8 4.9M888.9 529.1l1.4 3.5M810.0 530.6l0.6 3.6M869.8 531.6l1.4 3.7M805.1 531.0l1.0 4.5M787.9 530.8l1.5 5.0M784.8 550.2l0.0 3.3M883.5 549.7l-0.5 3.7M825.2 555.6l-1.0 3.3M825.5 555.9l0.5 3.1M857.1 552.9l-0.7 3.4M808.5 556.1l-0.1 3.5M796.2 552.6l-0.1 3.1M872.3 553.3l0.5 3.6M904.8 553.5l-0.7 3.5M787.7 548.6l-0.1 3.0M911.5 550.8l0.8 3.9M799.3 551.5l0.5 2.1M816.5 554.9l-0.6 3.7M838.2 557.0l-0.2 3.9M866.9 553.1l-0.3 2.4M906.5 548.4l0.5 3.3M881.5 552.2l0.8 3.3M831.8 552.7l-0.6 3.2M853.8 553.1l1.0 2.2M893.8 550.4l-0.5 3.3M785.3 553.7l-0.9 3.1M899.1 548.8l-0.4 2.9M838.2 555.4l0.2 3.6M794.8 553.8l-0.9 3.7M780.3 552.5l-0.5 3.0M871.7 552.3l-0.7 2.0M843.6 551.4l0.7 3.8M884.0 554.2l0.2 3.7M783.9 548.7l0.3 2.4M828.0 555.9l0.0 3.1M871.1 551.7l0.7 3.4M782.5 547.8l-0.4 3.6M787.8 549.6l0.2 2.1M824.1 556.8l0.1 2.5M823.0 555.7l0.8 2.1M889.7 551.5l0.5 2.7M907.9 550.0l0.4 3.6M846.1 556.2l0.5 3.1M827.3 554.9l0.5 2.9M881.2 553.3l1.0 3.2M860.6 553.0l0.0 3.8M870.0 554.1l-0.8 2.4M823.9 553.3l0.9 2.2M800.8 551.1l-0.9 3.0M818.3 551.0l-0.8 2.9M781.2 518.4l2.4 0.1M796.4 545.4l4.0 0.6M797.9 547.3l3.8 -0.3M794.5 542.4l3.2 -0.2M787.5 533.3l4.2 -0.1M785.3 534.5l3.4 0.9M797.7 535.6l3.1 0.5M783.5 517.8l5.0 -0.9M797.0 545.9l2.3 0.9M783.7 538.3l4.6 0.5M794.3 543.4l3.7 -0.3M794.1 522.1l3.0 0.4M787.7 530.8l2.2 -0.2M795.3 527.2l2.0 0.6M803.2 534.2l4.1 0.6M786.1 523.0l2.3 0.5M797.4 547.0l3.7 0.6M786.0 524.4l4.5 0.6M781.5 540.8l2.8 0.7M798.5 536.3l4.9 -0.3M796.8 520.3l2.3 0.5M783.7 547.0l2.1 -0.2M791.0 538.4l2.9 0.1M800.5 528.3l2.9 0.9M783.7 520.3l4.9 0.6M789.0 524.6l3.9 0.6M789.0 515.4l3.7 0.6M787.7 535.9l4.9 0.4M802.0 533.0l4.9 -0.2M783.4 547.3l4.7 -0.4M785.0 533.6l2.8 -0.5M801.0 521.8l4.6 0.8M789.0 526.4l2.4 0.6M798.9 525.8l2.5 -0.2M793.4 527.1l3.0 -0.3M785.1 541.4l2.2 0.4M796.7 540.6l3.7 -0.1M796.3 515.6l4.5 -0.7M787.5 537.9l3.7 -0.4M789.6 529.0l4.9 -0.1" fill="none" stroke="#222" stroke-width="0.6"/><path d="M898.0 490.0C899.5 492.5 904.7 499.2 907.0 505.0C909.3 510.8 911.3 518.3 912.0 525.0C912.7 531.7 912.5 539.5 911.0 545.0C909.5 550.5 904.3 555.8 903.0 558.0" fill="none" stroke="#000" stroke-width="1.8"/><path d="M822 545Q840 548 855 552" fill="none" stroke="#000" stroke-width="0.7"/><path d="M641.0 447.5C639.8 447.4 636.2 446.8 634.0 447.0C631.8 447.2 629.7 448.3 628.0 449.0C626.3 449.7 625.3 450.0 624.0 451.0C622.7 452.0 621.2 453.5 620.0 455.0C618.8 456.5 618.0 458.3 617.0 460.0C616.0 461.7 614.8 463.2 614.0 465.0C613.2 466.8 612.7 469.0 612.5 471.0C612.3 473.0 612.6 475.2 613.0 477.0C613.4 478.8 614.0 480.5 615.0 482.0C616.0 483.5 617.3 484.7 619.0 486.0C620.7 487.3 622.8 488.5 625.0 490.0C627.2 491.5 629.5 493.2 632.0 495.0C634.5 496.8 637.5 499.2 640.0 501.0C642.5 502.8 644.8 504.5 647.0 506.0C649.2 507.5 652.0 509.3 653.0 510.0" fill="none" stroke="#000" stroke-width="1.2"/><path d="M628.0 449.0C628.5 450.0 630.0 453.3 631.0 455.0C632.0 456.7 633.5 458.3 634.0 459.0" fill="none" stroke="#000" stroke-width="1.0"/><path d="M620.0 456.0C620.7 456.8 622.7 459.7 624.0 461.0C625.3 462.3 627.3 463.5 628.0 464.0" fill="none" stroke="#000" stroke-width="1.0"/><path d="M615.0 466.0C615.7 466.5 617.5 468.2 619.0 469.0C620.5 469.8 623.2 470.7 624.0 471.0" fill="none" stroke="#000" stroke-width="1.0"/><path d="M613.0 476.0C613.8 476.3 616.5 477.5 618.0 478.0C619.5 478.5 621.3 478.8 622.0 479.0" fill="none" stroke="#000" stroke-width="0.9"/><path d="M639.0 447.5C642.1 446.8 651.8 444.2 657.8 443.0C663.8 441.8 669.6 441.2 675.0 440.2C680.4 439.2 687.5 437.5 690.0 437.0" fill="none" stroke="#000" stroke-width="1.0"/><path d="M639.0 449.0C640.0 450.8 643.2 456.2 645.0 460.0C646.8 463.8 648.3 468.0 650.0 472.0C651.7 476.0 654.2 482.0 655.0 484.0" fill="none" stroke="#000" stroke-width="1.5"/><path d="M626 486l10 8" fill="none" stroke="#000" stroke-width="0.8"/><path d="M667.3 481.0l6.0 0.2M661.3 454.1l9.4 -0.8M646.3 477.4l7.7 -1.4M661.9 473.1l8.7 -0.2M667.2 470.0l8.9 -0.7M661.4 458.8l9.4 -1.4M666.3 456.5l8.8 0.1M659.8 467.3l8.4 -0.1M653.7 481.9l9.4 -0.7M659.8 474.6l7.6 -1.1M651.1 457.4l5.3 -0.2M655.7 464.9l6.1 -0.3M649.4 461.3l9.6 -1.2M661.3 459.2l9.2 -0.6M667.6 471.7l8.4 -1.2M659.6 478.9l8.5 -0.2M654.7 475.0l9.4 -0.5M656.8 453.9l6.8 -1.3M662.2 459.3l8.2 0.4M660.6 481.5l9.6 -1.1M658.2 456.2l7.1 0.3M657.2 465.5l6.4 0.1M662.8 457.2l5.8 -0.5M658.0 481.2l8.0 -0.9M654.5 450.5l7.4 -1.3M655.0 472.7l7.4 0.1M650.0 458.0l8.1 -0.5M661.2 451.7l7.5 -1.4M660.8 479.2l6.9 -0.4M660.4 473.6l5.1 -0.2M647.3 475.8l7.0 -0.4M646.6 474.3l5.8 -0.0M656.9 463.5l7.9 0.0M663.0 458.7l8.8 -0.7" fill="none" stroke="#222" stroke-width="0.6"/><clipPath id="hc"><path d="M706.5 406.6C709.3 403.7 710.1 400.4 712.0 399.0C713.9 397.6 715.7 398.0 718.0 397.9C720.3 397.8 723.3 397.8 726.0 398.5C728.7 399.2 731.3 400.6 734.0 402.0C736.7 403.4 739.4 405.3 742.0 407.0C744.6 408.7 746.3 410.2 749.8 412.3C753.3 414.4 759.4 417.0 762.8 419.6C766.2 422.2 768.5 423.8 770.0 428.0C771.5 432.2 771.5 438.0 772.0 445.0C772.5 452.0 772.3 460.4 773.0 470.0C773.7 479.6 775.0 492.8 776.0 502.6C777.0 512.4 778.7 520.8 779.0 529.0C779.3 537.2 778.9 544.8 778.0 552.0C777.1 559.2 776.3 567.2 773.5 572.0C770.7 576.8 765.1 579.0 761.0 581.0C756.9 583.0 753.0 584.8 749.0 584.0C745.0 583.2 739.8 578.2 737.0 576.0C734.2 573.8 734.5 571.7 732.0 571.0C729.5 570.3 726.0 571.3 722.0 572.0C718.0 572.7 713.3 574.5 708.0 575.0C702.7 575.5 695.3 575.5 690.0 575.0C684.7 574.5 680.3 573.0 676.0 572.0C671.7 571.0 668.0 570.0 664.0 569.0C660.0 568.0 655.5 568.4 652.0 565.9C648.5 563.4 644.0 558.4 643.0 553.7C642.0 549.1 644.7 543.6 646.0 538.0C647.3 532.4 649.3 526.3 651.0 520.0C652.7 513.7 654.7 506.4 656.0 500.0C657.3 493.6 657.5 487.4 658.8 481.7C660.1 476.0 662.3 470.8 664.0 466.0C665.7 461.2 666.2 457.9 669.0 452.8C671.8 447.7 676.2 441.5 680.5 435.5C684.8 429.5 690.7 421.5 695.0 416.7C699.3 411.9 703.7 409.6 706.5 406.6Z"/></clipPath><path d="M706.5 406.6C709.3 403.7 710.1 400.4 712.0 399.0C713.9 397.6 715.7 398.0 718.0 397.9C720.3 397.8 723.3 397.8 726.0 398.5C728.7 399.2 731.3 400.6 734.0 402.0C736.7 403.4 739.4 405.3 742.0 407.0C744.6 408.7 746.3 410.2 749.8 412.3C753.3 414.4 759.4 417.0 762.8 419.6C766.2 422.2 768.5 423.8 770.0 428.0C771.5 432.2 771.5 438.0 772.0 445.0C772.5 452.0 772.3 460.4 773.0 470.0C773.7 479.6 775.0 492.8 776.0 502.6C777.0 512.4 778.7 520.8 779.0 529.0C779.3 537.2 778.9 544.8 778.0 552.0C777.1 559.2 776.3 567.2 773.5 572.0C770.7 576.8 765.1 579.0 761.0 581.0C756.9 583.0 753.0 584.8 749.0 584.0C745.0 583.2 739.8 578.2 737.0 576.0C734.2 573.8 734.5 571.7 732.0 571.0C729.5 570.3 726.0 571.3 722.0 572.0C718.0 572.7 713.3 574.5 708.0 575.0C702.7 575.5 695.3 575.5 690.0 575.0C684.7 574.5 680.3 573.0 676.0 572.0C671.7 571.0 668.0 570.0 664.0 569.0C660.0 568.0 655.5 568.4 652.0 565.9C648.5 563.4 644.0 558.4 643.0 553.7C642.0 549.1 644.7 543.6 646.0 538.0C647.3 532.4 649.3 526.3 651.0 520.0C652.7 513.7 654.7 506.4 656.0 500.0C657.3 493.6 657.5 487.4 658.8 481.7C660.1 476.0 662.3 470.8 664.0 466.0C665.7 461.2 666.2 457.9 669.0 452.8C671.8 447.7 676.2 441.5 680.5 435.5C684.8 429.5 690.7 421.5 695.0 416.7C699.3 411.9 703.7 409.6 706.5 406.6Z" fill="#050505" stroke="#000" stroke-width="1.2"/><g clip-path="url(#hc)"><path d="M647.8 470.6 L643.8 471.3 L640.1 472.5M674.9 497.7 L671.7 500.1 L668.9 502.9 L666.6 506.2 L664.8 509.8 L663.8 511.5M646.1 471.6 L642.1 472.0 L638.1 472.4 L634.2 473.3 L630.5 474.9 L627.0 476.7 L625.2 477.6M708.9 514.9 L707.5 518.6 L706.9 522.6 L706.9 526.6 L706.8 530.6 L706.2 534.5 L705.6 536.4M747.8 527.9 L749.2 531.6 L750.8 535.3 L751.9 539.1 L752.4 543.1 L752.3 547.1 L752.3 549.1M668.3 522.6 L665.8 525.7 L663.7 529.1 L662.4 532.9 L661.6 536.8 L660.6 540.7 L659.9 542.5M689.5 529.5 L688.8 533.4 L688.6 537.4 L688.4 541.4M714.5 525.3 L713.3 529.1 L712.8 533.0 L713.1 537.0 L713.8 541.0 L714.1 545.0 L714.1 547.0M721.8 435.2 L720.5 439.0 L718.8 442.6 L717.7 444.3M724.2 539.5 L724.4 543.5 L724.1 547.5 L723.7 551.4M727.4 573.5 L728.0 577.5 L729.0 581.4 L729.4 583.3M741.1 534.4 L740.8 538.4 L740.7 542.4 L741.2 546.3M685.4 562.9 L686.1 566.8 L686.6 570.8M667.2 553.8 L665.9 557.5 L665.4 561.5 L665.6 565.5 L665.8 567.5M743.2 414.3 L745.9 417.3 L748.3 420.5M655.5 467.5 L651.9 469.3 L648.1 470.3 L644.1 470.8M712.7 485.5 L710.8 489.1 L708.3 492.2 L705.8 495.3 L703.6 498.6 L702.1 502.4 L701.2 506.2M716.2 522.9 L715.6 526.8 L715.8 530.8 L716.3 534.8 L716.5 538.8 L716.1 542.8M725.9 436.1 L727.1 439.9 L728.3 443.8 L728.9 447.7 L728.9 449.7M704.7 446.6 L701.6 449.1 L698.8 452.0 L696.3 455.0 L693.4 457.8 L690.0 459.9M667.3 534.3 L665.9 538.1 L665.2 542.0 L664.8 546.0 L664.0 549.9M768.3 460.2 L770.0 463.8 L772.4 467.0 L775.2 469.8 L778.2 472.5M757.0 468.6 L759.4 471.8 L761.8 474.9 L763.9 478.4 L765.3 482.1 L765.8 484.1M757.7 447.8 L760.7 450.5 L763.4 453.4 L765.7 456.7 L767.4 460.3 L769.0 464.0 L769.9 465.8M742.5 510.8 L742.5 514.8 L742.4 518.8 L742.7 522.8 L743.7 526.7 L744.4 528.6M652.2 563.1 L651.7 567.1 L650.7 571.0 L650.0 572.8M744.9 472.3 L746.8 475.8 L748.6 479.4 L749.8 483.2 L750.3 487.1 L750.7 491.1 L751.5 495.0M650.2 559.1 L648.6 562.8 L647.0 566.4 L645.8 570.3 L645.6 572.2M712.6 533.6 L712.9 537.6 L712.7 541.6 L712.0 545.5M719.2 562.1 L719.0 566.1 L719.3 570.1 L720.4 573.9 L721.2 575.7M673.0 481.7 L669.9 484.3 L666.5 486.3 L662.8 488.0M654.5 579.2 L653.7 583.1 L653.6 587.1 L654.3 591.1M664.5 467.6 L661.0 469.6 L657.2 470.8 L653.3 471.5 L651.3 471.9M694.8 446.4 L691.0 447.7 L687.2 449.0 L683.6 450.7M763.9 447.3 L766.7 450.2 L768.9 453.6 L770.7 457.1 L772.7 460.6 L775.2 463.7 L776.6 465.1M745.6 460.5 L746.2 464.4 L746.9 468.4M663.3 492.4 L660.2 495.0 L656.7 496.9 L653.2 498.8 L651.5 499.8M711.5 541.6 L712.0 545.6 L712.9 549.5 L713.6 553.4 L713.8 557.4 L713.5 561.4M771.2 427.2 L774.8 428.9 L778.6 430.3 L782.2 431.8 L785.6 434.0 L787.1 435.3M684.4 504.6 L682.9 508.2 L681.5 512.0 L680.7 513.8M737.8 530.4 L738.8 534.3 L740.1 538.1 L741.2 541.9 L741.5 543.9M714.2 415.6 L710.9 417.8 L707.1 419.1 L703.2 420.1 L699.4 421.4 L695.8 423.2 L694.1 424.1M714.3 541.0 L714.9 545.0 L715.8 548.9 L716.6 552.8 L716.7 556.8 L716.5 560.8M722.0 465.5 L719.9 468.9 L718.5 472.6 L717.3 476.5 L715.9 480.2M768.4 558.6 L769.0 562.5 L770.3 566.3 L772.2 569.9 L774.0 573.4 L774.7 575.3M726.2 435.9 L725.8 439.8 L725.6 443.8 L726.1 447.8 L727.2 451.6 L728.3 455.5M682.9 546.5 L681.8 550.3 L680.4 554.1 L679.3 557.9 L679.0 561.9 L679.5 565.9M701.6 463.2 L699.4 466.5 L697.1 469.8 L694.3 472.7 L691.0 475.0 L687.6 477.0M742.9 498.6 L744.2 502.4 L745.9 506.0 L747.2 509.8 L747.9 513.7 L747.9 517.7M682.7 512.1 L681.3 515.8 L679.4 519.4 L677.1 522.6 L674.6 525.7 L672.7 529.2 L671.5 533.1M659.1 531.7 L658.1 535.5 L657.0 539.4 L656.4 541.3M664.0 438.3 L660.1 439.4 L656.3 440.5 L652.3 441.0 L648.3 440.7 L646.4 440.3M653.2 511.9 L650.3 514.7 L647.1 517.1 L644.0 519.6 L641.5 522.7 L639.5 526.2 L637.9 529.8M693.5 441.6 L690.0 443.6 L686.8 446.0 L683.6 448.3M646.6 569.4 L646.6 573.4 L646.3 577.4 L645.3 581.2 L644.1 585.0 L643.6 587.0M709.0 499.7 L707.2 503.3 L704.9 506.6 L703.8 508.2M734.4 476.7 L734.4 480.7 L734.1 484.7 L734.2 488.7 L735.1 492.6 L736.4 496.4 L737.7 500.2M662.5 550.9 L661.6 554.8 L660.2 558.5 L658.6 562.2M651.7 448.8 L647.7 448.4 L643.7 448.4 L639.8 449.0 L635.9 450.0 L633.9 450.5M693.7 520.9 L693.2 524.9 L692.2 528.8 L690.6 532.5 L688.8 536.0 L688.0 537.9M689.8 552.3 L690.2 556.2 L690.1 560.2 L689.4 564.2 L688.6 568.1M678.2 558.8 L677.0 562.7 L676.1 566.5 L675.9 570.5 L676.5 574.5 L677.0 576.4M651.7 476.5 L648.0 478.0 L644.1 478.9 L640.1 479.6 L638.2 480.1M650.6 575.6 L650.5 579.6 L649.7 583.5M726.4 574.4 L727.4 578.3 L728.1 582.2 L728.3 586.2 L727.7 590.2 L727.3 592.2M668.2 474.6 L664.9 476.8 L661.2 478.3 L657.3 479.4 L653.6 480.8 L651.8 481.7M691.2 545.6 L690.2 549.5 L689.0 553.3 L688.1 557.2 L688.1 561.2 L688.7 565.1 L689.2 567.1M676.8 519.1 L675.6 522.9 L674.7 526.8 L673.3 530.6 L672.4 532.4M661.2 515.5 L658.7 518.6 L656.9 522.2 L655.5 525.9 L653.8 529.6 L651.6 532.9 L649.1 536.0M733.0 477.1 L733.4 481.0 L734.4 484.9 L735.8 488.6 L736.9 492.5 L737.2 494.5M667.7 503.5 L664.5 505.9 L661.4 508.5 L660.1 510.0M664.6 495.6 L662.3 498.8 L659.7 501.9M720.5 508.2 L719.2 511.9 L717.5 515.6 L716.1 519.3M776.0 476.1 L777.6 479.8 L779.0 483.5 L780.9 487.0M691.6 560.0 L692.1 564.0 L693.0 567.8 L693.9 571.7 L694.2 575.7 L693.9 579.7 L693.8 581.7M714.1 462.9 L711.2 465.6 L708.3 468.4 L705.9 471.6M745.7 475.8 L747.3 479.5 L748.2 483.4 L748.6 487.3 L749.0 491.3 L749.9 495.2M657.4 574.1 L657.6 578.1 L657.2 582.0 L656.4 585.9M675.7 537.6 L675.2 541.5 L674.1 545.4 L672.4 549.0 L670.8 552.7M763.4 461.0 L765.8 464.2 L767.6 467.7 L768.3 469.6M671.5 497.9 L668.2 500.1 L665.2 502.8 L662.8 505.9M717.7 552.4 L717.3 556.3 L717.2 560.3 L718.0 564.2M648.5 441.0 L644.6 440.3 L640.6 440.2 L636.6 440.7 L632.6 441.3 L628.6 441.5 L624.7 440.8M666.0 509.8 L663.6 513.0 L660.7 515.7 L657.7 518.4 L656.3 519.8M699.1 528.2 L697.4 531.8 L695.9 535.5 L695.1 539.4M649.9 524.7 L647.9 528.2 L645.4 531.3 L642.7 534.2 L640.1 537.3 L638.2 540.8 L637.1 544.6M708.9 524.0 L708.7 528.0 L707.8 531.9 L706.5 535.7 L705.9 537.6M723.6 559.6 L723.5 563.6 L723.7 567.6 L724.7 571.5 L725.5 573.3M742.4 546.3 L742.1 550.3 L742.2 554.3 L743.1 558.2 L743.8 560.0M669.9 523.3 L667.9 526.8 L666.7 530.6 L666.3 532.6M651.4 572.7 L651.7 576.7 L652.1 580.7 L652.1 582.7M658.1 556.5 L656.6 560.2 L655.0 563.9 L654.0 567.8 L653.9 571.8 L654.1 573.7M726.0 543.5 L725.9 547.5 L725.3 551.4 L724.8 555.4 L724.9 557.4M726.9 498.3 L726.6 502.2 L725.9 506.2 L725.5 510.2 L725.8 514.1 L726.7 518.0M693.0 564.3 L693.9 568.1 L694.9 572.0 L695.5 576.0M734.8 491.7 L734.8 495.7 L734.4 499.7 L734.4 503.7 L735.2 507.6 L736.4 511.4 L737.1 513.3M690.6 548.4 L689.4 552.2 L688.5 556.1 L688.3 560.1 L688.6 562.1M667.7 472.2 L664.3 474.4 L660.6 475.9M704.5 453.8 L701.4 456.3 L697.9 458.3 L694.4 460.2M772.3 555.1 L774.3 558.5 L776.1 562.1 L777.2 565.9 L777.7 569.9 L778.1 573.9 L778.5 575.8M729.4 436.1 L730.4 439.9 L730.8 443.9 L730.6 447.9 L730.6 451.9 L731.3 455.8 L732.6 459.6M669.4 538.9 L668.8 542.8 L667.8 546.7 L666.2 550.4 L664.5 554.0 L663.2 557.8 L662.9 559.7M695.9 446.8 L692.2 448.4 L688.4 449.6 L684.7 451.0 L681.2 453.0 L678.0 455.3 L676.4 456.5M760.8 480.6 L762.0 484.4 L762.9 488.3 L763.3 490.3M649.6 527.9 L648.3 531.6 L646.7 535.3 L644.6 538.7M661.8 474.4 L658.6 476.7 L655.5 479.2 L652.1 481.3 L648.4 482.7 L644.5 483.7 L642.5 484.2M716.9 560.2 L718.2 564.0 L719.7 567.7M742.1 414.8 L745.3 417.1 L748.1 419.9 L750.5 423.2 L752.8 426.4 L754.1 428.0M655.9 573.7 L655.0 577.6 L655.0 581.6 L655.6 585.5 L656.3 589.5 L656.5 591.4M762.8 504.7 L764.8 508.1 L766.9 511.5 L768.8 515.0 L769.4 516.9M662.8 559.1 L662.1 563.0 L660.8 566.8 L659.5 570.6 L659.1 572.6M773.7 408.3 L777.6 409.0 L781.6 409.2 L783.6 409.2M713.6 500.1 L712.4 503.9 L711.8 507.8M735.9 559.5 L737.1 563.4 L738.1 567.2M703.5 575.6 L703.4 579.6 L704.1 583.5 L705.6 587.2 L706.5 589.0M693.5 577.5 L693.3 581.5 L693.1 585.5 L693.4 589.4 L693.8 591.4M752.2 464.5 L754.5 467.8 L756.4 471.3 L757.7 475.1 L758.5 479.0M699.5 480.3 L697.0 483.4 L694.0 486.0 L690.9 488.5 L688.0 491.4 L685.8 494.7 L684.9 496.4M687.3 470.3 L684.3 473.0 L681.7 476.0 L679.0 479.0 L676.0 481.6M701.5 513.5 L699.4 516.9 L697.9 520.6 L697.2 524.5 L697.1 526.5M736.2 508.6 L737.5 512.3 L738.6 516.2 L739.1 520.2 L739.0 522.2M721.1 482.0 L719.6 485.7 L718.8 489.6 L718.4 491.6M674.2 547.1 L674.2 551.1 L674.2 555.1 L674.1 557.1M751.3 478.5 L752.8 482.2 L754.9 485.6 L756.9 489.0 L758.5 492.7 L759.4 496.6 L759.6 498.6M733.4 553.1 L732.9 557.0 L732.4 561.0 L732.4 563.0M724.4 410.7 L722.8 414.4 L721.4 418.2 L720.0 421.9 L718.0 425.4 L716.7 426.9M671.1 481.2 L667.4 482.8 L663.8 484.6 L660.7 487.0 L659.3 488.4M705.3 474.5 L702.4 477.2 L699.3 479.7 L696.5 482.5M729.7 554.5 L729.9 558.5 L729.5 562.5 L729.1 564.5M715.6 531.1 L716.1 535.1 L716.2 539.1 L715.8 543.0 L715.0 547.0M692.1 524.6 L691.4 528.5 L690.1 532.3 L688.3 535.9 L687.5 537.7M736.4 506.2 L737.4 510.1 L737.7 514.1 L737.6 516.1M652.7 511.8 L649.6 514.3 L646.4 516.6M691.5 534.6 L690.1 538.3 L688.5 542.0 L687.4 545.8 L687.0 549.8 L687.4 553.8 L687.6 555.8M659.3 511.8 L656.2 514.3 L653.1 516.9 L651.8 518.3M776.9 519.8 L778.7 523.4 L781.0 526.7 L783.3 530.0 L785.1 533.5 L785.8 535.4M699.4 509.9 L698.1 513.6 L696.2 517.2 L694.0 520.5 L692.1 524.0 L691.0 527.9M771.3 508.3 L773.6 511.6 L775.9 514.9 L777.6 518.5 L778.7 522.3 L779.5 526.2 L780.7 530.1M747.9 515.7 L749.6 519.3 L750.9 523.1 L751.5 527.0M747.0 453.5 L748.2 457.3 L749.0 461.2 L749.9 465.1 L750.5 467.0M647.1 514.3 L645.1 517.8 L642.9 521.1 L640.1 524.0 L637.1 526.6M687.0 504.0 L685.4 507.7 L683.1 511.0 L680.5 514.0M728.3 447.7 L729.6 451.5 L730.6 455.3 L730.9 459.3M728.7 545.1 L728.0 549.0 L727.7 553.0M740.8 511.9 L742.2 515.7 L742.9 519.6 L743.0 523.6 L742.8 527.6 L743.0 531.6M700.1 528.6 L698.9 532.4 L697.4 536.1 L696.0 539.9 L695.4 543.8 L695.4 545.8M666.9 521.7 L664.8 525.1 L662.2 528.2 L659.7 531.3 L657.7 534.8 L656.5 538.6 L655.8 542.5M732.7 419.8 L734.4 423.4 L736.7 426.7 L739.2 429.9M715.8 511.2 L714.2 514.9 L713.4 518.8 L713.3 520.8M664.0 472.5 L660.9 475.0 L657.5 477.1 L653.8 478.7 L649.9 479.6 L648.0 480.1M732.8 461.8 L732.7 465.8 L732.5 469.8 L732.7 473.8 L733.1 475.8M776.2 431.2 L779.3 433.7 L782.8 435.7 L786.5 437.1 L790.2 438.6 L793.6 440.7 L796.6 443.3M689.5 491.8 L687.4 495.2 L685.7 498.8 L683.8 502.3M695.4 535.1 L693.9 538.8 L693.2 542.7M713.5 576.6 L714.1 580.5 L714.3 584.5 L714.7 588.5M709.8 422.7 L706.3 424.5 L702.9 426.7 L699.8 429.2 L696.6 431.6 L694.8 432.5M776.4 579.0 L777.2 582.9 L778.8 586.6 L780.7 590.1 L782.4 593.7 L783.6 597.5M752.5 466.3 L754.4 469.8 L755.7 473.6 L756.5 477.5 L757.4 481.4 L758.9 485.1M755.4 474.8 L756.4 478.7 L757.1 482.6 L758.2 486.5 L759.9 490.1 L761.0 491.8M650.5 547.1 L648.8 550.7 L646.8 554.1 L644.9 557.7 L643.9 561.6 L643.5 565.5 L643.5 569.5M739.2 547.6 L740.5 551.4 L741.4 555.3 L741.5 559.3 L741.2 563.3 L740.9 567.3 L741.1 569.3M716.6 574.2 L718.1 578.0 L719.0 581.8 L719.4 585.8 L719.6 587.8M734.8 452.5 L736.3 456.2 L737.3 460.1 L737.5 462.1M723.0 548.1 L723.1 552.1 L724.1 556.0M735.0 571.8 L735.0 575.8 L734.4 579.7 L734.0 583.7 L734.2 587.7M710.4 549.0 L711.0 553.0 L711.1 557.0 L710.7 560.9 L710.4 564.9M675.7 533.3 L673.6 536.7 L671.9 540.3 L671.3 542.3M669.5 573.2 L668.8 577.1 L667.9 581.0 L667.6 583.0M651.7 486.4 L648.3 488.4 L645.2 491.0 L643.8 492.4M750.6 513.4 L752.3 517.0 L754.0 520.6 L755.1 524.4 L755.6 528.4 L755.6 530.4M731.2 504.5 L730.7 508.5 L730.3 512.5 L730.4 514.5M735.8 487.7 L736.9 491.5 L737.2 495.5 L737.1 497.5M718.5 533.3 L717.5 537.2 L717.2 541.2 L717.7 545.1 L718.7 549.0M653.0 465.2 L649.0 465.6 L645.1 466.5 L643.3 467.2M662.9 571.0 L663.3 575.0 L663.9 578.9 L664.1 582.9 L664.0 584.9M723.4 558.2 L724.8 561.9 L726.0 565.7M772.4 549.2 L774.0 552.8 L776.0 556.3 L777.9 559.8 L779.2 563.6 L779.6 565.5M672.4 533.9 L671.8 537.9 L671.1 541.8 L669.8 545.6 L668.1 549.2 L667.2 551.0M773.7 417.5 L777.2 419.4 L780.5 421.7 L783.8 423.9 L787.5 425.5 L791.4 426.4 L795.3 427.2M766.0 482.2 L767.0 486.0 L768.2 489.9 L770.0 493.4 L772.4 496.6 L773.6 498.2M718.5 467.5 L717.2 471.3 L715.3 474.8 L712.7 477.9M751.8 426.5 L755.1 428.8 L758.4 431.0 L761.4 433.7 L763.9 436.8 L766.1 440.1 L768.5 443.3M702.7 562.3 L702.3 566.3 L701.9 570.2 L702.0 574.2 L703.0 578.1 L703.8 580.0M734.0 517.2 L735.1 521.0 L735.6 525.0 L735.6 527.0M721.5 490.4 L720.4 494.2 L718.6 497.8 L716.5 501.2 L715.5 502.9M703.1 474.9 L700.7 478.1 L697.7 480.7 L694.5 483.2 L691.6 485.9 L689.2 489.1 L687.3 492.6M678.9 577.4 L678.8 581.4 L679.5 585.3 L680.7 589.1M746.6 458.9 L747.4 462.8 L748.8 466.5 L750.9 469.9 L753.1 473.3 L754.9 476.8M648.7 510.7 L646.4 513.9 L643.5 516.7 L640.3 519.2 L637.2 521.6 L634.4 524.5M755.7 553.6 L756.7 557.5 L757.0 561.4 L756.9 565.4 L757.3 569.4M713.2 548.2 L712.6 552.1 L712.6 556.1M698.5 434.5 L694.7 435.8 L691.1 437.6 L687.8 439.8 L684.4 441.9M660.5 417.9 L656.9 416.3 L653.2 414.8 L649.3 413.9M710.7 545.7 L711.3 549.7 L712.4 553.5 L713.1 557.5M706.6 544.2 L706.1 548.2 L705.2 552.1 L704.7 556.0 L704.8 560.0 L705.8 563.9M743.7 433.3 L746.4 436.2 L748.9 439.4 L750.6 443.0 L752.0 446.8M695.0 484.6 L692.8 487.8 L690.0 490.7 L686.8 493.2M689.1 494.2 L687.5 497.9 L685.6 501.4 L684.4 503.0M647.1 531.6 L645.0 535.0 L642.4 538.1 L639.9 541.2 L637.8 544.6 L636.6 548.4 L635.8 552.3M665.8 573.9 L666.1 577.9 L665.8 581.9 L665.1 585.9 L664.5 589.8 L664.6 593.8 L665.5 597.7M737.1 440.5 L739.0 444.1 L740.3 447.9 L740.9 451.8 L741.4 455.8M675.8 429.6 L671.9 430.6 L668.1 431.7 L666.1 432.0M717.8 516.7 L717.8 520.7 L717.2 524.7M750.1 519.4 L750.9 523.3 L751.0 527.3 L751.1 531.3 L751.6 535.2 L752.9 539.0M736.3 471.6 L737.5 475.5 L739.1 479.1 L739.9 481.0M735.1 553.4 L736.0 557.3 L736.0 561.3 L735.6 565.3M665.3 528.2 L663.4 531.7 L661.1 535.0 L658.8 538.3M696.8 541.4 L695.5 545.2 L694.7 549.1M743.3 456.4 L744.7 460.2 L746.6 463.6 L748.8 467.0M739.3 453.3 L739.6 457.3 L740.5 461.2 L742.0 464.9 L743.9 468.4 L745.6 472.0 L746.2 473.9M662.3 424.8 L658.4 424.3 L654.4 424.4 L650.4 424.7 L646.4 424.6 L642.5 423.6 L640.7 422.8M681.2 525.8 L680.5 529.7 L679.4 533.5 L677.7 537.1 L675.7 540.6 L674.9 542.4M733.9 571.9 L735.0 575.8 L735.8 579.7M685.1 475.1 L681.5 477.0 L678.3 479.3M704.3 526.6 L703.8 530.5 L703.9 534.5 L704.1 538.5 L703.7 542.5 L702.8 546.4M662.2 482.9 L658.5 484.3 L654.8 486.0 L651.6 488.3M698.9 424.7 L695.5 426.8 L691.9 428.4 L689.9 428.9M679.3 430.0 L675.6 431.3 L671.7 432.3 L667.7 432.5 L663.7 431.9 L659.8 431.2M694.1 511.3 L693.2 515.2 L692.3 519.1 L690.9 522.8 L688.9 526.3 L687.9 528.0M753.7 537.4 L755.3 541.0 L756.4 544.9 L756.8 548.8 L756.8 552.8M716.5 422.6 L713.3 425.0 L709.8 427.0 L706.4 429.1 L703.3 431.6 L700.4 434.3 L697.3 436.8M716.7 478.2 L714.8 481.7 L712.3 484.8 L711.0 486.3M701.7 522.0 L701.4 526.0 L701.2 530.0 L700.5 533.9 L699.2 537.7 L698.5 539.6M716.4 510.1 L716.1 514.0 L715.1 517.9 L713.7 521.6 L712.2 525.4 L711.2 529.2M747.5 520.4 L748.2 524.4 L749.7 528.1 L751.3 531.8 L752.5 535.6M728.5 477.2 L728.0 481.1 L727.9 485.1 L728.5 489.1 L729.7 492.9M719.6 514.8 L719.5 518.8 L719.7 522.8M665.7 405.0 L662.2 403.0 L659.0 400.7 L655.7 398.4 L652.1 396.8M698.0 519.6 L697.2 523.5 L695.8 527.3 L694.0 530.9 L692.4 534.5 L691.4 538.4 L691.3 542.4M771.0 460.4 L772.8 464.0 L775.0 467.3 L776.4 468.7M665.4 482.1 L662.6 484.9 L659.7 487.7 L656.4 489.9 L652.8 491.6 L649.1 493.1M712.9 529.5 L713.0 533.5 L712.5 537.5 L711.6 541.3 L710.7 545.3 L710.5 549.2 L711.2 553.2M691.8 527.0 L689.9 530.5 L688.5 534.3 L688.0 538.3 L688.0 542.3 L687.9 546.3 L687.3 550.2M732.1 547.4 L732.6 551.4 L733.6 555.3 L734.6 559.1 L735.2 563.1M709.9 523.8 L708.7 527.6 L707.2 531.3 L706.1 535.1 L705.8 539.1 L706.2 543.1 L706.8 547.0M773.3 528.9 L774.4 532.7 L776.2 536.3 L778.4 539.7 L780.5 543.1 L781.9 546.8 L782.7 550.7M772.7 407.3 L776.7 407.7 L780.5 408.9 L784.2 410.5 L787.8 412.1 L791.7 413.1M756.0 432.1 L758.7 435.0 L761.9 437.4 L765.2 439.6 L768.3 442.2 L770.9 445.2M702.9 499.8 L701.3 503.5 L699.1 506.8 L696.7 510.0M696.5 495.6 L695.0 499.3 L693.1 502.8 L690.6 506.0 L687.9 508.9 L685.5 512.1M700.5 444.4 L697.8 447.3 L694.5 449.6 L690.8 451.1 L688.9 451.8M772.5 476.8 L775.0 479.9 L776.9 483.4M705.5 562.5 L705.7 566.5 L705.4 570.4M706.8 562.2 L706.5 566.2 L706.2 570.1 L706.4 574.1 L707.4 578.0 L708.2 579.8M677.3 474.9 L673.6 476.4 L670.1 478.5 L668.6 479.7M646.3 517.4 L643.7 520.4 L641.6 523.9 L639.9 527.5M685.7 484.1 L682.7 486.8 L680.2 489.9 L678.0 493.3 L675.7 496.5 L672.9 499.4M687.1 532.6 L686.0 536.4 L684.3 540.1 L682.7 543.7 L681.7 547.6 L681.5 551.6 L681.8 555.6M753.0 551.9 L754.1 555.7 L754.5 559.7 L754.4 563.7 L754.6 567.7M741.2 545.4 L742.2 549.3 L743.5 553.0 L744.6 556.9M692.5 548.7 L692.8 552.7 L693.4 556.6 L693.7 560.6 L693.4 564.6 L692.7 568.5 L692.3 572.5M662.9 498.6 L659.5 500.7 L656.1 502.8 L653.1 505.4 L650.6 508.6M759.1 434.4 L761.8 437.4 L764.0 440.7 L766.1 444.1 L767.3 445.7M675.1 551.5 L673.8 555.3 L672.4 559.0 L671.5 562.9 L671.3 566.9 L671.9 570.8M768.6 513.4 L770.2 517.1 L772.4 520.4 L774.6 523.8M699.1 527.7 L699.1 531.7 L698.9 535.7 L698.2 539.6 L697.6 541.5M755.7 425.5 L759.2 427.4 L762.6 429.5 L765.7 432.1 L767.0 433.6M658.2 432.5 L654.3 431.7 L650.3 431.2M656.2 550.8 L655.1 554.7 L654.8 558.7 L654.7 562.7M749.1 521.9 L750.6 525.6 L751.6 529.4 L751.8 533.4 L751.8 537.4 L752.2 541.4 L752.7 543.4M770.8 510.3 L771.7 514.2 L773.3 517.9 L775.5 521.3 L777.8 524.5M718.2 466.2 L716.1 469.6 L713.4 472.6 L710.6 475.4 L708.1 478.6 L706.2 482.1 L704.8 485.8M675.0 450.3 L671.1 451.1 L667.3 452.6 L663.8 454.4 L662.0 455.3M656.9 512.7 L654.5 515.9 L652.7 519.4 L650.9 523.0 L648.8 526.4M650.1 568.8 L648.8 572.6 L647.4 576.4 L646.7 580.3 L646.7 584.3 L647.3 588.2 L647.8 592.2M679.5 550.8 L678.2 554.5 L677.7 558.5 L678.0 562.5 L678.3 564.5M749.3 532.7 L749.2 536.7 L749.4 540.7 L750.2 544.6 L751.6 548.4 L753.2 552.1 L754.2 555.9M667.1 537.7 L666.6 541.7 L665.9 545.6M723.6 468.3 L721.1 471.5 L718.7 474.7 L716.8 478.2M693.2 549.9 L692.1 553.7 L691.2 557.6 L691.0 561.6 L691.2 563.6M721.8 504.6 L720.6 508.4 L719.0 512.0 L717.4 515.7 L716.4 519.6M712.0 513.3 L711.8 517.3 L711.3 521.3 L710.1 525.1 L708.6 528.8 L707.4 532.6M720.9 473.7 L719.0 477.2 L716.6 480.4 L714.0 483.5 L711.9 486.8 L711.0 488.7M777.7 441.3 L781.3 443.1 L784.7 445.3M687.6 531.8 L686.9 535.8 L686.8 539.8 L686.7 541.8M760.0 515.2 L762.0 518.6 L763.9 522.2 L765.1 526.0M759.2 471.2 L761.4 474.6 L762.9 478.3 L763.9 482.1 L765.0 486.0 L765.7 487.8M730.1 555.7 L729.6 559.6 L729.0 563.6 L728.9 567.6 L729.6 571.5 L730.1 573.4M736.3 457.9 L736.4 461.9 L736.6 465.9 L737.4 469.8 L738.9 473.5 L740.6 477.1 L741.8 480.9M702.3 561.1 L701.7 565.0 L701.4 569.0 L701.9 573.0M687.5 564.1 L688.2 568.1 L688.3 572.0 L687.8 576.0 L687.4 580.0 L687.5 584.0 L688.4 587.9M646.1 551.6 L644.3 555.2 L642.4 558.7 L640.7 562.3 L639.8 566.2M670.1 527.6 L668.5 531.2 L666.4 534.6 L664.2 537.9 L662.3 541.5 L661.2 545.3 L660.8 549.3M694.8 497.6 L692.7 500.9 L690.0 503.9 L688.6 505.3M700.6 468.4 L697.4 470.9 L694.1 473.0 L690.9 475.4 L688.2 478.3 L687.0 480.0M734.6 472.8 L736.1 476.6 L737.1 480.4 L737.5 484.4 L737.3 488.4 L737.3 492.4 L737.9 496.3M715.1 541.1 L715.2 545.1 L716.1 549.0 L717.1 552.8 L717.8 556.8 L717.9 560.8 L717.8 562.8M665.8 545.8 L665.6 549.8 L665.1 553.8 L664.0 557.7 L662.6 561.4 L661.8 563.2M667.6 552.2 L667.5 556.2 L666.9 560.2 L665.8 564.0M698.9 530.0 L698.8 534.0 L698.9 538.0 L698.6 542.0 L697.6 545.8 L696.5 549.7 L696.0 551.6M735.9 536.4 L737.1 540.2 L738.2 544.1 L738.5 548.0M732.9 441.3 L734.1 445.1 L735.9 448.7 L736.8 450.5M692.5 430.9 L688.5 431.3 L684.6 431.8 L680.7 432.9 L677.0 434.4 L675.2 435.1M775.1 571.2 L777.0 574.7 L778.3 578.5M755.3 509.8 L755.6 513.8 L756.0 517.8 L756.8 521.7 L758.4 525.4M717.4 502.3 L715.6 505.8 L714.5 509.7 L714.1 513.6 L713.9 517.6 L713.4 521.6 L712.2 525.4M698.9 533.8 L699.0 537.8 L698.8 541.8 L698.0 545.7 L696.8 549.6 L696.0 553.5 L695.8 555.5M725.5 419.4 L726.9 423.2 L728.2 426.9 L729.0 430.8 L729.1 434.8M726.5 438.7 L726.8 442.6 L727.9 446.5 L729.2 450.3M656.1 417.0 L652.1 416.9 L648.1 416.7 L646.1 416.3M680.8 545.9 L679.3 549.6 L678.5 553.5 L678.4 557.5 L678.9 561.4M750.3 445.8 L751.9 449.5 L754.2 452.8 L756.8 455.8 L759.4 458.8 L761.5 462.2M763.6 406.6 L767.2 408.4 L770.9 409.7 L774.9 410.4 L778.9 410.6 L782.8 411.0 L784.8 411.4M710.2 471.2 L708.0 474.6 L706.3 478.2M721.1 557.0 L721.0 561.0 L720.9 565.0 L721.4 569.0 L722.6 572.8 L723.5 574.6M700.0 556.1 L699.3 560.1 L699.3 564.1 L699.6 566.0M678.7 555.6 L677.4 559.4 L676.6 563.3 L676.5 567.3 L677.2 571.2 L677.9 575.2 L678.2 579.1M676.7 409.3 L672.9 408.2 L668.9 407.6 L664.9 407.2 L661.0 406.3 L657.4 404.6M701.4 467.0 L699.0 470.2 L696.1 473.0 L692.8 475.2M733.8 439.2 L735.2 442.9 L737.1 446.5 L738.9 450.0M752.4 494.7 L754.3 498.2 L756.2 501.7 L757.6 505.5 L758.2 509.4 L758.6 513.4 L758.9 515.4M696.7 427.1 L692.8 427.6 L688.8 428.1 L684.9 429.1 L681.2 430.5 L679.4 431.3M691.2 556.1 L691.2 560.1 L691.9 564.1 L692.8 568.0 L693.3 571.9 L693.2 575.9 L693.0 577.9M777.3 552.8 L779.4 556.2 L781.3 559.7M674.5 500.4 L671.9 503.4 L668.8 506.0 L665.7 508.5 L662.9 511.3 L660.7 514.7 L659.9 516.5M645.4 497.7 L641.8 499.3 L638.3 501.2 L635.2 503.8 L632.5 506.8M703.9 497.1 L702.1 500.7 L699.7 503.9 L697.2 507.0 L695.1 510.4 L693.8 514.2 L693.3 516.1M677.8 566.6 L677.1 570.5 L677.1 574.5 L677.8 578.5 L678.8 582.3 L679.3 584.3M668.3 564.5 L668.1 568.5 L667.2 572.4 L666.2 576.3 L665.6 580.2 L665.8 584.2M679.4 542.7 L677.9 546.5 L676.3 550.1 L675.2 554.0 L674.9 557.9 L675.3 561.9 L675.5 563.9M707.3 476.4 L705.3 479.9 L703.7 483.5 L702.9 485.4M730.9 484.3 L730.4 488.3 L730.3 492.3 L730.9 496.2 L732.0 500.1 L733.2 503.9M681.7 483.7 L678.4 485.9 L674.9 487.8 L671.6 490.2M685.0 513.7 L683.9 517.6 L682.9 521.4 L681.4 525.1M704.8 536.5 L703.6 540.3 L702.9 544.3 L703.0 548.3 L703.7 552.2 L704.5 556.1 L704.6 560.1M694.5 520.1 L694.0 524.1 L693.3 528.0 L691.9 531.8 L690.2 535.4 L689.3 537.2M652.3 485.0 L649.3 487.7 L646.2 490.1 L642.6 492.0 L638.9 493.4 L637.0 494.0M758.6 407.1 L762.5 408.1 L766.5 408.5 L770.5 408.7 L774.4 409.5 L778.1 411.0 L781.7 412.9M665.8 502.2 L663.5 505.5 L661.5 508.9 L659.4 512.3 L656.7 515.3 L653.7 518.0 L650.7 520.6M655.7 528.8 L653.3 532.0 L651.7 535.6 L650.7 539.5 L649.7 543.4 L648.3 547.1M650.9 560.7 L650.5 564.7 L649.5 568.6 L648.1 572.3 L646.8 576.1 L646.2 580.0 L646.2 582.0M714.1 497.3 L712.3 500.8 L711.1 504.6 L710.6 508.6 L710.0 512.6M736.0 490.7 L735.8 494.6 L735.8 498.6 L736.6 502.6 L737.9 506.3M706.2 506.1 L704.1 509.5 L702.8 513.3 L702.2 517.2 L701.7 521.2 L700.9 525.1 L700.3 527.0M658.3 574.5 L658.6 578.5 L658.4 582.5 L657.6 586.4M680.0 566.1 L680.8 570.1 L681.4 574.0 L681.4 578.0 L680.9 582.0 L680.7 584.0M714.5 555.8 L715.7 559.6 L716.9 563.5 L717.6 567.4M762.5 437.4 L764.9 440.6 L767.0 444.0 L769.2 447.3M680.4 482.4 L678.0 485.6 L675.1 488.3 L671.7 490.5M662.3 506.8 L660.4 510.3 L658.3 513.7 L655.6 516.7 L652.6 519.3 L649.7 522.0M650.6 453.6 L646.8 454.7 L642.8 455.1 L638.8 454.8M768.0 531.5 L769.0 535.4 L770.8 538.9 L772.9 542.4 L773.8 544.1M659.0 512.2 L656.4 515.1 L654.3 518.5 L652.7 522.2 L650.8 525.7 L648.5 529.0 L645.8 531.9M732.1 506.0 L731.8 510.0 L732.2 514.0 L733.2 517.8 L734.4 521.6 L735.1 525.6 L735.2 527.6M650.1 570.6 L649.4 574.5 L649.5 578.5 L650.0 582.5 L650.3 586.5 L649.9 590.5M744.0 555.5 L745.3 559.3 L746.6 563.0 L747.5 566.9 L747.7 570.9 L747.6 572.9M770.6 425.1 L774.3 426.5 L778.1 427.8 L781.7 429.6 L783.4 430.7M707.9 490.9 L705.5 494.1 L703.7 497.7 L702.6 501.5 L701.6 505.4M753.0 446.4 L755.8 449.3 L758.3 452.4M688.1 502.4 L686.7 506.2 L685.1 509.8 L682.9 513.2 L680.4 516.3 L677.8 519.4" fill="none" stroke="#fff" stroke-width="1.0" opacity="0.85"/><path d="M691.6 527.0 L690.4 530.8 L690.0 534.8 L690.0 538.8 L689.6 542.7 L688.6 546.6M690.2 525.5 L688.2 529.0 L686.6 532.6 L686.1 534.6M673.6 462.3 L670.2 464.4 L667.0 466.8 L663.6 469.0 L660.0 470.6 L656.1 471.5M670.9 531.4 L669.1 535.0 L668.1 538.9 L667.6 542.8 L667.1 546.8 L666.6 548.7M703.3 487.2 L701.8 490.9 L700.3 494.6 L698.3 498.1 L695.8 501.2 L693.1 504.1 L690.7 507.4M715.6 538.8 L716.4 542.7 L717.0 546.6 L717.1 550.6 L716.7 554.6 L716.4 558.6 L716.4 560.6M656.3 457.9 L652.6 459.4 L648.7 460.2 L644.7 460.3 L640.7 460.2 L636.8 460.6 L632.9 461.7M651.9 551.0 L650.0 554.5 L648.9 558.4 L648.6 562.3 L648.5 566.3M680.9 500.3 L678.9 503.7 L676.3 506.8 L673.3 509.5 L670.4 512.2M699.1 429.4 L695.8 431.7 L692.2 433.5 L690.3 434.0M775.1 484.9 L776.8 488.5 L779.1 491.7 L781.9 494.7M712.8 506.4 L710.9 510.0 L709.7 513.8 L709.3 517.8 L709.1 521.8 L708.7 525.7 L707.6 529.6M716.9 510.3 L715.1 513.9 L713.6 517.6 L713.2 519.5M706.8 479.8 L704.6 483.0 L701.8 485.9 L698.8 488.6 L696.2 491.7M708.0 449.8 L705.7 453.0 L702.8 455.8 L701.1 456.9M710.3 513.8 L710.0 517.8 L709.8 521.8 L709.1 525.7 L707.8 529.5M684.7 520.2 L683.8 524.1 L682.6 527.9 L680.7 531.5 L678.7 534.9 L677.0 538.5 L676.4 540.4M776.5 450.3 L779.6 452.8 L782.3 455.8 L784.5 459.1 L786.7 462.4 L789.4 465.3 L792.6 467.7M662.8 529.7 L661.2 533.4 L660.2 537.3 L659.4 541.2 L658.2 545.0 L656.4 548.6 L654.4 552.1M694.2 564.9 L694.1 568.9 L694.7 572.9 L696.0 576.7 L697.2 580.5M696.0 427.7 L692.2 428.8 L688.5 430.4 L684.9 432.2 L681.2 433.7M775.1 523.5 L776.1 527.4 L776.8 531.3 L777.8 535.2 L778.6 537.0M660.5 492.0 L657.9 495.1 L655.2 498.0 L652.0 500.4 L648.5 502.3 L645.0 504.2 L643.3 505.3M704.8 480.2 L702.8 483.6 L701.3 487.3 L699.6 490.9 L698.5 492.6M709.6 551.7 L709.3 555.7 L709.9 559.6M705.2 553.8 L706.1 557.7 L706.5 561.7 L706.4 565.7M728.3 469.2 L729.4 473.1 L729.9 477.0 L729.8 481.0 L729.3 485.0 L729.1 489.0M676.0 535.9 L674.0 539.4 L672.3 542.9 L671.2 546.8M762.0 405.4 L766.0 405.7 L770.0 405.7 L773.9 406.1 L777.8 407.2 L781.5 408.8 L785.2 410.3M717.2 488.1 L716.4 492.0 L715.4 495.8M689.4 470.8 L685.9 472.8 L682.3 474.6 L679.0 476.7 L676.1 479.5 L673.5 482.5 L672.1 484.0M660.9 561.0 L659.7 564.8 L659.3 568.8 L659.6 572.7 L659.9 574.7M662.0 563.3 L662.2 567.3 L661.9 571.3M654.0 530.0 L651.3 533.0 L648.9 536.2 L647.2 539.8 L646.2 543.7 L645.4 547.6 L644.2 551.4M727.6 567.7 L726.9 571.6 L726.5 575.6 L726.8 579.6 L727.7 583.5 L728.5 587.4 L728.8 591.4M658.7 480.3 L654.8 481.4 L651.0 482.7 L647.5 484.6M722.9 534.1 L722.2 538.1 L722.2 542.1 L722.6 544.0M660.0 445.8 L656.2 447.1 L652.4 448.4 L650.4 448.9M649.1 416.0 L645.6 414.1 L642.0 412.4M675.4 527.9 L674.5 531.8 L673.9 535.8 L673.0 539.7 L671.5 543.4M684.1 571.9 L685.0 575.8 L686.1 579.7 L686.5 581.6M744.1 532.2 L745.6 535.9 L746.7 539.8 L747.1 543.8 L746.9 547.8 L746.8 551.8M672.3 546.6 L671.6 550.5 L670.3 554.3 L669.5 556.2M650.7 490.9 L647.1 492.5 L643.3 493.9 L639.7 495.6M734.4 550.0 L734.9 553.9 L735.9 557.8 L737.1 561.6 L737.7 565.6 L737.5 569.6 L737.3 571.5M689.0 472.5 L686.5 475.6 L684.0 478.8M680.8 429.1 L676.8 429.1 L672.9 428.5 L668.9 428.2 L664.9 428.4 L661.0 429.1 L659.0 429.5M678.7 493.5 L675.5 495.9 L672.7 498.7 L671.5 500.3M725.9 469.3 L726.9 473.2 L728.0 477.1 L728.5 481.0 L728.3 485.0M760.1 416.0 L763.2 418.5 L766.3 421.1 L769.6 423.2 L773.3 424.7 L777.1 425.9 L779.0 426.5M708.9 532.5 L707.8 536.3 L707.5 540.3 L707.9 544.3M650.1 567.2 L648.8 571.0 L647.4 574.7 L646.5 578.6 L646.4 582.6 L647.0 586.6 L647.3 588.6M696.7 537.7 L695.4 541.5 L695.0 545.5 L695.1 547.5M691.3 550.5 L690.8 554.4 L689.8 558.3 L688.9 562.2 L688.7 566.2 L688.9 568.2M774.2 567.1 L775.5 570.9 L777.4 574.4 L778.4 576.1M687.3 480.4 L684.0 482.6 L680.6 484.7 L677.4 487.1 L674.7 490.1 L672.4 493.3 L671.3 495.0M739.4 462.3 L740.4 466.2 L742.1 469.8 L743.9 473.4 L745.4 477.1M652.7 486.0 L649.4 488.2 L645.7 489.8 L643.8 490.5M704.9 558.9 L704.4 562.8 L704.5 566.8 L705.4 570.7 L706.8 574.4M742.4 533.4 L742.4 537.4 L743.2 541.3M691.9 526.3 L690.8 530.1 L690.5 534.1 L690.4 538.1 L689.9 542.1 L688.7 545.9M662.6 556.1 L662.0 560.1 L660.9 563.9 L659.5 567.7 L658.4 571.5 L658.2 573.5M777.1 434.5 L779.8 437.5 L782.8 440.1M675.1 502.6 L672.9 505.9 L670.2 508.9 L667.2 511.5 L664.3 514.2 L661.9 517.4M703.6 551.8 L704.2 555.8 L704.2 559.8 L703.7 563.7 L703.3 567.7 L703.6 571.7 L704.1 573.7M702.2 554.0 L702.4 558.0 L703.4 561.9 L704.5 565.8 L705.2 569.7 L705.2 573.7M730.9 538.6 L730.3 542.5 L730.1 546.5 L730.5 550.5 L731.0 552.4M671.3 535.4 L669.2 538.7 L667.4 542.3 L666.5 546.2 L666.2 550.2 L666.0 554.2 L665.4 558.1M688.6 508.2 L687.3 512.0 L685.6 515.6M697.2 575.2 L697.2 579.1 L697.0 583.1 L697.2 587.1 L698.1 591.0 L699.8 594.7 L700.7 596.4M675.4 549.3 L675.5 553.3 L675.6 557.3 L675.1 561.3 L674.0 565.1 L673.4 567.0M719.8 517.7 L719.9 521.7 L720.2 525.7 L720.1 529.7 L719.8 531.7M650.2 499.9 L646.6 501.7 L643.1 503.6 L639.9 506.1 L637.3 509.1 L634.9 512.3 L633.6 513.8M760.2 527.8 L761.4 531.6 L763.1 535.2 L765.0 538.7 L766.5 542.5 L767.2 546.4M653.5 506.3 L651.3 509.7 L648.8 512.8 L647.3 514.1M682.7 540.8 L682.7 544.8 L682.3 548.8 L681.3 552.7 L680.6 554.6M669.3 574.3 L668.4 578.2 L668.4 582.2 L669.1 586.1M650.9 482.4 L647.6 484.5 L643.9 486.0 L640.0 487.0 L636.2 488.1M669.2 472.1 L665.4 473.2 L661.6 474.4 L658.0 476.2 L654.7 478.5 L653.2 479.8M695.0 563.0 L695.3 567.0 L696.3 570.9 L697.5 574.7 L698.2 578.6 L698.4 582.6M671.0 487.2 L668.0 489.8 L664.6 491.9 L661.0 493.7 L659.3 494.7M726.9 569.9 L727.8 573.8 L728.1 577.8 L727.7 581.8 L726.9 585.7 L726.5 589.7 L726.8 593.7M729.0 490.5 L730.1 494.3 L731.2 498.2 L731.8 502.1 L731.6 506.1 L731.1 510.1M645.8 452.6 L642.0 453.9 L638.1 455.0 L634.2 455.5 L630.2 455.2 L626.2 454.6 L624.2 454.3M694.1 520.5 L692.3 524.1 L690.2 527.5 L688.6 531.2 L688.1 533.1M661.0 555.7 L660.2 559.6 L660.2 563.6 L660.4 567.6 L660.2 571.6 L659.4 575.5 L658.9 577.4M648.5 485.0 L645.2 487.4 L641.6 489.0M656.6 540.6 L654.7 544.2 L653.7 548.0M676.8 550.1 L675.8 554.0 L675.6 558.0 L676.0 562.0 L676.2 563.9M694.9 416.7 L691.0 417.7 L687.2 418.8 L683.2 419.5 L679.2 419.2 L675.3 418.2M758.9 484.3 L760.9 487.8 L762.2 491.6 L762.6 493.5M682.9 545.5 L681.4 549.2 L680.3 553.0 L680.1 557.0 L680.6 561.0 L681.1 564.9M682.5 473.4 L679.1 475.6 L675.5 477.2M765.0 504.4 L765.7 508.3 L766.7 512.2 L768.4 515.8 L770.5 519.2 L772.7 522.6M647.6 504.1 L644.4 506.5 L640.9 508.4 L637.4 510.5 L635.9 511.7M714.3 515.4 L712.6 519.1 L711.1 522.8 L710.5 524.7M716.3 518.9 L715.8 522.8 L716.0 526.8 L716.1 528.8M718.3 421.9 L715.4 424.7 L712.1 426.9 L708.7 429.0 L707.0 430.1M652.8 579.0 L653.3 583.0 L653.8 586.9 L653.6 590.9 L652.9 594.9 L652.5 596.8M693.8 524.2 L693.2 528.1 L692.2 532.0 L690.6 535.6 L688.9 539.3 L687.8 543.1 L687.5 547.1M671.2 516.5 L668.9 519.8 L666.2 522.7 L663.6 525.8 L662.5 527.5M671.4 517.5 L669.6 521.1 L668.4 524.9 L667.2 528.7 L666.5 530.6M722.5 466.4 L719.9 469.5 L717.5 472.7 L715.7 476.2M732.6 407.3 L735.1 410.4 L737.1 413.9 L739.1 417.4 L741.5 420.5 L744.5 423.2 L747.6 425.7M698.5 476.7 L695.5 479.3 L693.1 482.5 L692.0 484.2M654.3 570.7 L653.1 574.5 L651.9 578.4 L651.4 582.3 L651.7 586.3 L652.5 590.2 L653.0 594.2M712.5 418.6 L708.8 420.2 L705.0 421.5 L701.4 423.1M693.8 491.2 L691.8 494.6 L690.2 498.3 L688.4 501.9 L686.1 505.2 L684.8 506.6M715.3 523.9 L714.4 527.8 L714.3 531.8 L714.8 535.7 L715.3 539.7 L715.2 543.7 L714.7 547.7M767.3 455.3 L770.1 458.2 L773.2 460.7 L776.1 463.4 L778.5 466.6 L780.4 470.1M656.9 464.6 L653.4 466.5 L649.6 467.8 L645.6 468.3 L641.6 468.6 L637.7 469.2 L635.8 469.8M724.3 434.7 L723.0 438.5 L721.8 442.3M710.8 557.9 L710.4 561.9 L710.1 565.9 L710.5 569.9 L711.7 573.7 L713.4 577.3 L714.1 579.2M723.1 410.3 L721.0 413.6 L718.1 416.4 L714.9 418.8 L711.8 421.3 L709.0 424.2 L706.3 427.1M664.8 526.4 L662.9 529.9 L661.8 533.7 L661.0 537.7M675.1 531.4 L672.9 534.7 L670.9 538.2 L669.6 542.0 L669.2 546.0M706.5 562.8 L706.9 566.7 L708.1 570.6 L708.9 572.4M758.6 511.7 L760.0 515.4 L762.0 518.9 L763.9 522.4 L765.3 526.2 L765.9 530.1 L766.3 534.1M683.6 555.0 L684.0 559.0 L683.8 563.0M716.3 520.7 L714.8 524.4 L714.0 528.3 L714.0 532.3 L714.5 536.3M757.9 427.9 L761.3 430.0 L764.8 431.9 L768.1 434.2 L770.9 437.0 L773.3 440.2 L774.5 441.8M712.7 564.3 L712.7 568.3 L713.6 572.2 L715.1 575.9 L716.8 579.6M683.2 486.8 L681.1 490.1 L678.7 493.4 L675.8 496.1 L672.6 498.5 L670.9 499.6M686.1 554.4 L686.6 558.3 L686.6 562.3 L686.0 566.3 L685.1 570.2 L684.8 574.2M686.6 499.9 L684.3 503.2 L681.5 506.1 L678.6 508.9 L676.1 512.0M702.4 578.1 L702.3 582.1 L702.5 586.1 L703.4 590.0 L705.1 593.7 L707.0 597.2 L708.5 600.9M707.1 520.4 L706.8 524.4 L706.9 528.4 L706.6 532.4 L705.8 536.3M732.5 457.4 L733.1 461.4 L734.4 465.2 L735.9 468.9 L737.1 472.7 L737.5 476.7M759.8 427.6 L762.4 430.7 L764.8 433.9 L767.5 436.8 L770.8 439.1M727.2 548.9 L727.7 552.9 L727.5 556.9 L726.8 560.8 L726.2 564.8 L726.3 568.8 L727.1 572.7M773.9 499.3 L776.4 502.5 L778.5 505.9 L779.9 509.6 L780.9 513.5M653.7 573.7 L654.2 577.7 L654.3 581.7 L653.9 585.7 L653.5 587.6M671.8 521.3 L669.3 524.4 L667.2 527.8 L665.9 531.6 L665.0 535.5 L664.1 539.4M754.8 473.8 L757.1 477.1 L758.8 480.7 L759.9 484.5 L760.7 488.5 L761.1 490.4M755.5 501.1 L756.0 505.0 L756.4 509.0 L757.4 512.9 L759.0 516.5 L761.0 520.0M736.0 567.8 L737.1 571.7 L738.0 575.6 L738.2 577.6M684.7 546.8 L683.4 550.6 L682.8 554.5 L683.0 558.5 L683.6 562.5 L683.9 566.4 L683.6 570.4M721.6 492.4 L720.7 496.3 L719.3 500.0 L717.3 503.5 L715.4 507.0 L714.1 510.8M724.5 534.8 L724.2 538.8 L724.8 542.8 L725.9 546.6 L726.6 550.6 L726.7 554.6 L726.1 558.5M649.1 416.2 L645.1 415.6 L641.4 414.2 L637.9 412.3M726.5 566.2 L726.4 570.2 L725.8 574.2 L725.4 576.1M668.1 423.7 L664.1 424.1 L660.1 423.7 L656.3 422.6 L652.5 421.2 L650.6 420.6M741.9 493.0 L742.2 497.0 L743.1 500.9 L744.7 504.6 L746.2 508.2 L747.3 512.1 L747.5 514.1M693.0 419.3 L689.2 420.5 L685.4 421.7 L681.4 422.3 L677.5 422.0 L673.6 421.1M736.5 502.7 L737.0 506.7 L736.8 510.6 L736.5 514.6 L736.5 516.6M727.1 506.7 L727.6 510.6 L728.6 514.5 L729.5 518.4 L729.8 522.4M720.4 490.8 L719.7 494.8 L718.7 498.6M740.0 544.3 L739.8 548.3 L740.3 552.3M768.3 464.0 L770.5 467.3 L772.1 470.9 L773.6 474.7 L775.5 478.2 L778.1 481.3M716.4 541.5 L715.6 545.4 L715.1 549.4 L715.3 553.4 L716.3 557.2 L717.0 559.1M665.7 576.3 L664.8 580.2 L664.1 584.1 L664.1 588.1 L664.9 592.0M673.1 438.6 L669.4 440.0 L665.6 441.4 L661.7 442.2 L657.7 442.2 L653.8 441.6 L649.8 441.3M675.3 547.3 L674.2 551.2 L674.0 555.2 L674.3 559.2 L674.5 563.2 L674.0 567.1 L673.6 569.1M729.2 561.5 L728.6 565.4 L728.0 569.4 L727.8 571.4M668.3 492.8 L665.5 495.7 L662.3 498.0 L658.8 500.0 L655.5 502.2 L654.0 503.5M681.4 567.8 L680.5 571.7 L680.2 575.7 L680.6 579.7 L681.7 583.5 L682.8 587.3 L683.5 591.3M649.3 476.0 L645.9 478.1 L642.6 480.4 L640.8 481.4M691.8 535.5 L690.4 539.2 L689.8 543.1 L689.9 547.1 L690.1 549.1M704.6 522.9 L703.0 526.6 L702.2 530.5 L702.2 534.5 L702.5 538.5M679.2 529.3 L677.1 532.8 L675.1 536.2 L673.7 539.9 L673.3 541.9M730.1 431.8 L731.6 435.5 L732.5 439.4 L732.8 443.4 L732.8 447.4 L733.3 451.3M742.7 482.3 L744.1 486.1 L745.8 489.6 L747.4 493.3 L747.9 495.3M694.7 483.1 L692.8 486.6 L690.6 489.9M688.8 576.4 L689.2 580.4 L689.0 584.4 L688.7 588.4 L689.1 592.4 L690.2 596.2M647.4 533.1 L644.9 536.2 L643.0 539.7 L641.8 543.5 L641.4 545.4M712.3 537.6 L712.9 541.6 L713.0 545.6 L712.6 549.6 L711.9 553.5M705.5 555.3 L705.4 559.3 L706.1 563.3 L707.4 567.1M648.7 563.4 L647.6 567.3 L647.4 571.3 L647.6 575.3 L647.7 579.3 L647.2 583.2 L646.7 585.2M736.6 489.3 L738.0 493.0 L738.7 497.0 L738.8 499.0M728.4 554.5 L729.3 558.4 L729.8 562.3 L729.6 566.3 L728.9 570.2M665.2 496.7 L662.2 499.3 L659.7 502.4 L657.5 505.7 L655.1 508.9 L652.2 511.7 L650.6 512.9M671.2 560.8 L670.3 564.7 L669.1 568.5 L668.2 572.4 L668.2 576.4M662.0 418.3 L658.3 416.8 L654.5 415.6 L650.5 415.1M736.6 432.8 L737.7 436.6 L738.3 440.6 L739.0 444.5 L740.4 448.3 L742.3 451.7M690.4 567.7 L691.1 571.6 L691.3 575.6 L690.9 579.6 L690.6 583.6M694.9 533.5 L694.9 537.4 L694.9 541.4 L694.4 545.4 L693.3 549.3 L692.2 553.1 L691.6 557.1M683.6 495.9 L680.5 498.4 L677.7 501.3 L675.6 504.7 L673.9 508.3M712.3 465.9 L709.7 469.0 L707.8 472.5 L706.1 476.1 L704.2 479.6M770.8 517.9 L772.7 521.4 L775.0 524.7 L777.0 528.2 L778.4 531.9M775.6 511.9 L776.5 515.8 L777.5 519.7 L779.1 523.4 L781.2 526.7M713.4 556.4 L713.1 560.4 L713.5 564.3 L714.0 566.3M708.3 527.3 L708.5 531.3 L708.5 535.3" fill="none" stroke="#fff" stroke-width="0.5" opacity="0.85"/><path d="M649.3 514.7 L646.0 517.1 L643.0 519.8 L640.6 522.9 L638.8 526.5 L637.1 530.1 L636.1 531.9M715.4 513.8 L713.8 517.5 L712.9 521.4 L712.8 523.3M676.8 579.5 L677.6 583.5 L677.7 587.5 L677.5 589.5M683.8 520.4 L682.6 524.2 L682.0 528.1 L681.2 532.0 L679.8 535.8 L677.9 539.3M688.3 502.6 L685.6 505.6 L683.4 508.9 L682.5 510.7M692.7 514.7 L691.4 518.5 L689.5 522.0 L687.4 525.4 L686.3 527.1M770.1 524.2 L772.2 527.6 L774.3 531.0 L775.8 534.7 L776.7 538.6 L777.3 542.6 L777.7 544.5M650.2 564.5 L648.8 568.2 L648.1 572.2 L648.2 576.2 L648.6 580.2 L648.6 584.2 L648.0 588.1M680.2 494.3 L677.0 496.7 L673.8 499.2 L671.1 502.1 L669.0 505.5M702.3 469.2 L700.3 472.6 L698.1 476.0 L696.8 477.5M694.3 572.4 L694.9 576.4 L694.9 580.4 L694.7 584.3 L694.6 586.3M653.0 465.9 L649.0 466.7 L645.0 467.0 L641.1 467.4 L637.2 468.4 L633.5 470.0M681.3 539.9 L681.0 543.9 L681.0 547.9 L680.8 551.9 L679.9 555.8 L678.6 559.6M651.1 476.7 L647.2 477.5 L643.3 478.6 L639.7 480.3 L636.4 482.5 L633.0 484.6 L629.3 486.2M690.4 493.9 L687.5 496.7 L684.5 499.4 L681.7 502.2 L679.5 505.6 L677.9 509.2M763.2 410.8 L766.6 412.9 L770.0 415.0M656.4 482.8 L653.4 485.5 L650.3 488.0 L648.6 489.2M691.8 550.3 L691.1 554.2 L690.1 558.1 L689.3 562.0 L689.2 564.0M715.8 425.8 L712.7 428.3 L709.3 430.3 L705.8 432.4 L702.7 434.9 L699.9 437.7M707.6 469.1 L705.6 472.5 L703.8 476.1 L701.8 479.6 L700.6 481.1M735.0 573.9 L736.1 577.7 L736.8 581.7 L736.7 585.7 L736.2 589.6 L735.8 593.6 L736.1 597.6M671.8 556.1 L671.0 560.0 L671.0 564.0 L671.5 567.9 L671.8 571.9M711.2 551.7 L711.1 555.7 L710.6 559.7 L710.3 563.6 L710.8 567.6 L712.0 571.4 L713.6 575.1M756.2 433.9 L759.1 436.5 L762.4 438.8 L764.0 440.0M694.4 513.5 L692.3 516.9 L690.0 520.2 L688.1 523.7 L686.9 527.5 L686.5 531.5 L686.3 533.5M720.5 567.0 L720.7 571.0 L720.8 575.0 L721.4 579.0 L722.9 582.7M671.2 552.4 L671.3 556.4 L671.3 560.4 L670.6 564.4 L669.5 568.2M774.2 548.4 L774.9 552.3 L776.3 556.1 L777.2 557.8M686.7 443.4 L683.0 444.7 L679.5 446.7 L676.1 448.8 L672.5 450.5 L670.6 451.1M686.6 496.8 L683.8 499.7 L681.6 503.0 L680.0 506.7 L678.4 510.3M769.1 471.2 L771.3 474.6 L772.8 478.3M680.9 476.0 L677.3 477.7 L673.8 479.7 L670.7 482.3 L668.1 485.2 L665.3 488.1 L662.1 490.6M653.8 478.5 L650.4 480.6 L647.3 483.1 L644.0 485.3 L640.3 487.0 L636.5 488.1 L634.5 488.5M756.2 453.1 L757.5 456.8 L759.1 460.5 L761.4 463.8 L764.0 466.8M662.3 554.5 L662.2 558.5 L661.7 562.5M718.6 471.0 L716.0 474.0 L713.4 477.0 L711.3 480.4M749.6 487.5 L750.1 491.4 L750.4 495.4 L751.1 499.4 L752.5 503.1 L753.4 504.9M723.8 494.1 L723.2 498.1 L722.0 501.9M769.0 514.5 L769.7 518.4 L770.4 522.4 L771.7 526.2M721.8 496.7 L721.2 500.7 L720.0 504.5 L718.2 508.1 L716.4 511.7 L715.2 515.5M658.9 523.0 L657.5 526.7 L656.2 530.5 L654.5 534.1 L652.2 537.4 L649.8 540.6 L647.7 544.0M771.8 412.5 L775.7 413.0 L779.7 413.6 L783.5 414.9 L787.0 416.8 L788.7 417.8M683.2 518.9 L682.0 522.7 L680.2 526.3 L678.0 529.7 L675.9 533.1 L674.5 536.8 L674.0 538.7M645.8 525.0 L643.5 528.3 L640.8 531.2 L638.0 534.0 L635.5 537.2M739.5 489.6 L739.7 493.6 L740.5 497.5 L741.9 501.2 L743.4 504.9 L744.5 508.8 L744.7 510.8M686.1 513.1 L684.0 516.5 L682.7 520.2 L681.8 524.2 L680.9 528.0 L680.2 529.9M665.1 536.2 L663.3 539.8 L661.2 543.2M697.9 442.3 L694.2 443.9 L690.8 446.0 L687.7 448.5 L684.5 451.0 L681.0 452.8M679.8 522.1 L677.4 525.4 L675.1 528.6 L673.4 532.2 L672.4 536.1 L672.1 538.1M765.2 507.6 L767.4 511.0 L769.2 514.6 L770.3 518.4 L770.9 522.4 L771.7 526.3M763.3 576.1 L763.6 580.1 L764.5 584.0M704.7 426.7 L700.8 427.8 L697.0 429.0M764.9 575.8 L765.4 579.8 L765.5 583.8 L765.7 587.8 L766.7 591.7 L767.4 593.5M660.9 492.2 L657.3 494.0 L653.7 495.8 L650.5 498.1 L647.8 501.1 L645.3 504.2 L642.5 507.1M667.5 506.7 L665.0 509.8 L663.1 513.3 L661.4 516.9 L659.4 520.4 L656.9 523.5 L655.5 524.9M654.6 542.8 L653.9 546.7 L653.3 550.7 L652.2 554.5 L650.5 558.1 L648.7 561.7 L647.4 565.5M695.6 557.1 L694.8 561.0 L694.5 565.0M681.1 554.9 L680.2 558.8 L679.0 562.7 L678.2 566.6M650.2 560.2 L648.5 563.8 L647.1 567.6 L646.6 569.5M665.8 530.0 L664.9 533.8 L663.7 537.7 L662.0 541.3 L659.9 544.7 L658.0 548.2 L656.8 552.0M732.5 571.4 L732.8 575.4 L733.7 579.3 L734.2 581.2M711.8 555.9 L711.4 559.8 L711.1 563.8 L711.5 567.8 L712.7 571.6M662.0 450.1 L658.2 451.5 L654.5 453.1M677.1 539.5 L675.4 543.2 L674.4 547.0 L674.2 551.0 L674.3 553.0M681.1 491.7 L677.9 494.2 L674.6 496.4 L671.5 499.0 L670.2 500.5M647.9 507.3 L644.5 509.4 L641.1 511.6 L638.1 514.3 L635.7 517.5 L633.7 520.9M679.8 459.3 L676.6 461.7 L673.0 463.5 L669.2 464.6 L665.3 465.4M729.2 549.9 L730.3 553.7 L731.1 557.6 L731.3 559.6M671.7 527.9 L670.4 531.6 L669.6 535.6M650.6 572.4 L650.7 576.4 L650.1 580.4 L649.1 584.2M667.0 513.9 L664.8 517.3 L662.1 520.2 L659.3 523.0 L658.0 524.5M755.7 506.3 L757.4 509.9 L758.5 513.7 L758.9 517.7 L759.3 521.7 L760.2 525.6 L761.8 529.3M698.2 487.4 L696.1 490.8 L694.5 494.4 L693.7 496.3M677.0 469.5 L673.8 471.8 L670.1 473.5 L666.3 474.7 L662.6 476.1M706.4 533.9 L705.6 537.8 L704.5 541.6 L703.5 545.5 L703.2 549.5 L703.8 553.4 L704.2 555.4M726.0 450.7 L726.7 454.7 L726.6 458.7 L726.0 462.6 L725.6 466.6 L725.6 468.6M726.2 535.9 L725.4 539.8 L724.9 543.8 L725.3 547.7M662.8 550.9 L662.4 554.9 L661.5 558.8 L660.0 562.5 L658.6 566.2 L657.8 570.2 L657.9 574.2M707.2 565.7 L708.2 569.5 L708.7 573.5 L708.6 577.5 L708.7 581.5 L709.4 585.4 L711.0 589.1M667.6 499.8 L665.1 502.9 L663.0 506.3 L660.9 509.7 L658.4 512.8 L655.4 515.5M649.8 543.5 L648.4 547.3 L647.7 551.2 L647.2 555.2 L646.3 559.1 L644.9 562.8 L643.1 566.4M662.0 470.0 L658.7 472.4 L655.2 474.2 L651.3 475.4 L647.4 476.1 L643.5 477.0 L641.6 477.7M694.6 511.9 L692.3 515.2 L690.4 518.7 L689.3 522.5 L689.0 524.5M720.9 541.7 L720.3 545.6 L720.5 549.6 L721.5 553.5 L722.2 555.4M656.5 476.8 L653.2 479.2 L649.6 480.9 L647.7 481.5M647.7 507.7 L645.1 510.8 L643.0 514.2 L640.7 517.4 L637.9 520.3M751.8 523.4 L751.9 527.4 L752.7 531.3 L754.1 535.1 L755.9 538.7 L757.2 542.4M712.9 525.0 L711.6 528.7 L710.9 532.7 L711.0 536.7 L711.6 540.6 L712.1 544.6 L712.0 546.6M702.6 536.2 L702.0 540.1 L700.9 543.9M703.4 549.9 L703.2 553.9 L702.5 557.8M695.7 521.4 L695.1 525.3 L694.1 529.2 L692.5 532.8 L690.7 536.5M776.5 424.8 L780.4 425.9 L784.2 427.1 L787.8 428.9 L791.0 431.3M739.8 407.0 L743.3 409.0 L747.0 410.3 L750.8 411.6 L754.5 413.3 L757.7 415.6M740.1 552.5 L740.9 556.4 L742.2 560.2 L743.3 564.0 L743.7 566.0M720.8 523.6 L720.2 527.5 L720.4 531.5 L721.1 535.5 L721.7 539.4M674.3 552.9 L672.8 556.6 L671.8 560.5 L671.5 564.4 L672.0 568.4M657.9 528.3 L655.5 531.5 L653.8 535.1 L652.7 539.0 L651.8 542.9 L650.5 546.7 L648.7 550.2M662.7 487.9 L659.2 489.8 L656.1 492.3 L653.4 495.3 L650.7 498.2 L649.2 499.5M694.3 561.5 L693.6 565.4 L693.0 569.4 L693.2 573.4 L694.3 577.2 L694.9 579.1M662.2 439.3 L658.2 439.6 L654.3 440.5 L650.4 441.5 L646.5 442.0M711.4 542.1 L711.2 546.1 L711.8 550.1 L712.9 553.9 L713.7 557.8 L713.9 561.8 L713.7 565.8M723.7 537.1 L724.5 541.0 L724.7 545.0 L724.4 549.0 L724.0 553.0 L724.3 556.9M708.9 541.8 L708.0 545.7 L707.7 549.7 L708.4 553.6 L709.4 557.5 L710.3 561.4 L710.5 565.4M719.5 523.7 L718.4 527.6 L717.2 531.4 L716.5 535.3 L716.5 537.3M721.7 421.7 L719.1 424.7 L716.8 428.0M684.5 561.6 L685.0 565.6 L685.9 569.5 L686.5 573.4 L686.5 577.4 L686.0 581.4 L685.8 583.4M668.6 480.2 L665.6 482.8 L662.1 484.9 L658.4 486.4 L654.7 487.8 L651.2 489.8 L648.2 492.4M737.7 540.2 L738.8 544.1 L739.2 548.1 L739.0 552.1M694.8 539.8 L695.0 543.8 L695.3 547.8 L695.2 551.8 L694.9 553.8M730.8 515.4 L732.0 519.2 L732.7 523.2 L732.9 525.1M646.1 471.3 L642.2 471.9 L638.2 472.3 L634.2 472.9 L630.5 474.3 L626.9 476.0 L623.3 477.7M694.7 515.2 L693.8 519.1 L693.2 523.0 L692.3 526.9 L690.9 530.6M697.8 526.5 L696.1 530.1 L695.0 533.9 L694.7 537.9 L694.9 541.9 L694.9 545.9 L694.7 547.9M674.8 506.6 L671.8 509.2 L669.0 512.1 L666.8 515.4 L665.2 519.1 L663.8 522.8M769.7 555.3 L770.3 559.2 L770.6 563.2 L771.2 567.2 L772.4 571.0 L774.3 574.5 L775.2 576.3M717.5 472.0 L715.9 475.7 L714.7 479.5M697.4 460.1 L694.6 463.0 L691.3 465.3M774.7 579.5 L775.4 583.4 L776.9 587.1 L778.7 590.6 L780.5 594.2 L781.2 596.1M725.2 501.4 L725.4 505.4 L726.2 509.3M702.4 554.0 L703.3 557.9 L704.1 561.8 L704.5 565.8 L704.3 569.8 L704.0 573.8 L704.3 577.7M701.3 490.4 L698.6 493.3 L695.7 496.2 L693.3 499.3 L691.5 502.9 L690.2 506.7M757.0 477.2 L758.5 480.9 L760.6 484.3 L762.9 487.6 L764.0 489.2M766.8 502.6 L769.0 505.9 L771.3 509.2M687.5 527.3 L685.9 530.9 L683.9 534.4 L682.3 538.1M733.8 487.8 L733.8 491.8 L733.4 495.8 L733.3 499.8 L733.9 503.7 L735.1 507.6 L736.3 511.4M724.6 547.5 L724.2 551.5 L724.0 555.5 L724.5 559.4 L725.5 563.3 L726.4 567.2 L726.8 569.2M652.6 560.0 L652.4 564.0 L651.6 567.9 L650.3 571.7M717.4 541.1 L717.9 545.0 L718.9 548.9 L719.9 552.8 L720.2 554.8M718.7 570.0 L719.6 573.9 L719.9 577.9 L720.2 581.9 L721.0 585.8 L721.7 587.6M741.0 435.4 L743.5 438.6 L745.8 441.8 L747.5 445.4 L748.6 449.3M688.5 518.2 L686.4 521.6 L684.2 524.9 L682.3 528.4 L681.1 532.2 L680.7 536.2 L680.5 538.2M723.3 528.6 L723.0 532.5 L723.5 536.5 L724.4 540.4M773.9 428.1 L777.6 429.6 L781.4 430.9M733.3 527.5 L734.2 531.4 L735.4 535.2 L735.9 537.1M653.8 571.9 L653.9 575.9 L653.3 579.9 L652.3 583.8 L651.4 587.7 L651.1 591.6 L651.3 593.6M730.4 513.3 L731.4 517.2 L731.8 521.1 L731.7 523.1M668.4 454.4 L664.6 455.6 L660.6 456.2 L656.6 456.3 L652.7 456.8 L648.8 457.9 L645.1 459.5M737.2 443.4 L739.0 447.0 L740.2 450.8 L740.8 454.7 L741.2 458.7 L742.1 462.6 L743.6 466.3M698.8 450.4 L695.5 452.6 L691.9 454.2M665.8 545.4 L664.0 549.0 L662.2 552.6 L661.5 554.4M649.2 515.6 L646.3 518.5 L643.2 520.9M775.9 432.6 L779.5 434.4 L783.2 435.8 L786.8 437.5 L790.1 439.8 L793.0 442.5M676.8 483.2 L673.2 485.0 L669.9 487.2 L667.0 490.0M702.3 548.1 L701.7 552.1 L701.8 556.1M713.4 490.2 L711.0 493.3 L708.9 496.7M714.1 478.4 L712.0 481.8 L710.5 485.5M731.4 455.0 L731.5 459.0 L732.4 462.9 L733.8 466.6 L735.2 470.4 L736.0 474.3 L736.1 476.3M697.6 510.6 L695.8 514.1 L693.6 517.5 L691.4 520.8M711.4 523.5 L709.9 527.2 L708.6 531.0M670.1 527.5 L668.7 531.2 L667.9 535.2 L667.1 539.1M685.0 547.1 L683.8 550.9 L683.3 554.9 L683.7 558.9 L684.0 560.9M658.5 566.6 L657.5 570.4 L656.3 574.2 L655.7 576.1M735.3 491.3 L736.1 495.2 L737.4 499.0M645.6 432.2 L641.6 432.7 L637.6 432.5 L633.7 431.6 L630.0 430.2 L626.2 428.8 L622.3 428.1M707.4 517.2 L706.5 521.1 L706.4 525.1 L706.3 529.1 L706.2 531.1M646.0 499.3 L643.2 502.2 L640.1 504.7 L636.6 506.7 L633.0 508.5M665.4 431.1 L661.4 430.7 L657.5 429.8 L653.6 428.9 L649.6 428.6 L645.6 428.9 L641.6 429.2M667.8 506.6 L665.9 510.1 L663.9 513.5 L661.3 516.6 L658.4 519.4 L655.6 522.2 L654.3 523.7M682.9 533.5 L682.6 537.5 L682.2 541.5 L681.2 545.4 L679.7 549.1 L679.0 550.9M656.2 515.7 L654.5 519.3 L652.4 522.7 L649.8 525.7 L646.9 528.5 L644.3 531.5 L642.2 534.9M774.0 568.6 L775.8 572.1 L776.9 576.0M691.7 559.7 L692.6 563.6 L693.3 567.6 L693.3 571.5M666.7 549.0 L666.4 553.0 L665.5 556.9 L664.1 560.6 L662.7 564.4 L662.2 566.3M648.7 509.8 L646.1 512.9 L644.0 516.3 L641.9 519.7 L639.4 522.8 L636.4 525.4M733.0 571.4 L732.8 575.4 L732.2 579.4 L732.0 581.4M683.4 519.7 L682.5 523.6 L681.2 527.4 L679.3 530.9 L677.2 534.3 L676.3 536.0M719.6 542.5 L720.5 546.3 L721.6 550.2 L722.1 554.2 L722.1 556.2M712.6 575.6 L713.2 579.6 L713.4 583.6 L713.7 587.5M719.4 569.5 L720.5 573.3 L721.1 577.3 L721.3 581.2 L721.9 585.2 L722.5 587.1M717.2 480.4 L716.1 484.2 L714.5 487.9M737.2 535.3 L737.4 539.3 L738.2 543.2 L739.5 547.0 L740.6 550.8M709.2 413.7 L705.5 415.2 L701.9 417.0 L698.3 418.8 L694.6 420.1M669.6 520.8 L668.4 524.6 L666.8 528.3 L665.9 530.0M701.7 457.2 L699.1 460.3 L696.0 462.8 L692.5 464.7M698.7 573.6 L699.9 577.4 L701.3 581.2 L702.4 585.0 L702.8 589.0 L702.9 593.0 L703.4 597.0M752.2 430.8 L754.6 434.1 L757.4 436.8 L760.6 439.2 L763.8 441.7 L766.4 444.7 L767.6 446.3M769.4 547.7 L771.2 551.2 L772.4 555.0 L773.0 559.0M761.3 570.1 L761.4 574.1 L761.5 578.1 L762.1 582.0 L763.4 585.8 L765.1 589.4 L765.9 591.3M722.4 572.7 L723.2 576.6 L724.9 580.3 L726.3 583.9 L726.9 587.9 L726.8 591.9 L726.5 593.9M662.9 439.8 L658.9 439.4 L654.9 439.3 L651.0 439.9 L647.1 440.8 L643.1 441.4 L639.1 441.3M682.6 467.9 L679.8 470.8 L676.6 473.2 L673.1 475.0 L669.3 476.4 L667.4 477.1M653.3 474.6 L650.0 477.0 L646.5 478.9 L642.7 480.1M684.2 470.9 L681.2 473.6 L677.9 475.8 L674.2 477.4 L672.3 478.1M732.1 537.7 L732.9 541.6 L733.0 545.6 L732.5 549.5 L732.0 553.5 L732.1 557.5 L732.4 559.5M669.6 549.4 L669.0 553.4 L669.1 557.4 L669.2 561.4M736.4 565.9 L736.1 569.9 L736.6 573.9 L737.6 577.7 L738.7 581.5 L739.4 585.5M679.2 472.9 L676.3 475.7 L673.5 478.6 L670.5 481.2M712.5 557.1 L712.3 561.1 L711.9 565.1 L712.0 567.1M744.6 472.7 L746.3 476.3 L747.4 480.1 L747.8 484.1 L748.1 488.1 L748.9 492.0 L749.6 493.9M677.8 483.1 L675.1 486.1 L672.7 489.3 L670.0 492.3 L666.9 494.7 L663.4 496.8 L661.7 497.8M704.5 500.9 L702.2 504.2 L699.8 507.4 L697.9 510.9 L696.8 514.7 L696.2 518.7 L695.4 522.6M693.9 559.7 L694.8 563.6 L695.6 567.5 L695.9 571.5 L695.7 575.5 L695.3 579.5 L695.6 583.5M710.0 514.5 L709.5 518.4 L708.4 522.3 L706.8 526.0 L706.0 527.8M742.2 501.9 L742.8 505.8 L744.1 509.6 L745.7 513.3 L747.0 517.1M656.0 481.9 L652.6 484.0 L648.9 485.4 L645.0 486.5 L641.3 487.9 L637.8 489.9 L634.7 492.4M725.0 458.6 L724.9 462.6 L722.4 465.8 L720.0 468.9 L718.9 470.6" fill="none" stroke="#fff" stroke-width="1.5" opacity="0.85"/></g><g clip-path="url(#hc)"><path d="M704.0 488.0C705.7 489.7 710.7 494.3 714.0 498.0C717.3 501.7 721.0 506.0 724.0 510.0C727.0 514.0 730.7 520.0 732.0 522.0" fill="none" stroke="#fff" stroke-width="2.4" opacity="0.85"/><path d="M698.0 470.0C700.0 472.3 706.3 479.5 710.0 484.0C713.7 488.5 716.7 492.3 720.0 497.0C723.3 501.7 728.3 509.5 730.0 512.0" fill="none" stroke="#fff" stroke-width="1.2" opacity="0.8"/><path d="M676 563a5.5 6 0 1 0 .1 0M692 568a4 5 0 1 0 .1 0" fill="none" stroke="#fff" stroke-width="1.3" opacity="0.85"/></g><path d="M767.5 427.3q1.2 -0.7 2.4 -1.3M757.5 418.7q-0.6 -3.0 -0.3 -5.5M762.8 422.1q1.3 -2.5 2.7 -4.8M766.2 425.3q1.1 -0.3 2.0 -0.7M694.8 420.0q-0.4 -2.6 -1.3 -4.6M710.7 405.4q-1.4 -0.2 -2.4 -0.7M746.9 412.8q1.9 -0.0 3.1 -0.4M754.2 417.0q0.3 -1.3 0.8 -2.5M766.2 425.3q0.2 -1.8 0.7 -3.1M704.9 410.4q-2.1 -0.0 -3.5 -0.6M703.6 411.5q-1.7 -0.3 -2.9 -0.9M716.9 400.3q-0.8 -2.7 -1.6 -5.3M750.6 415.1q1.3 -0.8 2.2 -1.8M742.9 410.0q1.2 -1.8 2.5 -3.6M762.8 422.1q-0.4 -2.4 -0.1 -4.2M719.7 399.8q-0.3 -1.4 -0.4 -2.8M766.9 426.2q1.6 -1.2 3.3 -2.3M718.2 399.9q-1.9 -1.9 -2.9 -3.9M678.8 441.5q-2.2 -0.4 -4.1 -1.2M683.8 434.3q-1.3 -2.4 -3.0 -4.3M768.6 430.3q2.6 1.1 5.0 1.4M763.8 422.9q1.4 -1.9 2.8 -3.8M693.1 422.1q-1.3 -2.7 -3.0 -5.0M731.2 402.9q-0.1 -3.0 0.5 -5.8M752.5 416.1q-0.6 -2.4 -0.5 -4.5M757.5 418.7q2.0 -2.3 3.7 -4.7M748.8 414.0q1.1 -0.7 1.9 -1.6M721.3 399.8q0.9 -2.6 1.6 -5.3M698.0 416.4q-2.1 0.1 -3.6 -0.4M674.0 448.7q-3.4 -0.0 -6.3 -0.8M716.9 400.3q-0.7 -1.3 -1.2 -2.7M680.5 439.0q-2.1 -0.6 -4.1 -1.5M761.6 421.2q2.9 -1.2 5.2 -2.8M696.5 418.1q-1.1 -0.9 -2.2 -1.9M770.3 439.7q1.9 -1.9 3.9 -3.0M744.9 411.4q2.6 -0.6 4.5 -1.7M762.8 422.1q0.0 -1.8 0.5 -3.3M709.3 406.8q0.3 -2.2 -0.1 -3.9M709.3 406.8q-0.8 -1.1 -1.6 -2.1M765.5 424.5q2.0 0.7 3.4 0.7M712.0 404.1q-2.1 0.2 -3.6 -0.2M672.7 450.8q-1.5 -2.9 -3.4 -5.2M748.8 414.0q0.1 -2.1 0.6 -3.9M744.9 411.4q2.1 -0.7 3.6 -1.8M696.5 418.1q-1.1 -0.9 -2.1 -1.9M738.9 407.2q1.9 -0.9 3.4 -2.0M757.5 418.7q2.1 -0.4 3.4 -1.3M694.8 420.0q-1.1 -2.9 -2.7 -5.3M760.3 420.3q2.7 -1.5 4.8 -3.4M677.1 444.0q-2.1 -1.6 -4.3 -3.1M716.9 400.3q-1.7 -1.2 -2.8 -2.5M768.1 428.6q1.5 0.1 3.0 -0.0M727.1 401.3q-0.8 -2.6 -0.8 -4.8M761.6 421.2q0.8 -2.5 2.0 -4.8M744.9 411.4q1.0 -0.5 1.8 -1.2M719.7 399.8q-0.7 -2.9 -0.9 -5.7M757.5 418.7q-0.7 -2.4 -0.7 -4.3M709.3 406.8q-0.6 -2.9 -1.8 -5.2M712.0 404.1q-0.8 -3.0 -2.2 -5.4M675.5 446.4q-0.8 -2.1 -2.0 -3.7M694.8 420.0q-0.3 -1.2 -0.8 -2.2M740.9 408.6q1.7 -2.0 3.3 -4.1M685.6 431.9q-1.5 0.0 -2.7 -0.3M760.3 420.3q0.6 -0.9 1.2 -1.9M757.5 418.7q0.1 -2.2 0.6 -4.2M691.2 424.4q-1.8 -0.6 -3.3 -1.4M671.5 452.6q-2.0 -1.4 -4.0 -2.8M759.0 419.5q2.0 -1.9 3.7 -4.0M767.5 427.3q2.3 -1.9 4.8 -3.5M748.8 414.0q-0.2 -2.2 0.1 -4.1M757.5 418.7q0.1 -2.8 0.8 -5.3M696.5 418.1q-0.6 -2.6 -1.8 -4.7M674.0 448.7q-0.2 -2.2 -0.9 -3.7M698.0 416.4q-1.8 -0.9 -3.4 -2.1M768.1 428.6q1.2 0.1 2.3 -0.1M731.2 402.9q2.2 -1.4 3.8 -3.1M766.9 426.2q3.0 0.2 5.7 -0.4M731.2 402.9q2.2 -1.9 3.8 -4.0M704.9 410.4q-1.4 -2.5 -3.0 -4.9M736.9 405.9q-0.1 -3.0 0.5 -5.6M704.9 410.4q-1.3 -0.5 -2.3 -1.2M744.9 411.4q1.7 -1.5 3.2 -3.1M731.2 402.9q0.3 -1.7 0.9 -3.3M696.5 418.1q-1.5 -2.2 -3.2 -4.2M710.7 405.4q-1.6 -0.6 -3.0 -1.4M770.6 442.0q1.3 -1.7 2.7 -2.7M672.7 450.8q-3.1 -0.6 -5.9 -1.7M704.9 410.4q-2.9 -0.8 -5.1 -2.2M761.6 421.2q0.0 -1.8 0.5 -3.3M733.1 403.8q2.9 -1.5 4.9 -3.5" fill="none" stroke="#000" stroke-width="1.0"/><path d="M645 551q-6 -3 -4 -12M650 561q-9 1 -9 -9M661 567q-5 5 -11 0M768 578q6 2 9 -6M705 406q-4 -5 -2 -9M735 402q5 -4 9 -3M770 430q5 -2 8 -8M772 440q6 -3 9 -10" fill="none" stroke="#000" stroke-width="1.0"/></g></defs></svg>
<div id="vscroll" class="a"></div>
<div class="a" style="left:326px;top:93px;width:904px;height:1px;background:#fbfbfc"></div>
<div class="a" style="left:326px;top:94px;width:885px;height:1px;background:rgba(0,0,0,0.1)"></div>
<div class="a" style="left:325px;top:94px;width:1px;height:566px;background:#f6f7f7"></div>
<div class="a" style="left:326px;top:659px;width:885px;height:1px;background:rgba(0,0,0,0.12)"></div>
<div class="a" style="left:1217px;top:422px;width:8px;height:79px;background:#a9d6f2;border:1px solid #6ec1ee;border-radius:4px"></div>

<!-- taskbar -->
<div id="task" class="a"></div>
<!-- launcher icons -->
<svg class="a" style="left:11px;top:667px" width="18" height="18" viewBox="0 0 18 18">
 <circle cx="9" cy="9" r="8" fill="#555"/>
 <path d="M9 9 L9 1 A8 8 0 0 1 16 5 Z" fill="#f39c1f"/>
 <path d="M9 9 L16 5 A8 8 0 0 1 16.5 12 Z" fill="#8fc23d"/>
 <path d="M9 9 L16.5 12 A8 8 0 0 1 10 17 Z" fill="#27ae60"/>
 <path d="M9 9 L10 17 A8 8 0 0 1 2.5 13.5 Z" fill="#2980b9"/>
 <path d="M9 9 L2.5 13.5 A8 8 0 0 1 1.5 6 Z" fill="#8e44ad"/>
 <path d="M9 9 L1.5 6 A8 8 0 0 1 9 1 Z" fill="#e74c3c"/>
 <circle cx="9" cy="9" r="2.2" fill="#333"/>
</svg>
<svg class="a" style="left:48px;top:666px" width="16" height="20" viewBox="0 0 16 20">
 <path d="M1 1 H11 L15 5 V19 H1 Z" fill="#31363b"/>
 <path d="M11 1 V5 H15" fill="#6e7378"/>
 <rect x="4.5" y="8" width="6" height="7" rx="1" fill="none" stroke="#8a8f94" stroke-width="0.9"/>
</svg>
<svg class="a" style="left:82px;top:667px" width="20" height="18" viewBox="0 0 20 18">
 <path d="M1 1 H8 L10 3 H19 V17 H1 Z" fill="#147eb8"/>
 <rect x="1" y="5" width="18" height="12" fill="#3daee9"/>
 <rect x="2.5" y="4" width="15" height="1.3" fill="#fff"/>
 <path d="M1 8 H19 V17 H1Z" fill="#1d99f3" opacity="0.35"/>
</svg>
<svg class="a" style="left:119px;top:667px" width="18" height="18" viewBox="0 0 18 18">
 <rect x="1" y="1" width="16" height="16" rx="1" fill="#31363b"/>
 <path d="M7 5.5 L10.5 9 L7 12.5" fill="none" stroke="#9ea3a8" stroke-width="1"/>
</svg>
<svg class="a" style="left:188px;top:667px" width="18" height="18" viewBox="0 0 18 18">
 <circle cx="6" cy="3" r="1.2" fill="#232627"/>
 <circle cx="3" cy="9" r="1.2" fill="#232627"/>
 <circle cx="6" cy="15" r="1.6" fill="#232627"/>
 <path d="M10 4 L14 8 L10 12 Z" fill="#232627"/>
 <circle cx="10" cy="9" r="1" fill="#232627"/>
</svg>
<svg class="a" style="left:222px;top:667px" width="16" height="18" viewBox="0 0 16 18">
 <path d="M1.5 1.5 H10 L14.5 6 V16.5 H1.5 Z M10 1.5 V6 H14.5" fill="#fcfcfc" stroke="#4d5a66" stroke-width="1.1"/>
</svg>
<!-- tasks -->
<div class="tk" style="left:248px;width:139px"></div>
<div class="tk" style="left:388px;width:139px"></div>
<div class="tk" style="left:528px;width:139px"></div>
<div class="tk" style="left:668px;width:140px"></div>
<div class="tk" style="left:809px;width:139px;background:#a2d2ef;border-top-color:#3daee9"></div>
<svg class="a" style="left:254px;top:665px" width="20" height="20" viewBox="0 0 20 20">
 <circle cx="10" cy="11" r="8.5" fill="#ff7139"/>
 <path d="M10 2.5 A8.5 8.5 0 0 1 18.5 11 A8.5 8.5 0 0 1 10 19.5 A8.5 8.5 0 0 1 1.5 11 C3 15 8 17 12 14 C15 11 13 5 10 2.5Z" fill="#ffbd2e"/>
 <path d="M1.5 11 A8.5 8.5 0 0 0 10 19.5 A8.5 8.5 0 0 0 16 17 C12 18 5 17 1.5 11Z" fill="#f5307a"/>
 <circle cx="10.5" cy="10.5" r="3.6" fill="#7542e5"/>
 <path d="M6 6 C8 4 11 4 13 6" fill="none" stroke="#ff8a16" stroke-width="1.5"/>
</svg>
<svg class="a" style="left:366px;top:668px" width="16" height="16" viewBox="0 0 16 16">
 <rect x="1" y="5.5" width="2.2" height="5" fill="#232627"/>
 <path d="M4 5.5 L8.5 1.5 V14.5 L4 10.5 Z" fill="#232627"/>
 <path d="M10.5 4.5 A4 4 0 0 1 10.5 11.5" fill="none" stroke="#232627" stroke-width="1.2"/>
 <path d="M12 2.5 A6.5 6.5 0 0 1 12 13.5" fill="none" stroke="#232627" stroke-width="1" opacity="0.6"/>
</svg>
<svg class="a" style="left:395px;top:667px" width="20" height="17" viewBox="0 0 20 17">
 <path d="M0.5 0.5 H7 L8.5 2 H19.5 V16.5 H0.5 Z" fill="#147eb8"/>
 <rect x="1.5" y="3" width="17" height="2" fill="#f0f0f0"/>
 <path d="M0.5 5 H19.5 V16.5 H0.5 Z" fill="#3daee9"/>
 <path d="M0.5 11 L19.5 6 V16.5 H0.5Z" fill="#2e9bd6" opacity="0.5"/>
</svg>
<svg class="a" style="left:535px;top:667px" width="20" height="17" viewBox="0 0 20 17">
 <path d="M0.5 0.5 H7 L8.5 2 H19.5 V16.5 H0.5 Z" fill="#147eb8"/>
 <rect x="1.5" y="3" width="17" height="2" fill="#f0f0f0"/>
 <path d="M0.5 5 H19.5 V16.5 H0.5 Z" fill="#3daee9"/>
 <path d="M0.5 11 L19.5 6 V16.5 H0.5Z" fill="#2e9bd6" opacity="0.5"/>
</svg>
<svg class="a" style="left:676px;top:667px" width="20" height="17" viewBox="0 0 20 17">
 <path d="M0.5 0.5 H7 L8.5 2 H19.5 V16.5 H0.5 Z" fill="#147eb8"/>
 <rect x="1.5" y="3" width="17" height="2" fill="#f0f0f0"/>
 <path d="M0.5 5 H19.5 V16.5 H0.5 Z" fill="#3daee9"/>
 <path d="M0.5 11 L19.5 6 V16.5 H0.5Z" fill="#2e9bd6" opacity="0.5"/>
</svg>
<svg class="a" style="left:818px;top:667px" width="16" height="17" viewBox="0 0 16 17">
 <rect x="0.5" y="1" width="15" height="15.5" rx="0.8" fill="#232629"/>
 <rect x="1" y="0.8" width="3.2" height="5" fill="#ed1c3a"/>
 <path d="M15 2.5 C10 5 8 10 9 14.5 C10 16 13 16 15 15" stroke="#1d99f3" stroke-width="1.5" fill="none"/>
</svg>
<div class="t tkt" style="left:281px;font-size:11.6px">Le Shiatsu - ...</div>
<div class="t tkt" style="left:422px;font-size:11.9px">Recherche de eti...</div>
<div class="t tkt" style="left:562px;font-size:12.25px">Michel — Dolphin</div>
<div class="t tkt" style="left:703px;font-size:12px">Photos — Dolphi...</div>
<div class="t tkt" style="left:843px;font-size:10.8px;letter-spacing:0.05px">ETIREMENTS DE...</div>
<!-- tray -->
<svg class="a" style="left:965px;top:667px" width="17" height="17" viewBox="0 0 17 17">
 <path d="M8.5 2.5 C5.5 2.5 4.5 5 4.5 8 V11 L2.5 13 H14.5 L12.5 11 V8 C12.5 5 11.5 2.5 8.5 2.5Z" fill="none" stroke="#232627" stroke-width="1.1"/>
 <path d="M7 14.5 A1.5 1.5 0 0 0 10 14.5Z" fill="#232627"/>
 <path d="M3 6 Q2 3.5 3.5 1.5 M14 6 Q15 3.5 13.5 1.5 M1.2 5.5 Q0.5 3 1.5 1.5 M15.8 5.5 Q16.5 3 15.5 1.5" fill="none" stroke="#232627" stroke-width="0.8"/>
</svg>
<svg class="a" style="left:993px;top:667px" width="15" height="17" viewBox="0 0 15 17">
 <rect x="1.5" y="3" width="12" height="13" fill="none" stroke="#232627" stroke-width="1.2"/>
 <rect x="3.5" y="1.5" width="8" height="3.2" fill="#232627"/>
 <path d="M4 8 H11 M4 10.5 H9 M4 13 H7" stroke="#232627" stroke-width="1"/>
</svg>
<svg class="a" style="left:1021px;top:667px" width="12" height="17" viewBox="0 0 12 17">
 <path d="M2 4.5 L9.5 11.5 L6 15 V1.5 L9.5 5 L2 12" fill="none" stroke="#232627" stroke-width="1.1"/>
</svg>
<svg class="a" style="left:1045px;top:668px" width="19" height="16" viewBox="0 0 19 16">
 <path d="M1.5 5.5 A11 11 0 0 1 17.5 5.5" fill="none" stroke="#232627" stroke-width="0.9" opacity="0.45"/>
 <path d="M3.8 8 A8 8 0 0 1 15.2 8" fill="none" stroke="#232627" stroke-width="1.2"/>
 <path d="M6.3 10.5 A4.5 4.5 0 0 1 12.7 10.5" fill="none" stroke="#232627" stroke-width="1.2"/>
 <circle cx="9.5" cy="13.5" r="1.2" fill="none" stroke="#232627" stroke-width="1"/>
</svg>
<svg class="a" style="left:1073px;top:668px" width="16" height="16" viewBox="0 0 16 16">
 <rect x="0.5" y="5.5" width="2.2" height="5" fill="#232627"/>
 <path d="M3.5 5.5 L8 1.5 V14.5 L3.5 10.5 Z" fill="#232627"/>
 <path d="M10 4.5 A4 4 0 0 1 10 11.5" fill="none" stroke="#232627" stroke-width="1.2"/>
 <path d="M11.5 2.5 A6.5 6.5 0 0 1 11.5 13.5" fill="none" stroke="#232627" stroke-width="1" opacity="0.45"/>
</svg>
<svg class="a" style="left:1100px;top:672px" width="13" height="8" viewBox="0 0 13 8">
 <path d="M1 7 L6.5 1 L12 7 Z" fill="#232627"/>
</svg>
<div class="t" style="left:1137px;top:664px;font-size:14.3px">16:09</div>
<div class="t" style="left:1124px;top:678px;font-size:11.3px;letter-spacing:0.65px">08/11/2023</div>
<svg class="a" style="left:1202px;top:667px" width="16" height="17" viewBox="0 0 16 17">
 <rect x="1.5" y="1.5" width="13" height="14" fill="none" stroke="#232627" stroke-width="1.1"/>
 <path d="M2 13 H14" stroke="#232627" stroke-width="1"/>
</svg>
</body></html>
